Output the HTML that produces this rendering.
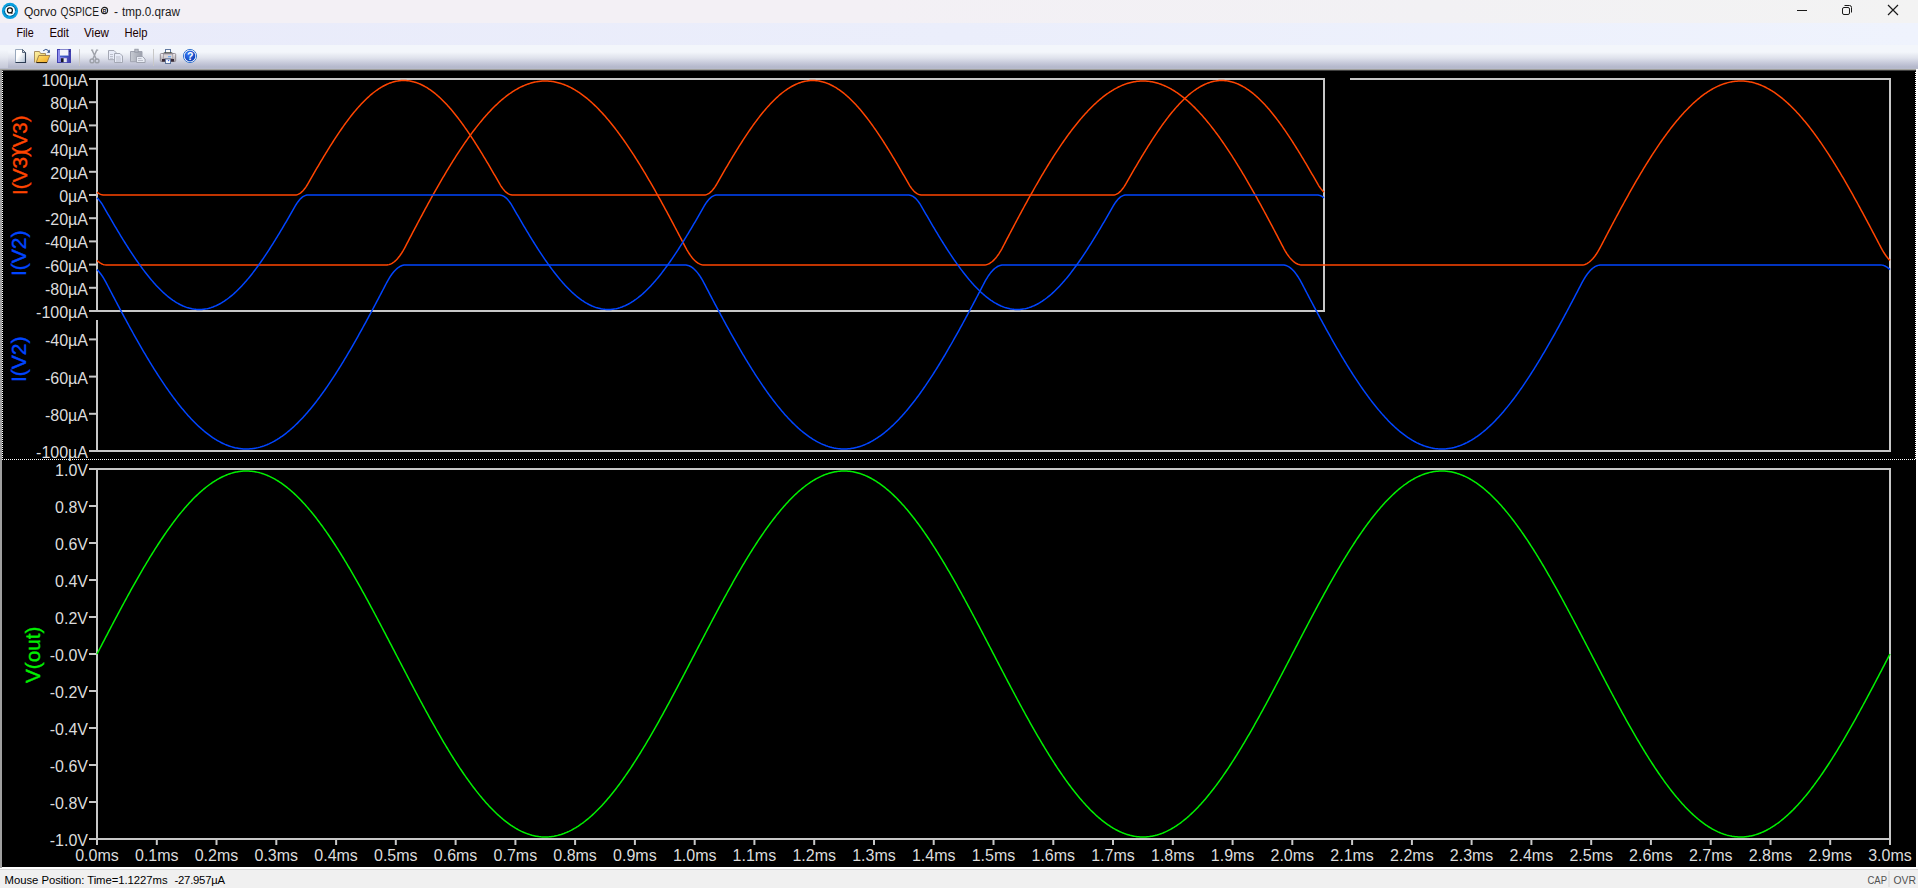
<!DOCTYPE html>
<html><head><meta charset="utf-8">
<style>
html,body{margin:0;padding:0;width:1918px;height:888px;overflow:hidden;background:#f0f0f0}
body{position:relative;font-family:"Liberation Sans",sans-serif}
.abs{position:absolute}
#title{left:0;top:0;width:1918px;height:23px;background:linear-gradient(to right,#f3f0f5 0%,#f3f0f5 45%,#f2f1f4 75%,#f3f3f3 100%)}
#menu{left:0;top:23px;width:1918px;height:22px;background:linear-gradient(to right,#e9ebfa 0%,#ebeefb 50%,#eff3fd 100%)}
#tool{left:0;top:45px;width:1918px;height:26px;background:linear-gradient(#f3f6fb 0px,#f3f6fb 7px,#dfe2ec 13px,#c6c9da 18px,#b4b8cc 22px,#b8bbcc 24px,#a0a09c 24px,#a0a09c 25px,#404040 25px,#404040 26px)}
#status{left:0;top:867px;width:1918px;height:21px;background:linear-gradient(#fff 0px,#fff 2px,#dadada 2px,#dadada 3px,#f0f0f0 3px)}
svg text{font-family:"Liberation Sans",sans-serif}
.al{font-size:16px;fill:#dcdcdc;text-anchor:end}
.xl{font-size:16px;fill:#dcdcdc;text-anchor:middle}
.tl{font-size:20px}
.mt{font-size:12px;fill:#1a0000}
</style></head><body>
<div id="title" class="abs"></div>
<div id="menu" class="abs"></div>
<div id="tool" class="abs"></div>
<div class="abs" style="left:0;top:45px;width:8px;height:23px;background:linear-gradient(#f3f6fb 0px,#f3f6fb 5px,#e6e9f1 12px,#d2d5e2 18px,#c6c9d8 23px)"></div>
<div id="status" class="abs"></div>
<svg class="abs" style="left:0;top:0" width="1918" height="888" viewBox="0 0 1918 888">
<!-- title -->
<circle cx="10" cy="10.9" r="8.1" fill="#0aa0e0"/>
<circle cx="10" cy="10.8" r="5.6" fill="none" stroke="#104060" stroke-width="0.9" stroke-dasharray="6 2.8 6 2.8" stroke-dashoffset="-2" opacity="0.8"/>
<circle cx="10" cy="10.8" r="4.9" fill="#fff"/>
<circle cx="9.9" cy="10.4" r="2.5" fill="none" stroke="#111" stroke-width="1.25"/>
<path d="M10.8,12.2L12.4,13.5" stroke="#111" stroke-width="1.3"/>
<g style="font-size:12px;fill:#1a1a1a"><text x="24" y="16">Qorvo</text><text x="60.5" y="16" textLength="38.5" lengthAdjust="spacingAndGlyphs">QSPICE</text></g><circle cx="104.5" cy="10.5" r="3.1" fill="none" stroke="#1a1a1a" stroke-width="1.1"/><text x="104.6" y="12.6" style="font-size:5.5px;font-weight:bold;fill:#1a1a1a;text-anchor:middle">R</text><g style="font-size:12px;fill:#1a1a1a"><text x="114" y="16">-</text><text x="122" y="16" textLength="58" lengthAdjust="spacingAndGlyphs">tmp.0.qraw</text></g>
<g stroke="#1a1a1a" stroke-width="1" fill="none">
<path d="M1797,10.5H1807"/>
<rect x="1842.5" y="7.5" width="7" height="7" rx="1.5"/>
<path d="M1844.5,5.5H1849.5a2,2 0 0 1 2,2V12.5"/>
<path d="M1888,5L1898,15M1898,5L1888,15" stroke-width="1.2"/>
</g>
<!-- menu -->
<text x="16.4" y="37" class="mt" textLength="17.3" lengthAdjust="spacingAndGlyphs">File</text>
<text x="49.5" y="37" class="mt" textLength="19.5" lengthAdjust="spacingAndGlyphs">Edit</text>
<text x="84" y="37" class="mt" textLength="25" lengthAdjust="spacingAndGlyphs">View</text>
<text x="124.5" y="37" class="mt" textLength="23" lengthAdjust="spacingAndGlyphs">Help</text>
<!-- toolbar icons -->
<g id="icons">
<defs>
<linearGradient id="gdoc" x1="0" y1="0" x2="1" y2="1"><stop offset="0.4" stop-color="#ffffff"/><stop offset="1" stop-color="#b0c0d4"/></linearGradient>
<linearGradient id="gfb" x1="0" y1="0" x2="1" y2="1"><stop offset="0" stop-color="#fff4a8"/><stop offset="1" stop-color="#e8c050"/></linearGradient>
<linearGradient id="gff" x1="0" y1="0" x2="1" y2="1"><stop offset="0" stop-color="#ffe070"/><stop offset="1" stop-color="#f0a820"/></linearGradient>
<linearGradient id="gsave" x1="0" y1="0" x2="1" y2="0"><stop offset="0" stop-color="#9c9cf8"/><stop offset="1" stop-color="#3434a4"/></linearGradient>
<linearGradient id="gclip" x1="0" y1="0" x2="1" y2="0"><stop offset="0" stop-color="#c8ccd4"/><stop offset="1" stop-color="#9ca0ac"/></linearGradient>
<linearGradient id="gprn" x1="0" y1="0" x2="0" y2="1"><stop offset="0" stop-color="#f4f0f4"/><stop offset="0.5" stop-color="#c8c4c8"/><stop offset="1" stop-color="#a8a4a8"/></linearGradient>
<radialGradient id="ghelp" cx="0.35" cy="0.3" r="0.8"><stop offset="0" stop-color="#3a7cf8"/><stop offset="1" stop-color="#0838b0"/></radialGradient>
</defs>
<!-- new -->
<path d="M15.5,49.5H22.5L25.5,52.5V62.5H15.5Z" fill="url(#gdoc)" stroke="#98a8bc" stroke-width="1"/>
<path d="M25.5,52.5V62.5H15.5" fill="none" stroke="#2c3c54" stroke-width="1.1"/>
<path d="M22.5,49.5V52.5H25.5Z" fill="#d8e0ec" stroke="#3a4a60" stroke-width="0.8"/>
<!-- open -->
<path d="M34.5,62.5V51.5H39.5L40.5,53.5H45.5V56" fill="url(#gfb)" stroke="#a89060" stroke-width="1"/>
<path d="M36.2,62.5L38.8,55.5H49.8L47,62.5Z" fill="url(#gff)" stroke="#907040" stroke-width="0.8"/>
<path d="M36.5,62.6H47" stroke="#281c08" stroke-width="1"/>
<path d="M43.2,50.8Q45.8,48 48.6,50.6" fill="none" stroke="#30508a" stroke-width="1"/>
<path d="M47,52.8L50,52.8L49.6,49.6Z" fill="#30508a"/>
<!-- save -->
<rect x="57" y="49" width="14" height="14" fill="url(#gsave)"/>
<rect x="57.5" y="49.5" width="13" height="13" fill="none" stroke="#4040b0" stroke-width="1"/>
<rect x="60" y="49.6" width="8.4" height="6.2" fill="#f2f4fa"/>
<path d="M60,56.2H68.4" stroke="#2850c0" stroke-width="1"/>
<rect x="61" y="58.2" width="5.8" height="4" fill="#e4e8f0"/>
<rect x="61" y="58.2" width="2.6" height="4" fill="#141428"/>
<rect x="69.2" y="50.8" width="1" height="1" fill="#202050"/>
<path d="M79.5,49V66" stroke="#c8c8c8" stroke-width="1"/>
<!-- cut -->
<g fill="none" stroke="#9ea2aa" stroke-width="1.4">
<circle cx="92" cy="60.9" r="1.9"/><circle cx="97.1" cy="60.9" r="1.9"/>
<path d="M92.8,59.2L96.6,50.4M96.3,59.2L92.2,50.4"/>
</g>
<path d="M91,50.2h2.2M96,50.2h2.2" stroke="#9ea2aa" stroke-width="1.2"/>
<!-- copy -->
<g stroke="#a4a8b4" stroke-width="1">
<path d="M108.5,50.5h5.5l2,2v7.2h-7.5Z" fill="#e8ecf8"/>
<path d="M114.5,53.5h5.5l2.5,2.5v6.5h-8Z" fill="#e8ecf8"/>
</g>
<g stroke="#b0b4c0" stroke-width="0.8">
<path d="M110,54.5h3M110,56.5h3M110,58.3h3M116,57h4.5M116,59h5M116,61h5"/>
</g>
<!-- paste -->
<path d="M130.5,51.5h11.5v10.2h-11.5Z" fill="url(#gclip)" stroke="#a0a4b0" stroke-width="1"/>
<rect x="134.8" y="49.2" width="3.4" height="3" fill="#b8bcc6" stroke="#9094a0" stroke-width="0.8"/>
<path d="M136.5,56.5h6l2.6,2.5v3.5h-8.6Z" fill="#e8ecf4" stroke="#a0a4b0" stroke-width="1"/>
<path d="M138,58.5h3.5M138,60.5h5" stroke="#b0b4c0" stroke-width="0.8"/>
<path d="M153.5,49V66" stroke="#c8c8c8" stroke-width="1"/>
<!-- print -->
<rect x="165.5" y="49.5" width="5" height="4" fill="#fff" stroke="#6078a0" stroke-width="1"/>
<path d="M162.5,53.5L164.5,52.2H171.5L173.5,53.5Z" fill="#404840"/>
<rect x="160.3" y="53.5" width="15.4" height="8" rx="1" fill="url(#gprn)" stroke="#807880" stroke-width="0.8"/>
<rect x="163.3" y="54" width="9.5" height="4.5" fill="#d8d4d8" stroke="#908890" stroke-width="0.6"/>
<rect x="168" y="56.2" width="3" height="1" fill="#58a0f8"/>
<rect x="162" y="59" width="12" height="2.6" fill="#382a38"/>
<rect x="165.5" y="59" width="5" height="4.5" fill="#f4f8ff" stroke="#6078a0" stroke-width="1"/>
<circle cx="168.6" cy="60.6" r="0.7" fill="#2850e0"/>
<!-- help -->
<circle cx="190" cy="56" r="6.6" fill="#ffffff" stroke="#3a78d0" stroke-width="1"/>
<circle cx="190" cy="56" r="5.4" fill="url(#ghelp)"/>
<text x="190.3" y="60.2" style="font-size:10.5px;font-weight:bold;fill:#fff;text-anchor:middle">?</text>
</g>
<rect x="2" y="71" width="1914" height="796" fill="#000"/>
<rect x="0" y="70" width="2" height="798" fill="#a0a0a0"/>
<rect x="1916" y="69" width="2" height="798" fill="#ffffff"/>
<defs><pattern id="dh" x="0" y="0" width="2" height="1" patternUnits="userSpaceOnUse"><rect x="0" y="0" width="1" height="1" fill="#fff"/></pattern><pattern id="dv1" x="0" y="1" width="1" height="2" patternUnits="userSpaceOnUse"><rect x="0" y="0" width="1" height="1" fill="#fff"/></pattern><pattern id="dv2" x="0" y="0" width="1" height="2" patternUnits="userSpaceOnUse"><rect x="0" y="0" width="1" height="1" fill="#fff"/></pattern></defs>
<rect x="2" y="459" width="1914" height="1" fill="url(#dh)"/>
<rect x="2" y="71" width="1" height="389" fill="url(#dv1)"/>
<rect x="1915" y="72" width="1" height="387" fill="url(#dv2)"/>
<path d="M1350,79H1890V451H97V320" fill="none" stroke="#c8c8c8" stroke-width="2"/>
<path d="M89,339.4H97" stroke="#c8c8c8" stroke-width="2"/>
<text x="88" y="346.4" class="al">-40µA</text>
<path d="M89,376.6H97" stroke="#c8c8c8" stroke-width="2"/>
<text x="88" y="383.6" class="al">-60µA</text>
<path d="M89,413.8H97" stroke="#c8c8c8" stroke-width="2"/>
<text x="88" y="420.8" class="al">-80µA</text>
<path d="M89,451.0H97" stroke="#c8c8c8" stroke-width="2"/>
<text x="88" y="458.0" class="al">-100µA</text>
<path d="M97,79H1324V311H97Z" fill="none" stroke="#c8c8c8" stroke-width="2"/>
<path d="M89,79.0H97" stroke="#c8c8c8" stroke-width="2"/>
<text x="88" y="86.0" class="al">100µA</text>
<path d="M89,102.2H97" stroke="#c8c8c8" stroke-width="2"/>
<text x="88" y="109.2" class="al">80µA</text>
<path d="M89,125.4H97" stroke="#c8c8c8" stroke-width="2"/>
<text x="88" y="132.4" class="al">60µA</text>
<path d="M89,148.6H97" stroke="#c8c8c8" stroke-width="2"/>
<text x="88" y="155.6" class="al">40µA</text>
<path d="M89,171.8H97" stroke="#c8c8c8" stroke-width="2"/>
<text x="88" y="178.8" class="al">20µA</text>
<path d="M89,195.0H97" stroke="#c8c8c8" stroke-width="2"/>
<text x="88" y="202.0" class="al">0µA</text>
<path d="M89,218.2H97" stroke="#c8c8c8" stroke-width="2"/>
<text x="88" y="225.2" class="al">-20µA</text>
<path d="M89,241.4H97" stroke="#c8c8c8" stroke-width="2"/>
<text x="88" y="248.4" class="al">-40µA</text>
<path d="M89,264.6H97" stroke="#c8c8c8" stroke-width="2"/>
<text x="88" y="271.6" class="al">-60µA</text>
<path d="M89,287.8H97" stroke="#c8c8c8" stroke-width="2"/>
<text x="88" y="294.8" class="al">-80µA</text>
<path d="M89,311.0H97" stroke="#c8c8c8" stroke-width="2"/>
<text x="88" y="318.0" class="al">-100µA</text>
<path d="M97.00,260.40 L98.00,261.32 L99.00,262.13 L100.00,262.84 L101.00,263.45 L102.00,263.96 L103.00,264.37 L104.00,264.68 L105.00,264.88 L106.00,264.99 L107.00,265.00 L108.00,265.00 L109.00,265.00 L110.00,265.00 L111.00,265.00 L112.00,265.00 L113.00,265.00 L114.00,265.00 L115.00,265.00 L116.00,265.00 L117.00,265.00 L118.00,265.00 L119.00,265.00 L120.00,265.00 L121.00,265.00 L122.00,265.00 L123.00,265.00 L124.00,265.00 L125.00,265.00 L126.00,265.00 L127.00,265.00 L128.00,265.00 L129.00,265.00 L130.00,265.00 L131.00,265.00 L132.00,265.00 L133.00,265.00 L134.00,265.00 L135.00,265.00 L136.00,265.00 L137.00,265.00 L138.00,265.00 L139.00,265.00 L140.00,265.00 L141.00,265.00 L142.00,265.00 L143.00,265.00 L144.00,265.00 L145.00,265.00 L146.00,265.00 L147.00,265.00 L148.00,265.00 L149.00,265.00 L150.00,265.00 L151.00,265.00 L152.00,265.00 L153.00,265.00 L154.00,265.00 L155.00,265.00 L156.00,265.00 L157.00,265.00 L158.00,265.00 L159.00,265.00 L160.00,265.00 L161.00,265.00 L162.00,265.00 L163.00,265.00 L164.00,265.00 L165.00,265.00 L166.00,265.00 L167.00,265.00 L168.00,265.00 L169.00,265.00 L170.00,265.00 L171.00,265.00 L172.00,265.00 L173.00,265.00 L174.00,265.00 L175.00,265.00 L176.00,265.00 L177.00,265.00 L178.00,265.00 L179.00,265.00 L180.00,265.00 L181.00,265.00 L182.00,265.00 L183.00,265.00 L184.00,265.00 L185.00,265.00 L186.00,265.00 L187.00,265.00 L188.00,265.00 L189.00,265.00 L190.00,265.00 L191.00,265.00 L192.00,265.00 L193.00,265.00 L194.00,265.00 L195.00,265.00 L196.00,265.00 L197.00,265.00 L198.00,265.00 L199.00,265.00 L200.00,265.00 L201.00,265.00 L202.00,265.00 L203.00,265.00 L204.00,265.00 L205.00,265.00 L206.00,265.00 L207.00,265.00 L208.00,265.00 L209.00,265.00 L210.00,265.00 L211.00,265.00 L212.00,265.00 L213.00,265.00 L214.00,265.00 L215.00,265.00 L216.00,265.00 L217.00,265.00 L218.00,265.00 L219.00,265.00 L220.00,265.00 L221.00,265.00 L222.00,265.00 L223.00,265.00 L224.00,265.00 L225.00,265.00 L226.00,265.00 L227.00,265.00 L228.00,265.00 L229.00,265.00 L230.00,265.00 L231.00,265.00 L232.00,265.00 L233.00,265.00 L234.00,265.00 L235.00,265.00 L236.00,265.00 L237.00,265.00 L238.00,265.00 L239.00,265.00 L240.00,265.00 L241.00,265.00 L242.00,265.00 L243.00,265.00 L244.00,265.00 L245.00,265.00 L246.00,265.00 L247.00,265.00 L248.00,265.00 L249.00,265.00 L250.00,265.00 L251.00,265.00 L252.00,265.00 L253.00,265.00 L254.00,265.00 L255.00,265.00 L256.00,265.00 L257.00,265.00 L258.00,265.00 L259.00,265.00 L260.00,265.00 L261.00,265.00 L262.00,265.00 L263.00,265.00 L264.00,265.00 L265.00,265.00 L266.00,265.00 L267.00,265.00 L268.00,265.00 L269.00,265.00 L270.00,265.00 L271.00,265.00 L272.00,265.00 L273.00,265.00 L274.00,265.00 L275.00,265.00 L276.00,265.00 L277.00,265.00 L278.00,265.00 L279.00,265.00 L280.00,265.00 L281.00,265.00 L282.00,265.00 L283.00,265.00 L284.00,265.00 L285.00,265.00 L286.00,265.00 L287.00,265.00 L288.00,265.00 L289.00,265.00 L290.00,265.00 L291.00,265.00 L292.00,265.00 L293.00,265.00 L294.00,265.00 L295.00,265.00 L296.00,265.00 L297.00,265.00 L298.00,265.00 L299.00,265.00 L300.00,265.00 L301.00,265.00 L302.00,265.00 L303.00,265.00 L304.00,265.00 L305.00,265.00 L306.00,265.00 L307.00,265.00 L308.00,265.00 L309.00,265.00 L310.00,265.00 L311.00,265.00 L312.00,265.00 L313.00,265.00 L314.00,265.00 L315.00,265.00 L316.00,265.00 L317.00,265.00 L318.00,265.00 L319.00,265.00 L320.00,265.00 L321.00,265.00 L322.00,265.00 L323.00,265.00 L324.00,265.00 L325.00,265.00 L326.00,265.00 L327.00,265.00 L328.00,265.00 L329.00,265.00 L330.00,265.00 L331.00,265.00 L332.00,265.00 L333.00,265.00 L334.00,265.00 L335.00,265.00 L336.00,265.00 L337.00,265.00 L338.00,265.00 L339.00,265.00 L340.00,265.00 L341.00,265.00 L342.00,265.00 L343.00,265.00 L344.00,265.00 L345.00,265.00 L346.00,265.00 L347.00,265.00 L348.00,265.00 L349.00,265.00 L350.00,265.00 L351.00,265.00 L352.00,265.00 L353.00,265.00 L354.00,265.00 L355.00,265.00 L356.00,265.00 L357.00,265.00 L358.00,265.00 L359.00,265.00 L360.00,265.00 L361.00,265.00 L362.00,265.00 L363.00,265.00 L364.00,265.00 L365.00,265.00 L366.00,265.00 L367.00,265.00 L368.00,265.00 L369.00,265.00 L370.00,265.00 L371.00,265.00 L372.00,265.00 L373.00,265.00 L374.00,265.00 L375.00,265.00 L376.00,265.00 L377.00,265.00 L378.00,265.00 L379.00,265.00 L380.00,265.00 L381.00,265.00 L382.00,265.00 L383.00,265.00 L384.00,265.00 L385.00,265.00 L386.00,265.00 L387.00,264.98 L388.00,264.86 L389.00,264.63 L390.00,264.31 L391.00,263.89 L392.00,263.36 L393.00,262.73 L394.00,262.00 L395.00,261.17 L396.00,260.24 L397.00,259.20 L398.00,258.07 L399.00,256.83 L400.00,255.49 L401.00,254.05 L402.00,252.51 L403.00,250.87 L404.00,249.13 L405.00,247.29 L406.00,245.37 L407.00,243.45 L408.00,241.53 L409.00,239.61 L410.00,237.70 L411.00,235.79 L412.00,233.88 L413.00,231.97 L414.00,230.07 L415.00,228.18 L416.00,226.28 L417.00,224.39 L418.00,222.51 L419.00,220.63 L420.00,218.75 L421.00,216.88 L422.00,215.02 L423.00,213.16 L424.00,211.31 L425.00,209.46 L426.00,207.62 L427.00,205.79 L428.00,203.96 L429.00,202.14 L430.00,200.32 L431.00,198.51 L432.00,196.71 L433.00,194.92 L434.00,193.14 L435.00,191.36 L436.00,189.59 L437.00,187.83 L438.00,186.08 L439.00,184.34 L440.00,182.60 L441.00,180.88 L442.00,179.16 L443.00,177.46 L444.00,175.76 L445.00,174.07 L446.00,172.40 L447.00,170.73 L448.00,169.07 L449.00,167.43 L450.00,165.79 L451.00,164.17 L452.00,162.56 L453.00,160.96 L454.00,159.37 L455.00,157.79 L456.00,156.22 L457.00,154.67 L458.00,153.13 L459.00,151.60 L460.00,150.08 L461.00,148.58 L462.00,147.08 L463.00,145.61 L464.00,144.14 L465.00,142.69 L466.00,141.25 L467.00,139.83 L468.00,138.41 L469.00,137.02 L470.00,135.64 L471.00,134.27 L472.00,132.91 L473.00,131.57 L474.00,130.25 L475.00,128.94 L476.00,127.64 L477.00,126.37 L478.00,125.10 L479.00,123.85 L480.00,122.62 L481.00,121.40 L482.00,120.20 L483.00,119.01 L484.00,117.85 L485.00,116.69 L486.00,115.56 L487.00,114.44 L488.00,113.33 L489.00,112.25 L490.00,111.18 L491.00,110.12 L492.00,109.09 L493.00,108.07 L494.00,107.07 L495.00,106.08 L496.00,105.12 L497.00,104.17 L498.00,103.24 L499.00,102.32 L500.00,101.43 L501.00,100.55 L502.00,99.69 L503.00,98.85 L504.00,98.03 L505.00,97.23 L506.00,96.44 L507.00,95.68 L508.00,94.93 L509.00,94.20 L510.00,93.49 L511.00,92.80 L512.00,92.13 L513.00,91.47 L514.00,90.84 L515.00,90.23 L516.00,89.63 L517.00,89.06 L518.00,88.50 L519.00,87.96 L520.00,87.44 L521.00,86.95 L522.00,86.47 L523.00,86.01 L524.00,85.57 L525.00,85.15 L526.00,84.75 L527.00,84.38 L528.00,84.02 L529.00,83.68 L530.00,83.36 L531.00,83.06 L532.00,82.78 L533.00,82.52 L534.00,82.29 L535.00,82.07 L536.00,81.87 L537.00,81.69 L538.00,81.53 L539.00,81.40 L540.00,81.28 L541.00,81.18 L542.00,81.11 L543.00,81.05 L544.00,81.02 L545.00,81.00 L546.00,81.01 L547.00,81.03 L548.00,81.08 L549.00,81.14 L550.00,81.23 L551.00,81.34 L552.00,81.46 L553.00,81.61 L554.00,81.78 L555.00,81.97 L556.00,82.17 L557.00,82.40 L558.00,82.65 L559.00,82.92 L560.00,83.21 L561.00,83.52 L562.00,83.85 L563.00,84.19 L564.00,84.56 L565.00,84.95 L566.00,85.36 L567.00,85.79 L568.00,86.24 L569.00,86.71 L570.00,87.19 L571.00,87.70 L572.00,88.23 L573.00,88.77 L574.00,89.34 L575.00,89.93 L576.00,90.53 L577.00,91.16 L578.00,91.80 L579.00,92.46 L580.00,93.14 L581.00,93.84 L582.00,94.56 L583.00,95.30 L584.00,96.06 L585.00,96.83 L586.00,97.63 L587.00,98.44 L588.00,99.27 L589.00,100.12 L590.00,100.99 L591.00,101.87 L592.00,102.78 L593.00,103.70 L594.00,104.64 L595.00,105.60 L596.00,106.57 L597.00,107.57 L598.00,108.58 L599.00,109.60 L600.00,110.65 L601.00,111.71 L602.00,112.79 L603.00,113.88 L604.00,114.99 L605.00,116.12 L606.00,117.27 L607.00,118.43 L608.00,119.61 L609.00,120.80 L610.00,122.01 L611.00,123.23 L612.00,124.47 L613.00,125.73 L614.00,127.00 L615.00,128.29 L616.00,129.59 L617.00,130.91 L618.00,132.24 L619.00,133.59 L620.00,134.95 L621.00,136.32 L622.00,137.71 L623.00,139.12 L624.00,140.54 L625.00,141.97 L626.00,143.41 L627.00,144.87 L628.00,146.34 L629.00,147.83 L630.00,149.33 L631.00,150.84 L632.00,152.36 L633.00,153.90 L634.00,155.44 L635.00,157.00 L636.00,158.58 L637.00,160.16 L638.00,161.76 L639.00,163.36 L640.00,164.98 L641.00,166.61 L642.00,168.25 L643.00,169.90 L644.00,171.56 L645.00,173.23 L646.00,174.91 L647.00,176.61 L648.00,178.31 L649.00,180.02 L650.00,181.74 L651.00,183.47 L652.00,185.21 L653.00,186.95 L654.00,188.71 L655.00,190.47 L656.00,192.25 L657.00,194.03 L658.00,195.82 L659.00,197.61 L660.00,199.42 L661.00,201.23 L662.00,203.05 L663.00,204.87 L664.00,206.70 L665.00,208.54 L666.00,210.38 L667.00,212.23 L668.00,214.09 L669.00,215.95 L670.00,217.82 L671.00,219.69 L672.00,221.57 L673.00,223.45 L674.00,225.34 L675.00,227.23 L676.00,229.12 L677.00,231.02 L678.00,232.93 L679.00,234.83 L680.00,236.74 L681.00,238.65 L682.00,240.57 L683.00,242.49 L684.00,244.41 L685.00,246.33 L686.00,248.22 L687.00,250.01 L688.00,251.70 L689.00,253.29 L690.00,254.78 L691.00,256.17 L692.00,257.46 L693.00,258.65 L694.00,259.73 L695.00,260.72 L696.00,261.60 L697.00,262.38 L698.00,263.06 L699.00,263.64 L700.00,264.11 L701.00,264.48 L702.00,264.76 L703.00,264.93 L704.00,265.00 L705.00,265.00 L706.00,265.00 L707.00,265.00 L708.00,265.00 L709.00,265.00 L710.00,265.00 L711.00,265.00 L712.00,265.00 L713.00,265.00 L714.00,265.00 L715.00,265.00 L716.00,265.00 L717.00,265.00 L718.00,265.00 L719.00,265.00 L720.00,265.00 L721.00,265.00 L722.00,265.00 L723.00,265.00 L724.00,265.00 L725.00,265.00 L726.00,265.00 L727.00,265.00 L728.00,265.00 L729.00,265.00 L730.00,265.00 L731.00,265.00 L732.00,265.00 L733.00,265.00 L734.00,265.00 L735.00,265.00 L736.00,265.00 L737.00,265.00 L738.00,265.00 L739.00,265.00 L740.00,265.00 L741.00,265.00 L742.00,265.00 L743.00,265.00 L744.00,265.00 L745.00,265.00 L746.00,265.00 L747.00,265.00 L748.00,265.00 L749.00,265.00 L750.00,265.00 L751.00,265.00 L752.00,265.00 L753.00,265.00 L754.00,265.00 L755.00,265.00 L756.00,265.00 L757.00,265.00 L758.00,265.00 L759.00,265.00 L760.00,265.00 L761.00,265.00 L762.00,265.00 L763.00,265.00 L764.00,265.00 L765.00,265.00 L766.00,265.00 L767.00,265.00 L768.00,265.00 L769.00,265.00 L770.00,265.00 L771.00,265.00 L772.00,265.00 L773.00,265.00 L774.00,265.00 L775.00,265.00 L776.00,265.00 L777.00,265.00 L778.00,265.00 L779.00,265.00 L780.00,265.00 L781.00,265.00 L782.00,265.00 L783.00,265.00 L784.00,265.00 L785.00,265.00 L786.00,265.00 L787.00,265.00 L788.00,265.00 L789.00,265.00 L790.00,265.00 L791.00,265.00 L792.00,265.00 L793.00,265.00 L794.00,265.00 L795.00,265.00 L796.00,265.00 L797.00,265.00 L798.00,265.00 L799.00,265.00 L800.00,265.00 L801.00,265.00 L802.00,265.00 L803.00,265.00 L804.00,265.00 L805.00,265.00 L806.00,265.00 L807.00,265.00 L808.00,265.00 L809.00,265.00 L810.00,265.00 L811.00,265.00 L812.00,265.00 L813.00,265.00 L814.00,265.00 L815.00,265.00 L816.00,265.00 L817.00,265.00 L818.00,265.00 L819.00,265.00 L820.00,265.00 L821.00,265.00 L822.00,265.00 L823.00,265.00 L824.00,265.00 L825.00,265.00 L826.00,265.00 L827.00,265.00 L828.00,265.00 L829.00,265.00 L830.00,265.00 L831.00,265.00 L832.00,265.00 L833.00,265.00 L834.00,265.00 L835.00,265.00 L836.00,265.00 L837.00,265.00 L838.00,265.00 L839.00,265.00 L840.00,265.00 L841.00,265.00 L842.00,265.00 L843.00,265.00 L844.00,265.00 L845.00,265.00 L846.00,265.00 L847.00,265.00 L848.00,265.00 L849.00,265.00 L850.00,265.00 L851.00,265.00 L852.00,265.00 L853.00,265.00 L854.00,265.00 L855.00,265.00 L856.00,265.00 L857.00,265.00 L858.00,265.00 L859.00,265.00 L860.00,265.00 L861.00,265.00 L862.00,265.00 L863.00,265.00 L864.00,265.00 L865.00,265.00 L866.00,265.00 L867.00,265.00 L868.00,265.00 L869.00,265.00 L870.00,265.00 L871.00,265.00 L872.00,265.00 L873.00,265.00 L874.00,265.00 L875.00,265.00 L876.00,265.00 L877.00,265.00 L878.00,265.00 L879.00,265.00 L880.00,265.00 L881.00,265.00 L882.00,265.00 L883.00,265.00 L884.00,265.00 L885.00,265.00 L886.00,265.00 L887.00,265.00 L888.00,265.00 L889.00,265.00 L890.00,265.00 L891.00,265.00 L892.00,265.00 L893.00,265.00 L894.00,265.00 L895.00,265.00 L896.00,265.00 L897.00,265.00 L898.00,265.00 L899.00,265.00 L900.00,265.00 L901.00,265.00 L902.00,265.00 L903.00,265.00 L904.00,265.00 L905.00,265.00 L906.00,265.00 L907.00,265.00 L908.00,265.00 L909.00,265.00 L910.00,265.00 L911.00,265.00 L912.00,265.00 L913.00,265.00 L914.00,265.00 L915.00,265.00 L916.00,265.00 L917.00,265.00 L918.00,265.00 L919.00,265.00 L920.00,265.00 L921.00,265.00 L922.00,265.00 L923.00,265.00 L924.00,265.00 L925.00,265.00 L926.00,265.00 L927.00,265.00 L928.00,265.00 L929.00,265.00 L930.00,265.00 L931.00,265.00 L932.00,265.00 L933.00,265.00 L934.00,265.00 L935.00,265.00 L936.00,265.00 L937.00,265.00 L938.00,265.00 L939.00,265.00 L940.00,265.00 L941.00,265.00 L942.00,265.00 L943.00,265.00 L944.00,265.00 L945.00,265.00 L946.00,265.00 L947.00,265.00 L948.00,265.00 L949.00,265.00 L950.00,265.00 L951.00,265.00 L952.00,265.00 L953.00,265.00 L954.00,265.00 L955.00,265.00 L956.00,265.00 L957.00,265.00 L958.00,265.00 L959.00,265.00 L960.00,265.00 L961.00,265.00 L962.00,265.00 L963.00,265.00 L964.00,265.00 L965.00,265.00 L966.00,265.00 L967.00,265.00 L968.00,265.00 L969.00,265.00 L970.00,265.00 L971.00,265.00 L972.00,265.00 L973.00,265.00 L974.00,265.00 L975.00,265.00 L976.00,265.00 L977.00,265.00 L978.00,265.00 L979.00,265.00 L980.00,265.00 L981.00,265.00 L982.00,265.00 L983.00,265.00 L984.00,265.00 L985.00,264.95 L986.00,264.79 L987.00,264.54 L988.00,264.18 L989.00,263.72 L990.00,263.16 L991.00,262.50 L992.00,261.74 L993.00,260.87 L994.00,259.90 L995.00,258.83 L996.00,257.66 L997.00,256.39 L998.00,255.02 L999.00,253.55 L1000.00,251.97 L1001.00,250.30 L1002.00,248.53 L1003.00,246.65 L1004.00,244.73 L1005.00,242.81 L1006.00,240.89 L1007.00,238.97 L1008.00,237.06 L1009.00,235.15 L1010.00,233.24 L1011.00,231.34 L1012.00,229.44 L1013.00,227.54 L1014.00,225.65 L1015.00,223.76 L1016.00,221.88 L1017.00,220.00 L1018.00,218.13 L1019.00,216.26 L1020.00,214.40 L1021.00,212.54 L1022.00,210.69 L1023.00,208.85 L1024.00,207.01 L1025.00,205.18 L1026.00,203.35 L1027.00,201.53 L1028.00,199.72 L1029.00,197.91 L1030.00,196.12 L1031.00,194.33 L1032.00,192.54 L1033.00,190.77 L1034.00,189.00 L1035.00,187.25 L1036.00,185.50 L1037.00,183.76 L1038.00,182.03 L1039.00,180.30 L1040.00,178.59 L1041.00,176.89 L1042.00,175.20 L1043.00,173.51 L1044.00,171.84 L1045.00,170.18 L1046.00,168.52 L1047.00,166.88 L1048.00,165.25 L1049.00,163.63 L1050.00,162.02 L1051.00,160.43 L1052.00,158.84 L1053.00,157.27 L1054.00,155.70 L1055.00,154.15 L1056.00,152.62 L1057.00,151.09 L1058.00,149.58 L1059.00,148.08 L1060.00,146.59 L1061.00,145.12 L1062.00,143.66 L1063.00,142.21 L1064.00,140.77 L1065.00,139.35 L1066.00,137.95 L1067.00,136.56 L1068.00,135.18 L1069.00,133.81 L1070.00,132.46 L1071.00,131.13 L1072.00,129.81 L1073.00,128.51 L1074.00,127.22 L1075.00,125.94 L1076.00,124.68 L1077.00,123.44 L1078.00,122.21 L1079.00,121.00 L1080.00,119.80 L1081.00,118.62 L1082.00,117.46 L1083.00,116.31 L1084.00,115.18 L1085.00,114.07 L1086.00,112.97 L1087.00,111.89 L1088.00,110.82 L1089.00,109.78 L1090.00,108.75 L1091.00,107.73 L1092.00,106.74 L1093.00,105.76 L1094.00,104.80 L1095.00,103.86 L1096.00,102.93 L1097.00,102.02 L1098.00,101.14 L1099.00,100.26 L1100.00,99.41 L1101.00,98.58 L1102.00,97.76 L1103.00,96.96 L1104.00,96.19 L1105.00,95.43 L1106.00,94.68 L1107.00,93.96 L1108.00,93.26 L1109.00,92.57 L1110.00,91.91 L1111.00,91.26 L1112.00,90.63 L1113.00,90.03 L1114.00,89.44 L1115.00,88.87 L1116.00,88.32 L1117.00,87.79 L1118.00,87.28 L1119.00,86.79 L1120.00,86.31 L1121.00,85.86 L1122.00,85.43 L1123.00,85.02 L1124.00,84.63 L1125.00,84.25 L1126.00,83.90 L1127.00,83.57 L1128.00,83.26 L1129.00,82.97 L1130.00,82.69 L1131.00,82.44 L1132.00,82.21 L1133.00,82.00 L1134.00,81.81 L1135.00,81.64 L1136.00,81.49 L1137.00,81.36 L1138.00,81.25 L1139.00,81.16 L1140.00,81.09 L1141.00,81.04 L1142.00,81.01 L1143.00,81.00 L1144.00,81.01 L1145.00,81.04 L1146.00,81.10 L1147.00,81.17 L1148.00,81.26 L1149.00,81.38 L1150.00,81.51 L1151.00,81.66 L1152.00,81.84 L1153.00,82.03 L1154.00,82.25 L1155.00,82.48 L1156.00,82.74 L1157.00,83.01 L1158.00,83.31 L1159.00,83.62 L1160.00,83.96 L1161.00,84.31 L1162.00,84.69 L1163.00,85.09 L1164.00,85.50 L1165.00,85.94 L1166.00,86.39 L1167.00,86.87 L1168.00,87.36 L1169.00,87.87 L1170.00,88.41 L1171.00,88.96 L1172.00,89.53 L1173.00,90.13 L1174.00,90.74 L1175.00,91.37 L1176.00,92.02 L1177.00,92.69 L1178.00,93.37 L1179.00,94.08 L1180.00,94.81 L1181.00,95.55 L1182.00,96.31 L1183.00,97.10 L1184.00,97.90 L1185.00,98.72 L1186.00,99.55 L1187.00,100.41 L1188.00,101.28 L1189.00,102.17 L1190.00,103.08 L1191.00,104.01 L1192.00,104.96 L1193.00,105.92 L1194.00,106.90 L1195.00,107.90 L1196.00,108.92 L1197.00,109.95 L1198.00,111.00 L1199.00,112.07 L1200.00,113.15 L1201.00,114.25 L1202.00,115.37 L1203.00,116.50 L1204.00,117.65 L1205.00,118.82 L1206.00,120.00 L1207.00,121.20 L1208.00,122.42 L1209.00,123.65 L1210.00,124.89 L1211.00,126.15 L1212.00,127.43 L1213.00,128.72 L1214.00,130.03 L1215.00,131.35 L1216.00,132.69 L1217.00,134.04 L1218.00,135.41 L1219.00,136.79 L1220.00,138.18 L1221.00,139.59 L1222.00,141.01 L1223.00,142.45 L1224.00,143.90 L1225.00,145.36 L1226.00,146.84 L1227.00,148.33 L1228.00,149.83 L1229.00,151.34 L1230.00,152.87 L1231.00,154.41 L1232.00,155.96 L1233.00,157.53 L1234.00,159.10 L1235.00,160.69 L1236.00,162.29 L1237.00,163.90 L1238.00,165.52 L1239.00,167.15 L1240.00,168.80 L1241.00,170.45 L1242.00,172.12 L1243.00,173.79 L1244.00,175.48 L1245.00,177.17 L1246.00,178.88 L1247.00,180.59 L1248.00,182.31 L1249.00,184.05 L1250.00,185.79 L1251.00,187.54 L1252.00,189.30 L1253.00,191.06 L1254.00,192.84 L1255.00,194.62 L1256.00,196.41 L1257.00,198.21 L1258.00,200.02 L1259.00,201.83 L1260.00,203.65 L1261.00,205.48 L1262.00,207.31 L1263.00,209.15 L1264.00,211.00 L1265.00,212.85 L1266.00,214.71 L1267.00,216.57 L1268.00,218.44 L1269.00,220.32 L1270.00,222.19 L1271.00,224.08 L1272.00,225.97 L1273.00,227.86 L1274.00,229.76 L1275.00,231.66 L1276.00,233.56 L1277.00,235.47 L1278.00,237.38 L1279.00,239.29 L1280.00,241.21 L1281.00,243.13 L1282.00,245.05 L1283.00,246.97 L1284.00,248.83 L1285.00,250.59 L1286.00,252.24 L1287.00,253.80 L1288.00,255.26 L1289.00,256.61 L1290.00,257.87 L1291.00,259.02 L1292.00,260.07 L1293.00,261.02 L1294.00,261.87 L1295.00,262.62 L1296.00,263.26 L1297.00,263.81 L1298.00,264.25 L1299.00,264.59 L1300.00,264.83 L1301.00,264.96 L1302.00,265.00 L1303.00,265.00 L1304.00,265.00 L1305.00,265.00 L1306.00,265.00 L1307.00,265.00 L1308.00,265.00 L1309.00,265.00 L1310.00,265.00 L1311.00,265.00 L1312.00,265.00 L1313.00,265.00 L1314.00,265.00 L1315.00,265.00 L1316.00,265.00 L1317.00,265.00 L1318.00,265.00 L1319.00,265.00 L1320.00,265.00 L1321.00,265.00 L1322.00,265.00 L1323.00,265.00 L1324.00,265.00 L1325.00,265.00 L1326.00,265.00 L1327.00,265.00 L1328.00,265.00 L1329.00,265.00 L1330.00,265.00 L1331.00,265.00 L1332.00,265.00 L1333.00,265.00 L1334.00,265.00 L1335.00,265.00 L1336.00,265.00 L1337.00,265.00 L1338.00,265.00 L1339.00,265.00 L1340.00,265.00 L1341.00,265.00 L1342.00,265.00 L1343.00,265.00 L1344.00,265.00 L1345.00,265.00 L1346.00,265.00 L1347.00,265.00 L1348.00,265.00 L1349.00,265.00 L1350.00,265.00 L1351.00,265.00 L1352.00,265.00 L1353.00,265.00 L1354.00,265.00 L1355.00,265.00 L1356.00,265.00 L1357.00,265.00 L1358.00,265.00 L1359.00,265.00 L1360.00,265.00 L1361.00,265.00 L1362.00,265.00 L1363.00,265.00 L1364.00,265.00 L1365.00,265.00 L1366.00,265.00 L1367.00,265.00 L1368.00,265.00 L1369.00,265.00 L1370.00,265.00 L1371.00,265.00 L1372.00,265.00 L1373.00,265.00 L1374.00,265.00 L1375.00,265.00 L1376.00,265.00 L1377.00,265.00 L1378.00,265.00 L1379.00,265.00 L1380.00,265.00 L1381.00,265.00 L1382.00,265.00 L1383.00,265.00 L1384.00,265.00 L1385.00,265.00 L1386.00,265.00 L1387.00,265.00 L1388.00,265.00 L1389.00,265.00 L1390.00,265.00 L1391.00,265.00 L1392.00,265.00 L1393.00,265.00 L1394.00,265.00 L1395.00,265.00 L1396.00,265.00 L1397.00,265.00 L1398.00,265.00 L1399.00,265.00 L1400.00,265.00 L1401.00,265.00 L1402.00,265.00 L1403.00,265.00 L1404.00,265.00 L1405.00,265.00 L1406.00,265.00 L1407.00,265.00 L1408.00,265.00 L1409.00,265.00 L1410.00,265.00 L1411.00,265.00 L1412.00,265.00 L1413.00,265.00 L1414.00,265.00 L1415.00,265.00 L1416.00,265.00 L1417.00,265.00 L1418.00,265.00 L1419.00,265.00 L1420.00,265.00 L1421.00,265.00 L1422.00,265.00 L1423.00,265.00 L1424.00,265.00 L1425.00,265.00 L1426.00,265.00 L1427.00,265.00 L1428.00,265.00 L1429.00,265.00 L1430.00,265.00 L1431.00,265.00 L1432.00,265.00 L1433.00,265.00 L1434.00,265.00 L1435.00,265.00 L1436.00,265.00 L1437.00,265.00 L1438.00,265.00 L1439.00,265.00 L1440.00,265.00 L1441.00,265.00 L1442.00,265.00 L1443.00,265.00 L1444.00,265.00 L1445.00,265.00 L1446.00,265.00 L1447.00,265.00 L1448.00,265.00 L1449.00,265.00 L1450.00,265.00 L1451.00,265.00 L1452.00,265.00 L1453.00,265.00 L1454.00,265.00 L1455.00,265.00 L1456.00,265.00 L1457.00,265.00 L1458.00,265.00 L1459.00,265.00 L1460.00,265.00 L1461.00,265.00 L1462.00,265.00 L1463.00,265.00 L1464.00,265.00 L1465.00,265.00 L1466.00,265.00 L1467.00,265.00 L1468.00,265.00 L1469.00,265.00 L1470.00,265.00 L1471.00,265.00 L1472.00,265.00 L1473.00,265.00 L1474.00,265.00 L1475.00,265.00 L1476.00,265.00 L1477.00,265.00 L1478.00,265.00 L1479.00,265.00 L1480.00,265.00 L1481.00,265.00 L1482.00,265.00 L1483.00,265.00 L1484.00,265.00 L1485.00,265.00 L1486.00,265.00 L1487.00,265.00 L1488.00,265.00 L1489.00,265.00 L1490.00,265.00 L1491.00,265.00 L1492.00,265.00 L1493.00,265.00 L1494.00,265.00 L1495.00,265.00 L1496.00,265.00 L1497.00,265.00 L1498.00,265.00 L1499.00,265.00 L1500.00,265.00 L1501.00,265.00 L1502.00,265.00 L1503.00,265.00 L1504.00,265.00 L1505.00,265.00 L1506.00,265.00 L1507.00,265.00 L1508.00,265.00 L1509.00,265.00 L1510.00,265.00 L1511.00,265.00 L1512.00,265.00 L1513.00,265.00 L1514.00,265.00 L1515.00,265.00 L1516.00,265.00 L1517.00,265.00 L1518.00,265.00 L1519.00,265.00 L1520.00,265.00 L1521.00,265.00 L1522.00,265.00 L1523.00,265.00 L1524.00,265.00 L1525.00,265.00 L1526.00,265.00 L1527.00,265.00 L1528.00,265.00 L1529.00,265.00 L1530.00,265.00 L1531.00,265.00 L1532.00,265.00 L1533.00,265.00 L1534.00,265.00 L1535.00,265.00 L1536.00,265.00 L1537.00,265.00 L1538.00,265.00 L1539.00,265.00 L1540.00,265.00 L1541.00,265.00 L1542.00,265.00 L1543.00,265.00 L1544.00,265.00 L1545.00,265.00 L1546.00,265.00 L1547.00,265.00 L1548.00,265.00 L1549.00,265.00 L1550.00,265.00 L1551.00,265.00 L1552.00,265.00 L1553.00,265.00 L1554.00,265.00 L1555.00,265.00 L1556.00,265.00 L1557.00,265.00 L1558.00,265.00 L1559.00,265.00 L1560.00,265.00 L1561.00,265.00 L1562.00,265.00 L1563.00,265.00 L1564.00,265.00 L1565.00,265.00 L1566.00,265.00 L1567.00,265.00 L1568.00,265.00 L1569.00,265.00 L1570.00,265.00 L1571.00,265.00 L1572.00,265.00 L1573.00,265.00 L1574.00,265.00 L1575.00,265.00 L1576.00,265.00 L1577.00,265.00 L1578.00,265.00 L1579.00,265.00 L1580.00,265.00 L1581.00,265.00 L1582.00,264.99 L1583.00,264.91 L1584.00,264.72 L1585.00,264.43 L1586.00,264.04 L1587.00,263.55 L1588.00,262.95 L1589.00,262.26 L1590.00,261.46 L1591.00,260.56 L1592.00,259.56 L1593.00,258.46 L1594.00,257.25 L1595.00,255.95 L1596.00,254.54 L1597.00,253.03 L1598.00,251.43 L1599.00,249.72 L1600.00,247.91 L1601.00,246.01 L1602.00,244.09 L1603.00,242.17 L1604.00,240.25 L1605.00,238.34 L1606.00,236.42 L1607.00,234.51 L1608.00,232.61 L1609.00,230.71 L1610.00,228.81 L1611.00,226.91 L1612.00,225.02 L1613.00,223.14 L1614.00,221.25 L1615.00,219.38 L1616.00,217.51 L1617.00,215.64 L1618.00,213.78 L1619.00,211.93 L1620.00,210.08 L1621.00,208.23 L1622.00,206.40 L1623.00,204.57 L1624.00,202.74 L1625.00,200.93 L1626.00,199.12 L1627.00,197.31 L1628.00,195.52 L1629.00,193.73 L1630.00,191.95 L1631.00,190.18 L1632.00,188.42 L1633.00,186.66 L1634.00,184.92 L1635.00,183.18 L1636.00,181.45 L1637.00,179.73 L1638.00,178.02 L1639.00,176.32 L1640.00,174.63 L1641.00,172.95 L1642.00,171.28 L1643.00,169.62 L1644.00,167.98 L1645.00,166.34 L1646.00,164.71 L1647.00,163.09 L1648.00,161.49 L1649.00,159.90 L1650.00,158.31 L1651.00,156.74 L1652.00,155.19 L1653.00,153.64 L1654.00,152.11 L1655.00,150.58 L1656.00,149.08 L1657.00,147.58 L1658.00,146.10 L1659.00,144.63 L1660.00,143.17 L1661.00,141.73 L1662.00,140.30 L1663.00,138.88 L1664.00,137.48 L1665.00,136.09 L1666.00,134.72 L1667.00,133.36 L1668.00,132.02 L1669.00,130.69 L1670.00,129.37 L1671.00,128.07 L1672.00,126.79 L1673.00,125.52 L1674.00,124.27 L1675.00,123.03 L1676.00,121.81 L1677.00,120.60 L1678.00,119.41 L1679.00,118.23 L1680.00,117.07 L1681.00,115.93 L1682.00,114.81 L1683.00,113.70 L1684.00,112.61 L1685.00,111.53 L1686.00,110.47 L1687.00,109.43 L1688.00,108.41 L1689.00,107.40 L1690.00,106.41 L1691.00,105.44 L1692.00,104.48 L1693.00,103.55 L1694.00,102.63 L1695.00,101.73 L1696.00,100.84 L1697.00,99.98 L1698.00,99.13 L1699.00,98.30 L1700.00,97.49 L1701.00,96.70 L1702.00,95.93 L1703.00,95.18 L1704.00,94.44 L1705.00,93.72 L1706.00,93.03 L1707.00,92.35 L1708.00,91.69 L1709.00,91.05 L1710.00,90.43 L1711.00,89.83 L1712.00,89.24 L1713.00,88.68 L1714.00,88.14 L1715.00,87.61 L1716.00,87.11 L1717.00,86.63 L1718.00,86.16 L1719.00,85.72 L1720.00,85.29 L1721.00,84.89 L1722.00,84.50 L1723.00,84.13 L1724.00,83.79 L1725.00,83.46 L1726.00,83.16 L1727.00,82.87 L1728.00,82.61 L1729.00,82.36 L1730.00,82.14 L1731.00,81.93 L1732.00,81.75 L1733.00,81.58 L1734.00,81.44 L1735.00,81.32 L1736.00,81.21 L1737.00,81.13 L1738.00,81.07 L1739.00,81.03 L1740.00,81.00 L1741.00,81.00 L1742.00,81.02 L1743.00,81.06 L1744.00,81.12 L1745.00,81.20 L1746.00,81.30 L1747.00,81.42 L1748.00,81.56 L1749.00,81.72 L1750.00,81.90 L1751.00,82.10 L1752.00,82.32 L1753.00,82.57 L1754.00,82.83 L1755.00,83.11 L1756.00,83.41 L1757.00,83.73 L1758.00,84.08 L1759.00,84.44 L1760.00,84.82 L1761.00,85.22 L1762.00,85.64 L1763.00,86.09 L1764.00,86.55 L1765.00,87.03 L1766.00,87.53 L1767.00,88.05 L1768.00,88.59 L1769.00,89.15 L1770.00,89.73 L1771.00,90.33 L1772.00,90.94 L1773.00,91.58 L1774.00,92.24 L1775.00,92.91 L1776.00,93.61 L1777.00,94.32 L1778.00,95.05 L1779.00,95.80 L1780.00,96.57 L1781.00,97.36 L1782.00,98.17 L1783.00,98.99 L1784.00,99.84 L1785.00,100.70 L1786.00,101.58 L1787.00,102.48 L1788.00,103.39 L1789.00,104.33 L1790.00,105.28 L1791.00,106.25 L1792.00,107.23 L1793.00,108.24 L1794.00,109.26 L1795.00,110.30 L1796.00,111.35 L1797.00,112.43 L1798.00,113.51 L1799.00,114.62 L1800.00,115.74 L1801.00,116.88 L1802.00,118.04 L1803.00,119.21 L1804.00,120.40 L1805.00,121.60 L1806.00,122.82 L1807.00,124.06 L1808.00,125.31 L1809.00,126.58 L1810.00,127.86 L1811.00,129.16 L1812.00,130.47 L1813.00,131.80 L1814.00,133.14 L1815.00,134.49 L1816.00,135.86 L1817.00,137.25 L1818.00,138.65 L1819.00,140.06 L1820.00,141.49 L1821.00,142.93 L1822.00,144.38 L1823.00,145.85 L1824.00,147.33 L1825.00,148.83 L1826.00,150.33 L1827.00,151.85 L1828.00,153.38 L1829.00,154.93 L1830.00,156.48 L1831.00,158.05 L1832.00,159.63 L1833.00,161.22 L1834.00,162.83 L1835.00,164.44 L1836.00,166.07 L1837.00,167.70 L1838.00,169.35 L1839.00,171.01 L1840.00,172.67 L1841.00,174.35 L1842.00,176.04 L1843.00,177.74 L1844.00,179.45 L1845.00,181.16 L1846.00,182.89 L1847.00,184.63 L1848.00,186.37 L1849.00,188.12 L1850.00,189.89 L1851.00,191.66 L1852.00,193.43 L1853.00,195.22 L1854.00,197.01 L1855.00,198.81 L1856.00,200.62 L1857.00,202.44 L1858.00,204.26 L1859.00,206.09 L1860.00,207.93 L1861.00,209.77 L1862.00,211.62 L1863.00,213.47 L1864.00,215.33 L1865.00,217.20 L1866.00,219.07 L1867.00,220.94 L1868.00,222.82 L1869.00,224.71 L1870.00,226.60 L1871.00,228.49 L1872.00,230.39 L1873.00,232.29 L1874.00,234.20 L1875.00,236.10 L1876.00,238.02 L1877.00,239.93 L1878.00,241.85 L1879.00,243.77 L1880.00,245.69 L1881.00,247.60 L1882.00,249.43 L1883.00,251.15 L1884.00,252.77 L1885.00,254.30 L1886.00,255.72 L1887.00,257.04 L1888.00,258.26 L1889.00,259.38 L1890.00,260.40" fill="none" stroke="#ff4500" stroke-width="1.5"/>
<path d="M97.00,269.60 L98.00,270.62 L99.00,271.74 L100.00,272.96 L101.00,274.28 L102.00,275.70 L103.00,277.23 L104.00,278.85 L105.00,280.57 L106.00,282.40 L107.00,284.31 L108.00,286.23 L109.00,288.15 L110.00,290.07 L111.00,291.98 L112.00,293.90 L113.00,295.80 L114.00,297.71 L115.00,299.61 L116.00,301.51 L117.00,303.40 L118.00,305.29 L119.00,307.18 L120.00,309.06 L121.00,310.93 L122.00,312.80 L123.00,314.67 L124.00,316.53 L125.00,318.38 L126.00,320.23 L127.00,322.07 L128.00,323.91 L129.00,325.74 L130.00,327.56 L131.00,329.38 L132.00,331.19 L133.00,332.99 L134.00,334.78 L135.00,336.57 L136.00,338.34 L137.00,340.11 L138.00,341.88 L139.00,343.63 L140.00,345.37 L141.00,347.11 L142.00,348.84 L143.00,350.55 L144.00,352.26 L145.00,353.96 L146.00,355.65 L147.00,357.33 L148.00,358.99 L149.00,360.65 L150.00,362.30 L151.00,363.93 L152.00,365.56 L153.00,367.17 L154.00,368.78 L155.00,370.37 L156.00,371.95 L157.00,373.52 L158.00,375.07 L159.00,376.62 L160.00,378.15 L161.00,379.67 L162.00,381.17 L163.00,382.67 L164.00,384.15 L165.00,385.62 L166.00,387.07 L167.00,388.51 L168.00,389.94 L169.00,391.35 L170.00,392.75 L171.00,394.14 L172.00,395.51 L173.00,396.86 L174.00,398.20 L175.00,399.53 L176.00,400.84 L177.00,402.14 L178.00,403.42 L179.00,404.69 L180.00,405.94 L181.00,407.18 L182.00,408.40 L183.00,409.60 L184.00,410.79 L185.00,411.96 L186.00,413.12 L187.00,414.26 L188.00,415.38 L189.00,416.49 L190.00,417.57 L191.00,418.65 L192.00,419.70 L193.00,420.74 L194.00,421.76 L195.00,422.77 L196.00,423.75 L197.00,424.72 L198.00,425.67 L199.00,426.61 L200.00,427.52 L201.00,428.42 L202.00,429.30 L203.00,430.16 L204.00,431.01 L205.00,431.83 L206.00,432.64 L207.00,433.43 L208.00,434.20 L209.00,434.95 L210.00,435.68 L211.00,436.39 L212.00,437.09 L213.00,437.76 L214.00,438.42 L215.00,439.06 L216.00,439.67 L217.00,440.27 L218.00,440.85 L219.00,441.41 L220.00,441.95 L221.00,442.47 L222.00,442.97 L223.00,443.45 L224.00,443.91 L225.00,444.36 L226.00,444.78 L227.00,445.18 L228.00,445.56 L229.00,445.92 L230.00,446.27 L231.00,446.59 L232.00,446.89 L233.00,447.17 L234.00,447.43 L235.00,447.68 L236.00,447.90 L237.00,448.10 L238.00,448.28 L239.00,448.44 L240.00,448.58 L241.00,448.70 L242.00,448.80 L243.00,448.88 L244.00,448.94 L245.00,448.98 L246.00,449.00 L247.00,449.00 L248.00,448.97 L249.00,448.93 L250.00,448.87 L251.00,448.79 L252.00,448.68 L253.00,448.56 L254.00,448.42 L255.00,448.25 L256.00,448.07 L257.00,447.86 L258.00,447.64 L259.00,447.39 L260.00,447.13 L261.00,446.84 L262.00,446.54 L263.00,446.21 L264.00,445.87 L265.00,445.50 L266.00,445.11 L267.00,444.71 L268.00,444.28 L269.00,443.84 L270.00,443.37 L271.00,442.89 L272.00,442.39 L273.00,441.86 L274.00,441.32 L275.00,440.76 L276.00,440.17 L277.00,439.57 L278.00,438.95 L279.00,438.31 L280.00,437.65 L281.00,436.97 L282.00,436.28 L283.00,435.56 L284.00,434.82 L285.00,434.07 L286.00,433.30 L287.00,432.51 L288.00,431.70 L289.00,430.87 L290.00,430.02 L291.00,429.16 L292.00,428.27 L293.00,427.37 L294.00,426.45 L295.00,425.52 L296.00,424.56 L297.00,423.59 L298.00,422.60 L299.00,421.59 L300.00,420.57 L301.00,419.53 L302.00,418.47 L303.00,417.39 L304.00,416.30 L305.00,415.19 L306.00,414.07 L307.00,412.93 L308.00,411.77 L309.00,410.59 L310.00,409.40 L311.00,408.19 L312.00,406.97 L313.00,405.73 L314.00,404.48 L315.00,403.21 L316.00,401.93 L317.00,400.63 L318.00,399.31 L319.00,397.98 L320.00,396.64 L321.00,395.28 L322.00,393.91 L323.00,392.52 L324.00,391.12 L325.00,389.70 L326.00,388.27 L327.00,386.83 L328.00,385.37 L329.00,383.90 L330.00,382.42 L331.00,380.92 L332.00,379.42 L333.00,377.89 L334.00,376.36 L335.00,374.81 L336.00,373.26 L337.00,371.69 L338.00,370.10 L339.00,368.51 L340.00,366.91 L341.00,365.29 L342.00,363.66 L343.00,362.02 L344.00,360.38 L345.00,358.72 L346.00,357.05 L347.00,355.37 L348.00,353.68 L349.00,351.98 L350.00,350.27 L351.00,348.55 L352.00,346.82 L353.00,345.08 L354.00,343.34 L355.00,341.58 L356.00,339.82 L357.00,338.05 L358.00,336.27 L359.00,334.48 L360.00,332.69 L361.00,330.88 L362.00,329.07 L363.00,327.26 L364.00,325.43 L365.00,323.60 L366.00,321.77 L367.00,319.92 L368.00,318.07 L369.00,316.22 L370.00,314.36 L371.00,312.49 L372.00,310.62 L373.00,308.75 L374.00,306.86 L375.00,304.98 L376.00,303.09 L377.00,301.19 L378.00,299.29 L379.00,297.39 L380.00,295.49 L381.00,293.58 L382.00,291.66 L383.00,289.75 L384.00,287.83 L385.00,285.91 L386.00,283.99 L387.00,282.09 L388.00,280.28 L389.00,278.57 L390.00,276.97 L391.00,275.46 L392.00,274.05 L393.00,272.75 L394.00,271.54 L395.00,270.44 L396.00,269.44 L397.00,268.54 L398.00,267.74 L399.00,267.05 L400.00,266.45 L401.00,265.96 L402.00,265.57 L403.00,265.28 L404.00,265.09 L405.00,265.01 L406.00,265.00 L407.00,265.00 L408.00,265.00 L409.00,265.00 L410.00,265.00 L411.00,265.00 L412.00,265.00 L413.00,265.00 L414.00,265.00 L415.00,265.00 L416.00,265.00 L417.00,265.00 L418.00,265.00 L419.00,265.00 L420.00,265.00 L421.00,265.00 L422.00,265.00 L423.00,265.00 L424.00,265.00 L425.00,265.00 L426.00,265.00 L427.00,265.00 L428.00,265.00 L429.00,265.00 L430.00,265.00 L431.00,265.00 L432.00,265.00 L433.00,265.00 L434.00,265.00 L435.00,265.00 L436.00,265.00 L437.00,265.00 L438.00,265.00 L439.00,265.00 L440.00,265.00 L441.00,265.00 L442.00,265.00 L443.00,265.00 L444.00,265.00 L445.00,265.00 L446.00,265.00 L447.00,265.00 L448.00,265.00 L449.00,265.00 L450.00,265.00 L451.00,265.00 L452.00,265.00 L453.00,265.00 L454.00,265.00 L455.00,265.00 L456.00,265.00 L457.00,265.00 L458.00,265.00 L459.00,265.00 L460.00,265.00 L461.00,265.00 L462.00,265.00 L463.00,265.00 L464.00,265.00 L465.00,265.00 L466.00,265.00 L467.00,265.00 L468.00,265.00 L469.00,265.00 L470.00,265.00 L471.00,265.00 L472.00,265.00 L473.00,265.00 L474.00,265.00 L475.00,265.00 L476.00,265.00 L477.00,265.00 L478.00,265.00 L479.00,265.00 L480.00,265.00 L481.00,265.00 L482.00,265.00 L483.00,265.00 L484.00,265.00 L485.00,265.00 L486.00,265.00 L487.00,265.00 L488.00,265.00 L489.00,265.00 L490.00,265.00 L491.00,265.00 L492.00,265.00 L493.00,265.00 L494.00,265.00 L495.00,265.00 L496.00,265.00 L497.00,265.00 L498.00,265.00 L499.00,265.00 L500.00,265.00 L501.00,265.00 L502.00,265.00 L503.00,265.00 L504.00,265.00 L505.00,265.00 L506.00,265.00 L507.00,265.00 L508.00,265.00 L509.00,265.00 L510.00,265.00 L511.00,265.00 L512.00,265.00 L513.00,265.00 L514.00,265.00 L515.00,265.00 L516.00,265.00 L517.00,265.00 L518.00,265.00 L519.00,265.00 L520.00,265.00 L521.00,265.00 L522.00,265.00 L523.00,265.00 L524.00,265.00 L525.00,265.00 L526.00,265.00 L527.00,265.00 L528.00,265.00 L529.00,265.00 L530.00,265.00 L531.00,265.00 L532.00,265.00 L533.00,265.00 L534.00,265.00 L535.00,265.00 L536.00,265.00 L537.00,265.00 L538.00,265.00 L539.00,265.00 L540.00,265.00 L541.00,265.00 L542.00,265.00 L543.00,265.00 L544.00,265.00 L545.00,265.00 L546.00,265.00 L547.00,265.00 L548.00,265.00 L549.00,265.00 L550.00,265.00 L551.00,265.00 L552.00,265.00 L553.00,265.00 L554.00,265.00 L555.00,265.00 L556.00,265.00 L557.00,265.00 L558.00,265.00 L559.00,265.00 L560.00,265.00 L561.00,265.00 L562.00,265.00 L563.00,265.00 L564.00,265.00 L565.00,265.00 L566.00,265.00 L567.00,265.00 L568.00,265.00 L569.00,265.00 L570.00,265.00 L571.00,265.00 L572.00,265.00 L573.00,265.00 L574.00,265.00 L575.00,265.00 L576.00,265.00 L577.00,265.00 L578.00,265.00 L579.00,265.00 L580.00,265.00 L581.00,265.00 L582.00,265.00 L583.00,265.00 L584.00,265.00 L585.00,265.00 L586.00,265.00 L587.00,265.00 L588.00,265.00 L589.00,265.00 L590.00,265.00 L591.00,265.00 L592.00,265.00 L593.00,265.00 L594.00,265.00 L595.00,265.00 L596.00,265.00 L597.00,265.00 L598.00,265.00 L599.00,265.00 L600.00,265.00 L601.00,265.00 L602.00,265.00 L603.00,265.00 L604.00,265.00 L605.00,265.00 L606.00,265.00 L607.00,265.00 L608.00,265.00 L609.00,265.00 L610.00,265.00 L611.00,265.00 L612.00,265.00 L613.00,265.00 L614.00,265.00 L615.00,265.00 L616.00,265.00 L617.00,265.00 L618.00,265.00 L619.00,265.00 L620.00,265.00 L621.00,265.00 L622.00,265.00 L623.00,265.00 L624.00,265.00 L625.00,265.00 L626.00,265.00 L627.00,265.00 L628.00,265.00 L629.00,265.00 L630.00,265.00 L631.00,265.00 L632.00,265.00 L633.00,265.00 L634.00,265.00 L635.00,265.00 L636.00,265.00 L637.00,265.00 L638.00,265.00 L639.00,265.00 L640.00,265.00 L641.00,265.00 L642.00,265.00 L643.00,265.00 L644.00,265.00 L645.00,265.00 L646.00,265.00 L647.00,265.00 L648.00,265.00 L649.00,265.00 L650.00,265.00 L651.00,265.00 L652.00,265.00 L653.00,265.00 L654.00,265.00 L655.00,265.00 L656.00,265.00 L657.00,265.00 L658.00,265.00 L659.00,265.00 L660.00,265.00 L661.00,265.00 L662.00,265.00 L663.00,265.00 L664.00,265.00 L665.00,265.00 L666.00,265.00 L667.00,265.00 L668.00,265.00 L669.00,265.00 L670.00,265.00 L671.00,265.00 L672.00,265.00 L673.00,265.00 L674.00,265.00 L675.00,265.00 L676.00,265.00 L677.00,265.00 L678.00,265.00 L679.00,265.00 L680.00,265.00 L681.00,265.00 L682.00,265.00 L683.00,265.00 L684.00,265.00 L685.00,265.00 L686.00,265.04 L687.00,265.17 L688.00,265.41 L689.00,265.75 L690.00,266.19 L691.00,266.74 L692.00,267.38 L693.00,268.13 L694.00,268.98 L695.00,269.93 L696.00,270.98 L697.00,272.13 L698.00,273.39 L699.00,274.74 L700.00,276.20 L701.00,277.76 L702.00,279.41 L703.00,281.17 L704.00,283.03 L705.00,284.95 L706.00,286.87 L707.00,288.79 L708.00,290.71 L709.00,292.62 L710.00,294.53 L711.00,296.44 L712.00,298.34 L713.00,300.24 L714.00,302.14 L715.00,304.03 L716.00,305.92 L717.00,307.81 L718.00,309.68 L719.00,311.56 L720.00,313.43 L721.00,315.29 L722.00,317.15 L723.00,319.00 L724.00,320.85 L725.00,322.69 L726.00,324.52 L727.00,326.35 L728.00,328.17 L729.00,329.98 L730.00,331.79 L731.00,333.59 L732.00,335.38 L733.00,337.16 L734.00,338.94 L735.00,340.70 L736.00,342.46 L737.00,344.21 L738.00,345.95 L739.00,347.69 L740.00,349.41 L741.00,351.12 L742.00,352.83 L743.00,354.52 L744.00,356.21 L745.00,357.88 L746.00,359.55 L747.00,361.20 L748.00,362.85 L749.00,364.48 L750.00,366.10 L751.00,367.71 L752.00,369.31 L753.00,370.90 L754.00,372.47 L755.00,374.04 L756.00,375.59 L757.00,377.13 L758.00,378.66 L759.00,380.17 L760.00,381.67 L761.00,383.16 L762.00,384.64 L763.00,386.10 L764.00,387.55 L765.00,388.99 L766.00,390.41 L767.00,391.82 L768.00,393.21 L769.00,394.59 L770.00,395.96 L771.00,397.31 L772.00,398.65 L773.00,399.97 L774.00,401.28 L775.00,402.57 L776.00,403.85 L777.00,405.11 L778.00,406.35 L779.00,407.58 L780.00,408.80 L781.00,410.00 L782.00,411.18 L783.00,412.35 L784.00,413.50 L785.00,414.63 L786.00,415.75 L787.00,416.85 L788.00,417.93 L789.00,419.00 L790.00,420.05 L791.00,421.08 L792.00,422.10 L793.00,423.10 L794.00,424.08 L795.00,425.04 L796.00,425.99 L797.00,426.92 L798.00,427.83 L799.00,428.72 L800.00,429.59 L801.00,430.45 L802.00,431.28 L803.00,432.10 L804.00,432.90 L805.00,433.69 L806.00,434.45 L807.00,435.19 L808.00,435.92 L809.00,436.63 L810.00,437.31 L811.00,437.98 L812.00,438.63 L813.00,439.26 L814.00,439.87 L815.00,440.47 L816.00,441.04 L817.00,441.59 L818.00,442.13 L819.00,442.64 L820.00,443.13 L821.00,443.61 L822.00,444.06 L823.00,444.50 L824.00,444.91 L825.00,445.31 L826.00,445.69 L827.00,446.04 L828.00,446.38 L829.00,446.69 L830.00,446.99 L831.00,447.26 L832.00,447.52 L833.00,447.75 L834.00,447.97 L835.00,448.16 L836.00,448.34 L837.00,448.49 L838.00,448.62 L839.00,448.74 L840.00,448.83 L841.00,448.90 L842.00,448.96 L843.00,448.99 L844.00,449.00 L845.00,448.99 L846.00,448.96 L847.00,448.91 L848.00,448.84 L849.00,448.75 L850.00,448.64 L851.00,448.51 L852.00,448.36 L853.00,448.19 L854.00,448.00 L855.00,447.79 L856.00,447.56 L857.00,447.31 L858.00,447.03 L859.00,446.74 L860.00,446.43 L861.00,446.10 L862.00,445.75 L863.00,445.37 L864.00,444.98 L865.00,444.57 L866.00,444.14 L867.00,443.69 L868.00,443.21 L869.00,442.72 L870.00,442.21 L871.00,441.68 L872.00,441.13 L873.00,440.56 L874.00,439.97 L875.00,439.37 L876.00,438.74 L877.00,438.09 L878.00,437.43 L879.00,436.74 L880.00,436.04 L881.00,435.32 L882.00,434.57 L883.00,433.81 L884.00,433.04 L885.00,432.24 L886.00,431.42 L887.00,430.59 L888.00,429.74 L889.00,428.86 L890.00,427.98 L891.00,427.07 L892.00,426.14 L893.00,425.20 L894.00,424.24 L895.00,423.26 L896.00,422.27 L897.00,421.25 L898.00,420.22 L899.00,419.18 L900.00,418.11 L901.00,417.03 L902.00,415.93 L903.00,414.82 L904.00,413.69 L905.00,412.54 L906.00,411.38 L907.00,410.20 L908.00,409.00 L909.00,407.79 L910.00,406.56 L911.00,405.32 L912.00,404.06 L913.00,402.78 L914.00,401.49 L915.00,400.19 L916.00,398.87 L917.00,397.54 L918.00,396.19 L919.00,394.82 L920.00,393.44 L921.00,392.05 L922.00,390.65 L923.00,389.23 L924.00,387.79 L925.00,386.34 L926.00,384.88 L927.00,383.41 L928.00,381.92 L929.00,380.42 L930.00,378.91 L931.00,377.38 L932.00,375.85 L933.00,374.30 L934.00,372.73 L935.00,371.16 L936.00,369.57 L937.00,367.98 L938.00,366.37 L939.00,364.75 L940.00,363.12 L941.00,361.48 L942.00,359.82 L943.00,358.16 L944.00,356.49 L945.00,354.80 L946.00,353.11 L947.00,351.41 L948.00,349.70 L949.00,347.97 L950.00,346.24 L951.00,344.50 L952.00,342.75 L953.00,341.00 L954.00,339.23 L955.00,337.46 L956.00,335.67 L957.00,333.88 L958.00,332.09 L959.00,330.28 L960.00,328.47 L961.00,326.65 L962.00,324.82 L963.00,322.99 L964.00,321.15 L965.00,319.31 L966.00,317.46 L967.00,315.60 L968.00,313.74 L969.00,311.87 L970.00,310.00 L971.00,308.12 L972.00,306.24 L973.00,304.35 L974.00,302.46 L975.00,300.56 L976.00,298.66 L977.00,296.76 L978.00,294.85 L979.00,292.94 L980.00,291.03 L981.00,289.11 L982.00,287.19 L983.00,285.27 L984.00,283.35 L985.00,281.47 L986.00,279.70 L987.00,278.03 L988.00,276.45 L989.00,274.98 L990.00,273.61 L991.00,272.34 L992.00,271.17 L993.00,270.10 L994.00,269.13 L995.00,268.26 L996.00,267.50 L997.00,266.84 L998.00,266.28 L999.00,265.82 L1000.00,265.46 L1001.00,265.21 L1002.00,265.05 L1003.00,265.00 L1004.00,265.00 L1005.00,265.00 L1006.00,265.00 L1007.00,265.00 L1008.00,265.00 L1009.00,265.00 L1010.00,265.00 L1011.00,265.00 L1012.00,265.00 L1013.00,265.00 L1014.00,265.00 L1015.00,265.00 L1016.00,265.00 L1017.00,265.00 L1018.00,265.00 L1019.00,265.00 L1020.00,265.00 L1021.00,265.00 L1022.00,265.00 L1023.00,265.00 L1024.00,265.00 L1025.00,265.00 L1026.00,265.00 L1027.00,265.00 L1028.00,265.00 L1029.00,265.00 L1030.00,265.00 L1031.00,265.00 L1032.00,265.00 L1033.00,265.00 L1034.00,265.00 L1035.00,265.00 L1036.00,265.00 L1037.00,265.00 L1038.00,265.00 L1039.00,265.00 L1040.00,265.00 L1041.00,265.00 L1042.00,265.00 L1043.00,265.00 L1044.00,265.00 L1045.00,265.00 L1046.00,265.00 L1047.00,265.00 L1048.00,265.00 L1049.00,265.00 L1050.00,265.00 L1051.00,265.00 L1052.00,265.00 L1053.00,265.00 L1054.00,265.00 L1055.00,265.00 L1056.00,265.00 L1057.00,265.00 L1058.00,265.00 L1059.00,265.00 L1060.00,265.00 L1061.00,265.00 L1062.00,265.00 L1063.00,265.00 L1064.00,265.00 L1065.00,265.00 L1066.00,265.00 L1067.00,265.00 L1068.00,265.00 L1069.00,265.00 L1070.00,265.00 L1071.00,265.00 L1072.00,265.00 L1073.00,265.00 L1074.00,265.00 L1075.00,265.00 L1076.00,265.00 L1077.00,265.00 L1078.00,265.00 L1079.00,265.00 L1080.00,265.00 L1081.00,265.00 L1082.00,265.00 L1083.00,265.00 L1084.00,265.00 L1085.00,265.00 L1086.00,265.00 L1087.00,265.00 L1088.00,265.00 L1089.00,265.00 L1090.00,265.00 L1091.00,265.00 L1092.00,265.00 L1093.00,265.00 L1094.00,265.00 L1095.00,265.00 L1096.00,265.00 L1097.00,265.00 L1098.00,265.00 L1099.00,265.00 L1100.00,265.00 L1101.00,265.00 L1102.00,265.00 L1103.00,265.00 L1104.00,265.00 L1105.00,265.00 L1106.00,265.00 L1107.00,265.00 L1108.00,265.00 L1109.00,265.00 L1110.00,265.00 L1111.00,265.00 L1112.00,265.00 L1113.00,265.00 L1114.00,265.00 L1115.00,265.00 L1116.00,265.00 L1117.00,265.00 L1118.00,265.00 L1119.00,265.00 L1120.00,265.00 L1121.00,265.00 L1122.00,265.00 L1123.00,265.00 L1124.00,265.00 L1125.00,265.00 L1126.00,265.00 L1127.00,265.00 L1128.00,265.00 L1129.00,265.00 L1130.00,265.00 L1131.00,265.00 L1132.00,265.00 L1133.00,265.00 L1134.00,265.00 L1135.00,265.00 L1136.00,265.00 L1137.00,265.00 L1138.00,265.00 L1139.00,265.00 L1140.00,265.00 L1141.00,265.00 L1142.00,265.00 L1143.00,265.00 L1144.00,265.00 L1145.00,265.00 L1146.00,265.00 L1147.00,265.00 L1148.00,265.00 L1149.00,265.00 L1150.00,265.00 L1151.00,265.00 L1152.00,265.00 L1153.00,265.00 L1154.00,265.00 L1155.00,265.00 L1156.00,265.00 L1157.00,265.00 L1158.00,265.00 L1159.00,265.00 L1160.00,265.00 L1161.00,265.00 L1162.00,265.00 L1163.00,265.00 L1164.00,265.00 L1165.00,265.00 L1166.00,265.00 L1167.00,265.00 L1168.00,265.00 L1169.00,265.00 L1170.00,265.00 L1171.00,265.00 L1172.00,265.00 L1173.00,265.00 L1174.00,265.00 L1175.00,265.00 L1176.00,265.00 L1177.00,265.00 L1178.00,265.00 L1179.00,265.00 L1180.00,265.00 L1181.00,265.00 L1182.00,265.00 L1183.00,265.00 L1184.00,265.00 L1185.00,265.00 L1186.00,265.00 L1187.00,265.00 L1188.00,265.00 L1189.00,265.00 L1190.00,265.00 L1191.00,265.00 L1192.00,265.00 L1193.00,265.00 L1194.00,265.00 L1195.00,265.00 L1196.00,265.00 L1197.00,265.00 L1198.00,265.00 L1199.00,265.00 L1200.00,265.00 L1201.00,265.00 L1202.00,265.00 L1203.00,265.00 L1204.00,265.00 L1205.00,265.00 L1206.00,265.00 L1207.00,265.00 L1208.00,265.00 L1209.00,265.00 L1210.00,265.00 L1211.00,265.00 L1212.00,265.00 L1213.00,265.00 L1214.00,265.00 L1215.00,265.00 L1216.00,265.00 L1217.00,265.00 L1218.00,265.00 L1219.00,265.00 L1220.00,265.00 L1221.00,265.00 L1222.00,265.00 L1223.00,265.00 L1224.00,265.00 L1225.00,265.00 L1226.00,265.00 L1227.00,265.00 L1228.00,265.00 L1229.00,265.00 L1230.00,265.00 L1231.00,265.00 L1232.00,265.00 L1233.00,265.00 L1234.00,265.00 L1235.00,265.00 L1236.00,265.00 L1237.00,265.00 L1238.00,265.00 L1239.00,265.00 L1240.00,265.00 L1241.00,265.00 L1242.00,265.00 L1243.00,265.00 L1244.00,265.00 L1245.00,265.00 L1246.00,265.00 L1247.00,265.00 L1248.00,265.00 L1249.00,265.00 L1250.00,265.00 L1251.00,265.00 L1252.00,265.00 L1253.00,265.00 L1254.00,265.00 L1255.00,265.00 L1256.00,265.00 L1257.00,265.00 L1258.00,265.00 L1259.00,265.00 L1260.00,265.00 L1261.00,265.00 L1262.00,265.00 L1263.00,265.00 L1264.00,265.00 L1265.00,265.00 L1266.00,265.00 L1267.00,265.00 L1268.00,265.00 L1269.00,265.00 L1270.00,265.00 L1271.00,265.00 L1272.00,265.00 L1273.00,265.00 L1274.00,265.00 L1275.00,265.00 L1276.00,265.00 L1277.00,265.00 L1278.00,265.00 L1279.00,265.00 L1280.00,265.00 L1281.00,265.00 L1282.00,265.00 L1283.00,265.00 L1284.00,265.07 L1285.00,265.24 L1286.00,265.52 L1287.00,265.89 L1288.00,266.36 L1289.00,266.94 L1290.00,267.62 L1291.00,268.40 L1292.00,269.28 L1293.00,270.27 L1294.00,271.35 L1295.00,272.54 L1296.00,273.83 L1297.00,275.22 L1298.00,276.71 L1299.00,278.30 L1300.00,279.99 L1301.00,281.78 L1302.00,283.67 L1303.00,285.59 L1304.00,287.51 L1305.00,289.43 L1306.00,291.35 L1307.00,293.26 L1308.00,295.17 L1309.00,297.07 L1310.00,298.98 L1311.00,300.88 L1312.00,302.77 L1313.00,304.66 L1314.00,306.55 L1315.00,308.43 L1316.00,310.31 L1317.00,312.18 L1318.00,314.05 L1319.00,315.91 L1320.00,317.77 L1321.00,319.62 L1322.00,321.46 L1323.00,323.30 L1324.00,325.13 L1325.00,326.95 L1326.00,328.77 L1327.00,330.58 L1328.00,332.39 L1329.00,334.18 L1330.00,335.97 L1331.00,337.75 L1332.00,339.53 L1333.00,341.29 L1334.00,343.05 L1335.00,344.79 L1336.00,346.53 L1337.00,348.26 L1338.00,349.98 L1339.00,351.69 L1340.00,353.39 L1341.00,355.09 L1342.00,356.77 L1343.00,358.44 L1344.00,360.10 L1345.00,361.75 L1346.00,363.39 L1347.00,365.02 L1348.00,366.64 L1349.00,368.24 L1350.00,369.84 L1351.00,371.42 L1352.00,373.00 L1353.00,374.56 L1354.00,376.10 L1355.00,377.64 L1356.00,379.16 L1357.00,380.67 L1358.00,382.17 L1359.00,383.66 L1360.00,385.13 L1361.00,386.59 L1362.00,388.03 L1363.00,389.46 L1364.00,390.88 L1365.00,392.29 L1366.00,393.68 L1367.00,395.05 L1368.00,396.41 L1369.00,397.76 L1370.00,399.09 L1371.00,400.41 L1372.00,401.71 L1373.00,403.00 L1374.00,404.27 L1375.00,405.53 L1376.00,406.77 L1377.00,407.99 L1378.00,409.20 L1379.00,410.39 L1380.00,411.57 L1381.00,412.73 L1382.00,413.88 L1383.00,415.01 L1384.00,416.12 L1385.00,417.21 L1386.00,418.29 L1387.00,419.35 L1388.00,420.40 L1389.00,421.42 L1390.00,422.43 L1391.00,423.43 L1392.00,424.40 L1393.00,425.36 L1394.00,426.30 L1395.00,427.22 L1396.00,428.13 L1397.00,429.01 L1398.00,429.88 L1399.00,430.73 L1400.00,431.56 L1401.00,432.37 L1402.00,433.17 L1403.00,433.94 L1404.00,434.70 L1405.00,435.44 L1406.00,436.16 L1407.00,436.86 L1408.00,437.54 L1409.00,438.20 L1410.00,438.84 L1411.00,439.47 L1412.00,440.07 L1413.00,440.66 L1414.00,441.23 L1415.00,441.77 L1416.00,442.30 L1417.00,442.81 L1418.00,443.29 L1419.00,443.76 L1420.00,444.21 L1421.00,444.64 L1422.00,445.05 L1423.00,445.44 L1424.00,445.81 L1425.00,446.15 L1426.00,446.48 L1427.00,446.79 L1428.00,447.08 L1429.00,447.35 L1430.00,447.60 L1431.00,447.83 L1432.00,448.03 L1433.00,448.22 L1434.00,448.39 L1435.00,448.54 L1436.00,448.66 L1437.00,448.77 L1438.00,448.86 L1439.00,448.92 L1440.00,448.97 L1441.00,448.99 L1442.00,449.00 L1443.00,448.98 L1444.00,448.95 L1445.00,448.89 L1446.00,448.82 L1447.00,448.72 L1448.00,448.60 L1449.00,448.47 L1450.00,448.31 L1451.00,448.13 L1452.00,447.93 L1453.00,447.71 L1454.00,447.48 L1455.00,447.22 L1456.00,446.94 L1457.00,446.64 L1458.00,446.32 L1459.00,445.98 L1460.00,445.62 L1461.00,445.25 L1462.00,444.85 L1463.00,444.43 L1464.00,443.99 L1465.00,443.53 L1466.00,443.05 L1467.00,442.56 L1468.00,442.04 L1469.00,441.50 L1470.00,440.94 L1471.00,440.37 L1472.00,439.77 L1473.00,439.16 L1474.00,438.53 L1475.00,437.87 L1476.00,437.20 L1477.00,436.51 L1478.00,435.80 L1479.00,435.07 L1480.00,434.32 L1481.00,433.56 L1482.00,432.77 L1483.00,431.97 L1484.00,431.15 L1485.00,430.31 L1486.00,429.45 L1487.00,428.57 L1488.00,427.68 L1489.00,426.76 L1490.00,425.83 L1491.00,424.88 L1492.00,423.92 L1493.00,422.93 L1494.00,421.93 L1495.00,420.91 L1496.00,419.88 L1497.00,418.82 L1498.00,417.75 L1499.00,416.67 L1500.00,415.56 L1501.00,414.44 L1502.00,413.31 L1503.00,412.15 L1504.00,410.99 L1505.00,409.80 L1506.00,408.60 L1507.00,407.38 L1508.00,406.15 L1509.00,404.90 L1510.00,403.63 L1511.00,402.36 L1512.00,401.06 L1513.00,399.75 L1514.00,398.43 L1515.00,397.09 L1516.00,395.73 L1517.00,394.36 L1518.00,392.98 L1519.00,391.59 L1520.00,390.17 L1521.00,388.75 L1522.00,387.31 L1523.00,385.86 L1524.00,384.39 L1525.00,382.92 L1526.00,381.42 L1527.00,379.92 L1528.00,378.40 L1529.00,376.87 L1530.00,375.33 L1531.00,373.78 L1532.00,372.21 L1533.00,370.63 L1534.00,369.04 L1535.00,367.44 L1536.00,365.83 L1537.00,364.21 L1538.00,362.57 L1539.00,360.93 L1540.00,359.27 L1541.00,357.60 L1542.00,355.93 L1543.00,354.24 L1544.00,352.54 L1545.00,350.84 L1546.00,349.12 L1547.00,347.40 L1548.00,345.66 L1549.00,343.92 L1550.00,342.17 L1551.00,340.41 L1552.00,338.64 L1553.00,336.86 L1554.00,335.08 L1555.00,333.29 L1556.00,331.49 L1557.00,329.68 L1558.00,327.86 L1559.00,326.04 L1560.00,324.21 L1561.00,322.38 L1562.00,320.54 L1563.00,318.69 L1564.00,316.84 L1565.00,314.98 L1566.00,313.12 L1567.00,311.25 L1568.00,309.37 L1569.00,307.49 L1570.00,305.61 L1571.00,303.72 L1572.00,301.82 L1573.00,299.93 L1574.00,298.03 L1575.00,296.12 L1576.00,294.21 L1577.00,292.30 L1578.00,290.39 L1579.00,288.47 L1580.00,286.55 L1581.00,284.63 L1582.00,282.71 L1583.00,280.87 L1584.00,279.13 L1585.00,277.49 L1586.00,275.95 L1587.00,274.51 L1588.00,273.17 L1589.00,271.93 L1590.00,270.80 L1591.00,269.76 L1592.00,268.83 L1593.00,268.00 L1594.00,267.27 L1595.00,266.64 L1596.00,266.11 L1597.00,265.69 L1598.00,265.37 L1599.00,265.14 L1600.00,265.02 L1601.00,265.00 L1602.00,265.00 L1603.00,265.00 L1604.00,265.00 L1605.00,265.00 L1606.00,265.00 L1607.00,265.00 L1608.00,265.00 L1609.00,265.00 L1610.00,265.00 L1611.00,265.00 L1612.00,265.00 L1613.00,265.00 L1614.00,265.00 L1615.00,265.00 L1616.00,265.00 L1617.00,265.00 L1618.00,265.00 L1619.00,265.00 L1620.00,265.00 L1621.00,265.00 L1622.00,265.00 L1623.00,265.00 L1624.00,265.00 L1625.00,265.00 L1626.00,265.00 L1627.00,265.00 L1628.00,265.00 L1629.00,265.00 L1630.00,265.00 L1631.00,265.00 L1632.00,265.00 L1633.00,265.00 L1634.00,265.00 L1635.00,265.00 L1636.00,265.00 L1637.00,265.00 L1638.00,265.00 L1639.00,265.00 L1640.00,265.00 L1641.00,265.00 L1642.00,265.00 L1643.00,265.00 L1644.00,265.00 L1645.00,265.00 L1646.00,265.00 L1647.00,265.00 L1648.00,265.00 L1649.00,265.00 L1650.00,265.00 L1651.00,265.00 L1652.00,265.00 L1653.00,265.00 L1654.00,265.00 L1655.00,265.00 L1656.00,265.00 L1657.00,265.00 L1658.00,265.00 L1659.00,265.00 L1660.00,265.00 L1661.00,265.00 L1662.00,265.00 L1663.00,265.00 L1664.00,265.00 L1665.00,265.00 L1666.00,265.00 L1667.00,265.00 L1668.00,265.00 L1669.00,265.00 L1670.00,265.00 L1671.00,265.00 L1672.00,265.00 L1673.00,265.00 L1674.00,265.00 L1675.00,265.00 L1676.00,265.00 L1677.00,265.00 L1678.00,265.00 L1679.00,265.00 L1680.00,265.00 L1681.00,265.00 L1682.00,265.00 L1683.00,265.00 L1684.00,265.00 L1685.00,265.00 L1686.00,265.00 L1687.00,265.00 L1688.00,265.00 L1689.00,265.00 L1690.00,265.00 L1691.00,265.00 L1692.00,265.00 L1693.00,265.00 L1694.00,265.00 L1695.00,265.00 L1696.00,265.00 L1697.00,265.00 L1698.00,265.00 L1699.00,265.00 L1700.00,265.00 L1701.00,265.00 L1702.00,265.00 L1703.00,265.00 L1704.00,265.00 L1705.00,265.00 L1706.00,265.00 L1707.00,265.00 L1708.00,265.00 L1709.00,265.00 L1710.00,265.00 L1711.00,265.00 L1712.00,265.00 L1713.00,265.00 L1714.00,265.00 L1715.00,265.00 L1716.00,265.00 L1717.00,265.00 L1718.00,265.00 L1719.00,265.00 L1720.00,265.00 L1721.00,265.00 L1722.00,265.00 L1723.00,265.00 L1724.00,265.00 L1725.00,265.00 L1726.00,265.00 L1727.00,265.00 L1728.00,265.00 L1729.00,265.00 L1730.00,265.00 L1731.00,265.00 L1732.00,265.00 L1733.00,265.00 L1734.00,265.00 L1735.00,265.00 L1736.00,265.00 L1737.00,265.00 L1738.00,265.00 L1739.00,265.00 L1740.00,265.00 L1741.00,265.00 L1742.00,265.00 L1743.00,265.00 L1744.00,265.00 L1745.00,265.00 L1746.00,265.00 L1747.00,265.00 L1748.00,265.00 L1749.00,265.00 L1750.00,265.00 L1751.00,265.00 L1752.00,265.00 L1753.00,265.00 L1754.00,265.00 L1755.00,265.00 L1756.00,265.00 L1757.00,265.00 L1758.00,265.00 L1759.00,265.00 L1760.00,265.00 L1761.00,265.00 L1762.00,265.00 L1763.00,265.00 L1764.00,265.00 L1765.00,265.00 L1766.00,265.00 L1767.00,265.00 L1768.00,265.00 L1769.00,265.00 L1770.00,265.00 L1771.00,265.00 L1772.00,265.00 L1773.00,265.00 L1774.00,265.00 L1775.00,265.00 L1776.00,265.00 L1777.00,265.00 L1778.00,265.00 L1779.00,265.00 L1780.00,265.00 L1781.00,265.00 L1782.00,265.00 L1783.00,265.00 L1784.00,265.00 L1785.00,265.00 L1786.00,265.00 L1787.00,265.00 L1788.00,265.00 L1789.00,265.00 L1790.00,265.00 L1791.00,265.00 L1792.00,265.00 L1793.00,265.00 L1794.00,265.00 L1795.00,265.00 L1796.00,265.00 L1797.00,265.00 L1798.00,265.00 L1799.00,265.00 L1800.00,265.00 L1801.00,265.00 L1802.00,265.00 L1803.00,265.00 L1804.00,265.00 L1805.00,265.00 L1806.00,265.00 L1807.00,265.00 L1808.00,265.00 L1809.00,265.00 L1810.00,265.00 L1811.00,265.00 L1812.00,265.00 L1813.00,265.00 L1814.00,265.00 L1815.00,265.00 L1816.00,265.00 L1817.00,265.00 L1818.00,265.00 L1819.00,265.00 L1820.00,265.00 L1821.00,265.00 L1822.00,265.00 L1823.00,265.00 L1824.00,265.00 L1825.00,265.00 L1826.00,265.00 L1827.00,265.00 L1828.00,265.00 L1829.00,265.00 L1830.00,265.00 L1831.00,265.00 L1832.00,265.00 L1833.00,265.00 L1834.00,265.00 L1835.00,265.00 L1836.00,265.00 L1837.00,265.00 L1838.00,265.00 L1839.00,265.00 L1840.00,265.00 L1841.00,265.00 L1842.00,265.00 L1843.00,265.00 L1844.00,265.00 L1845.00,265.00 L1846.00,265.00 L1847.00,265.00 L1848.00,265.00 L1849.00,265.00 L1850.00,265.00 L1851.00,265.00 L1852.00,265.00 L1853.00,265.00 L1854.00,265.00 L1855.00,265.00 L1856.00,265.00 L1857.00,265.00 L1858.00,265.00 L1859.00,265.00 L1860.00,265.00 L1861.00,265.00 L1862.00,265.00 L1863.00,265.00 L1864.00,265.00 L1865.00,265.00 L1866.00,265.00 L1867.00,265.00 L1868.00,265.00 L1869.00,265.00 L1870.00,265.00 L1871.00,265.00 L1872.00,265.00 L1873.00,265.00 L1874.00,265.00 L1875.00,265.00 L1876.00,265.00 L1877.00,265.00 L1878.00,265.00 L1879.00,265.00 L1880.00,265.00 L1881.00,265.01 L1882.00,265.12 L1883.00,265.32 L1884.00,265.63 L1885.00,266.04 L1886.00,266.55 L1887.00,267.16 L1888.00,267.87 L1889.00,268.68 L1890.00,269.60" fill="none" stroke="#0045ff" stroke-width="1.5"/>
<path d="M97.00,192.14 L98.00,192.95 L99.00,193.63 L100.00,194.17 L101.00,194.57 L102.00,194.85 L103.00,194.98 L104.00,195.00 L105.00,195.00 L106.00,195.00 L107.00,195.00 L108.00,195.00 L109.00,195.00 L110.00,195.00 L111.00,195.00 L112.00,195.00 L113.00,195.00 L114.00,195.00 L115.00,195.00 L116.00,195.00 L117.00,195.00 L118.00,195.00 L119.00,195.00 L120.00,195.00 L121.00,195.00 L122.00,195.00 L123.00,195.00 L124.00,195.00 L125.00,195.00 L126.00,195.00 L127.00,195.00 L128.00,195.00 L129.00,195.00 L130.00,195.00 L131.00,195.00 L132.00,195.00 L133.00,195.00 L134.00,195.00 L135.00,195.00 L136.00,195.00 L137.00,195.00 L138.00,195.00 L139.00,195.00 L140.00,195.00 L141.00,195.00 L142.00,195.00 L143.00,195.00 L144.00,195.00 L145.00,195.00 L146.00,195.00 L147.00,195.00 L148.00,195.00 L149.00,195.00 L150.00,195.00 L151.00,195.00 L152.00,195.00 L153.00,195.00 L154.00,195.00 L155.00,195.00 L156.00,195.00 L157.00,195.00 L158.00,195.00 L159.00,195.00 L160.00,195.00 L161.00,195.00 L162.00,195.00 L163.00,195.00 L164.00,195.00 L165.00,195.00 L166.00,195.00 L167.00,195.00 L168.00,195.00 L169.00,195.00 L170.00,195.00 L171.00,195.00 L172.00,195.00 L173.00,195.00 L174.00,195.00 L175.00,195.00 L176.00,195.00 L177.00,195.00 L178.00,195.00 L179.00,195.00 L180.00,195.00 L181.00,195.00 L182.00,195.00 L183.00,195.00 L184.00,195.00 L185.00,195.00 L186.00,195.00 L187.00,195.00 L188.00,195.00 L189.00,195.00 L190.00,195.00 L191.00,195.00 L192.00,195.00 L193.00,195.00 L194.00,195.00 L195.00,195.00 L196.00,195.00 L197.00,195.00 L198.00,195.00 L199.00,195.00 L200.00,195.00 L201.00,195.00 L202.00,195.00 L203.00,195.00 L204.00,195.00 L205.00,195.00 L206.00,195.00 L207.00,195.00 L208.00,195.00 L209.00,195.00 L210.00,195.00 L211.00,195.00 L212.00,195.00 L213.00,195.00 L214.00,195.00 L215.00,195.00 L216.00,195.00 L217.00,195.00 L218.00,195.00 L219.00,195.00 L220.00,195.00 L221.00,195.00 L222.00,195.00 L223.00,195.00 L224.00,195.00 L225.00,195.00 L226.00,195.00 L227.00,195.00 L228.00,195.00 L229.00,195.00 L230.00,195.00 L231.00,195.00 L232.00,195.00 L233.00,195.00 L234.00,195.00 L235.00,195.00 L236.00,195.00 L237.00,195.00 L238.00,195.00 L239.00,195.00 L240.00,195.00 L241.00,195.00 L242.00,195.00 L243.00,195.00 L244.00,195.00 L245.00,195.00 L246.00,195.00 L247.00,195.00 L248.00,195.00 L249.00,195.00 L250.00,195.00 L251.00,195.00 L252.00,195.00 L253.00,195.00 L254.00,195.00 L255.00,195.00 L256.00,195.00 L257.00,195.00 L258.00,195.00 L259.00,195.00 L260.00,195.00 L261.00,195.00 L262.00,195.00 L263.00,195.00 L264.00,195.00 L265.00,195.00 L266.00,195.00 L267.00,195.00 L268.00,195.00 L269.00,195.00 L270.00,195.00 L271.00,195.00 L272.00,195.00 L273.00,195.00 L274.00,195.00 L275.00,195.00 L276.00,195.00 L277.00,195.00 L278.00,195.00 L279.00,195.00 L280.00,195.00 L281.00,195.00 L282.00,195.00 L283.00,195.00 L284.00,195.00 L285.00,195.00 L286.00,195.00 L287.00,195.00 L288.00,195.00 L289.00,195.00 L290.00,195.00 L291.00,195.00 L292.00,195.00 L293.00,195.00 L294.00,195.00 L295.00,195.00 L296.00,194.93 L297.00,194.73 L298.00,194.39 L299.00,193.91 L300.00,193.30 L301.00,192.56 L302.00,191.68 L303.00,190.67 L304.00,189.52 L305.00,188.23 L306.00,186.82 L307.00,185.27 L308.00,183.59 L309.00,181.84 L310.00,180.09 L311.00,178.35 L312.00,176.61 L313.00,174.88 L314.00,173.15 L315.00,171.42 L316.00,169.71 L317.00,167.99 L318.00,166.29 L319.00,164.59 L320.00,162.90 L321.00,161.21 L322.00,159.53 L323.00,157.87 L324.00,156.21 L325.00,154.56 L326.00,152.92 L327.00,151.28 L328.00,149.66 L329.00,148.05 L330.00,146.46 L331.00,144.87 L332.00,143.29 L333.00,141.73 L334.00,140.18 L335.00,138.64 L336.00,137.12 L337.00,135.61 L338.00,134.11 L339.00,132.63 L340.00,131.16 L341.00,129.71 L342.00,128.27 L343.00,126.85 L344.00,125.44 L345.00,124.05 L346.00,122.68 L347.00,121.33 L348.00,119.99 L349.00,118.67 L350.00,117.37 L351.00,116.08 L352.00,114.82 L353.00,113.57 L354.00,112.34 L355.00,111.14 L356.00,109.95 L357.00,108.78 L358.00,107.63 L359.00,106.51 L360.00,105.40 L361.00,104.32 L362.00,103.25 L363.00,102.21 L364.00,101.19 L365.00,100.20 L366.00,99.22 L367.00,98.27 L368.00,97.34 L369.00,96.43 L370.00,95.55 L371.00,94.69 L372.00,93.85 L373.00,93.04 L374.00,92.25 L375.00,91.49 L376.00,90.75 L377.00,90.03 L378.00,89.34 L379.00,88.68 L380.00,88.04 L381.00,87.42 L382.00,86.83 L383.00,86.27 L384.00,85.73 L385.00,85.22 L386.00,84.73 L387.00,84.27 L388.00,83.84 L389.00,83.43 L390.00,83.04 L391.00,82.69 L392.00,82.36 L393.00,82.06 L394.00,81.78 L395.00,81.53 L396.00,81.31 L397.00,81.12 L398.00,80.95 L399.00,80.80 L400.00,80.69 L401.00,80.60 L402.00,80.54 L403.00,80.51 L404.00,80.50 L405.00,80.52 L406.00,80.57 L407.00,80.64 L408.00,80.74 L409.00,80.87 L410.00,81.03 L411.00,81.21 L412.00,81.42 L413.00,81.65 L414.00,81.92 L415.00,82.21 L416.00,82.52 L417.00,82.86 L418.00,83.23 L419.00,83.63 L420.00,84.05 L421.00,84.50 L422.00,84.97 L423.00,85.47 L424.00,86.00 L425.00,86.55 L426.00,87.12 L427.00,87.73 L428.00,88.35 L429.00,89.01 L430.00,89.68 L431.00,90.39 L432.00,91.11 L433.00,91.87 L434.00,92.64 L435.00,93.44 L436.00,94.27 L437.00,95.12 L438.00,95.99 L439.00,96.88 L440.00,97.80 L441.00,98.74 L442.00,99.71 L443.00,100.69 L444.00,101.70 L445.00,102.73 L446.00,103.78 L447.00,104.86 L448.00,105.95 L449.00,107.07 L450.00,108.21 L451.00,109.36 L452.00,110.54 L453.00,111.74 L454.00,112.96 L455.00,114.19 L456.00,115.45 L457.00,116.72 L458.00,118.01 L459.00,119.33 L460.00,120.65 L461.00,122.00 L462.00,123.37 L463.00,124.75 L464.00,126.14 L465.00,127.56 L466.00,128.99 L467.00,130.43 L468.00,131.89 L469.00,133.37 L470.00,134.86 L471.00,136.36 L472.00,137.88 L473.00,139.41 L474.00,140.95 L475.00,142.51 L476.00,144.08 L477.00,145.66 L478.00,147.25 L479.00,148.86 L480.00,150.47 L481.00,152.10 L482.00,153.73 L483.00,155.38 L484.00,157.03 L485.00,158.70 L486.00,160.37 L487.00,162.05 L488.00,163.74 L489.00,165.44 L490.00,167.14 L491.00,168.85 L492.00,170.56 L493.00,172.28 L494.00,174.01 L495.00,175.74 L496.00,177.48 L497.00,179.22 L498.00,180.96 L499.00,182.71 L500.00,184.44 L501.00,186.06 L502.00,187.54 L503.00,188.89 L504.00,190.11 L505.00,191.19 L506.00,192.14 L507.00,192.95 L508.00,193.63 L509.00,194.17 L510.00,194.57 L511.00,194.85 L512.00,194.98 L513.00,195.00 L514.00,195.00 L515.00,195.00 L516.00,195.00 L517.00,195.00 L518.00,195.00 L519.00,195.00 L520.00,195.00 L521.00,195.00 L522.00,195.00 L523.00,195.00 L524.00,195.00 L525.00,195.00 L526.00,195.00 L527.00,195.00 L528.00,195.00 L529.00,195.00 L530.00,195.00 L531.00,195.00 L532.00,195.00 L533.00,195.00 L534.00,195.00 L535.00,195.00 L536.00,195.00 L537.00,195.00 L538.00,195.00 L539.00,195.00 L540.00,195.00 L541.00,195.00 L542.00,195.00 L543.00,195.00 L544.00,195.00 L545.00,195.00 L546.00,195.00 L547.00,195.00 L548.00,195.00 L549.00,195.00 L550.00,195.00 L551.00,195.00 L552.00,195.00 L553.00,195.00 L554.00,195.00 L555.00,195.00 L556.00,195.00 L557.00,195.00 L558.00,195.00 L559.00,195.00 L560.00,195.00 L561.00,195.00 L562.00,195.00 L563.00,195.00 L564.00,195.00 L565.00,195.00 L566.00,195.00 L567.00,195.00 L568.00,195.00 L569.00,195.00 L570.00,195.00 L571.00,195.00 L572.00,195.00 L573.00,195.00 L574.00,195.00 L575.00,195.00 L576.00,195.00 L577.00,195.00 L578.00,195.00 L579.00,195.00 L580.00,195.00 L581.00,195.00 L582.00,195.00 L583.00,195.00 L584.00,195.00 L585.00,195.00 L586.00,195.00 L587.00,195.00 L588.00,195.00 L589.00,195.00 L590.00,195.00 L591.00,195.00 L592.00,195.00 L593.00,195.00 L594.00,195.00 L595.00,195.00 L596.00,195.00 L597.00,195.00 L598.00,195.00 L599.00,195.00 L600.00,195.00 L601.00,195.00 L602.00,195.00 L603.00,195.00 L604.00,195.00 L605.00,195.00 L606.00,195.00 L607.00,195.00 L608.00,195.00 L609.00,195.00 L610.00,195.00 L611.00,195.00 L612.00,195.00 L613.00,195.00 L614.00,195.00 L615.00,195.00 L616.00,195.00 L617.00,195.00 L618.00,195.00 L619.00,195.00 L620.00,195.00 L621.00,195.00 L622.00,195.00 L623.00,195.00 L624.00,195.00 L625.00,195.00 L626.00,195.00 L627.00,195.00 L628.00,195.00 L629.00,195.00 L630.00,195.00 L631.00,195.00 L632.00,195.00 L633.00,195.00 L634.00,195.00 L635.00,195.00 L636.00,195.00 L637.00,195.00 L638.00,195.00 L639.00,195.00 L640.00,195.00 L641.00,195.00 L642.00,195.00 L643.00,195.00 L644.00,195.00 L645.00,195.00 L646.00,195.00 L647.00,195.00 L648.00,195.00 L649.00,195.00 L650.00,195.00 L651.00,195.00 L652.00,195.00 L653.00,195.00 L654.00,195.00 L655.00,195.00 L656.00,195.00 L657.00,195.00 L658.00,195.00 L659.00,195.00 L660.00,195.00 L661.00,195.00 L662.00,195.00 L663.00,195.00 L664.00,195.00 L665.00,195.00 L666.00,195.00 L667.00,195.00 L668.00,195.00 L669.00,195.00 L670.00,195.00 L671.00,195.00 L672.00,195.00 L673.00,195.00 L674.00,195.00 L675.00,195.00 L676.00,195.00 L677.00,195.00 L678.00,195.00 L679.00,195.00 L680.00,195.00 L681.00,195.00 L682.00,195.00 L683.00,195.00 L684.00,195.00 L685.00,195.00 L686.00,195.00 L687.00,195.00 L688.00,195.00 L689.00,195.00 L690.00,195.00 L691.00,195.00 L692.00,195.00 L693.00,195.00 L694.00,195.00 L695.00,195.00 L696.00,195.00 L697.00,195.00 L698.00,195.00 L699.00,195.00 L700.00,195.00 L701.00,195.00 L702.00,195.00 L703.00,195.00 L704.00,195.00 L705.00,194.93 L706.00,194.73 L707.00,194.39 L708.00,193.91 L709.00,193.30 L710.00,192.56 L711.00,191.68 L712.00,190.67 L713.00,189.52 L714.00,188.23 L715.00,186.82 L716.00,185.27 L717.00,183.59 L718.00,181.84 L719.00,180.09 L720.00,178.35 L721.00,176.61 L722.00,174.88 L723.00,173.15 L724.00,171.42 L725.00,169.71 L726.00,167.99 L727.00,166.29 L728.00,164.59 L729.00,162.90 L730.00,161.21 L731.00,159.53 L732.00,157.87 L733.00,156.21 L734.00,154.56 L735.00,152.92 L736.00,151.28 L737.00,149.66 L738.00,148.05 L739.00,146.46 L740.00,144.87 L741.00,143.29 L742.00,141.73 L743.00,140.18 L744.00,138.64 L745.00,137.12 L746.00,135.61 L747.00,134.11 L748.00,132.63 L749.00,131.16 L750.00,129.71 L751.00,128.27 L752.00,126.85 L753.00,125.44 L754.00,124.05 L755.00,122.68 L756.00,121.33 L757.00,119.99 L758.00,118.67 L759.00,117.37 L760.00,116.08 L761.00,114.82 L762.00,113.57 L763.00,112.34 L764.00,111.14 L765.00,109.95 L766.00,108.78 L767.00,107.63 L768.00,106.51 L769.00,105.40 L770.00,104.32 L771.00,103.25 L772.00,102.21 L773.00,101.19 L774.00,100.20 L775.00,99.22 L776.00,98.27 L777.00,97.34 L778.00,96.43 L779.00,95.55 L780.00,94.69 L781.00,93.85 L782.00,93.04 L783.00,92.25 L784.00,91.49 L785.00,90.75 L786.00,90.03 L787.00,89.34 L788.00,88.68 L789.00,88.04 L790.00,87.42 L791.00,86.83 L792.00,86.27 L793.00,85.73 L794.00,85.22 L795.00,84.73 L796.00,84.27 L797.00,83.84 L798.00,83.43 L799.00,83.04 L800.00,82.69 L801.00,82.36 L802.00,82.06 L803.00,81.78 L804.00,81.53 L805.00,81.31 L806.00,81.12 L807.00,80.95 L808.00,80.80 L809.00,80.69 L810.00,80.60 L811.00,80.54 L812.00,80.51 L813.00,80.50 L814.00,80.52 L815.00,80.57 L816.00,80.64 L817.00,80.74 L818.00,80.87 L819.00,81.03 L820.00,81.21 L821.00,81.42 L822.00,81.65 L823.00,81.92 L824.00,82.21 L825.00,82.52 L826.00,82.86 L827.00,83.23 L828.00,83.63 L829.00,84.05 L830.00,84.50 L831.00,84.97 L832.00,85.47 L833.00,86.00 L834.00,86.55 L835.00,87.12 L836.00,87.73 L837.00,88.35 L838.00,89.01 L839.00,89.68 L840.00,90.39 L841.00,91.11 L842.00,91.87 L843.00,92.64 L844.00,93.44 L845.00,94.27 L846.00,95.12 L847.00,95.99 L848.00,96.88 L849.00,97.80 L850.00,98.74 L851.00,99.71 L852.00,100.69 L853.00,101.70 L854.00,102.73 L855.00,103.78 L856.00,104.86 L857.00,105.95 L858.00,107.07 L859.00,108.21 L860.00,109.36 L861.00,110.54 L862.00,111.74 L863.00,112.96 L864.00,114.19 L865.00,115.45 L866.00,116.72 L867.00,118.01 L868.00,119.33 L869.00,120.65 L870.00,122.00 L871.00,123.37 L872.00,124.75 L873.00,126.14 L874.00,127.56 L875.00,128.99 L876.00,130.43 L877.00,131.89 L878.00,133.37 L879.00,134.86 L880.00,136.36 L881.00,137.88 L882.00,139.41 L883.00,140.95 L884.00,142.51 L885.00,144.08 L886.00,145.66 L887.00,147.25 L888.00,148.86 L889.00,150.47 L890.00,152.10 L891.00,153.73 L892.00,155.38 L893.00,157.03 L894.00,158.70 L895.00,160.37 L896.00,162.05 L897.00,163.74 L898.00,165.44 L899.00,167.14 L900.00,168.85 L901.00,170.56 L902.00,172.28 L903.00,174.01 L904.00,175.74 L905.00,177.48 L906.00,179.22 L907.00,180.96 L908.00,182.71 L909.00,184.44 L910.00,186.06 L911.00,187.54 L912.00,188.89 L913.00,190.11 L914.00,191.19 L915.00,192.14 L916.00,192.95 L917.00,193.63 L918.00,194.17 L919.00,194.57 L920.00,194.85 L921.00,194.98 L922.00,195.00 L923.00,195.00 L924.00,195.00 L925.00,195.00 L926.00,195.00 L927.00,195.00 L928.00,195.00 L929.00,195.00 L930.00,195.00 L931.00,195.00 L932.00,195.00 L933.00,195.00 L934.00,195.00 L935.00,195.00 L936.00,195.00 L937.00,195.00 L938.00,195.00 L939.00,195.00 L940.00,195.00 L941.00,195.00 L942.00,195.00 L943.00,195.00 L944.00,195.00 L945.00,195.00 L946.00,195.00 L947.00,195.00 L948.00,195.00 L949.00,195.00 L950.00,195.00 L951.00,195.00 L952.00,195.00 L953.00,195.00 L954.00,195.00 L955.00,195.00 L956.00,195.00 L957.00,195.00 L958.00,195.00 L959.00,195.00 L960.00,195.00 L961.00,195.00 L962.00,195.00 L963.00,195.00 L964.00,195.00 L965.00,195.00 L966.00,195.00 L967.00,195.00 L968.00,195.00 L969.00,195.00 L970.00,195.00 L971.00,195.00 L972.00,195.00 L973.00,195.00 L974.00,195.00 L975.00,195.00 L976.00,195.00 L977.00,195.00 L978.00,195.00 L979.00,195.00 L980.00,195.00 L981.00,195.00 L982.00,195.00 L983.00,195.00 L984.00,195.00 L985.00,195.00 L986.00,195.00 L987.00,195.00 L988.00,195.00 L989.00,195.00 L990.00,195.00 L991.00,195.00 L992.00,195.00 L993.00,195.00 L994.00,195.00 L995.00,195.00 L996.00,195.00 L997.00,195.00 L998.00,195.00 L999.00,195.00 L1000.00,195.00 L1001.00,195.00 L1002.00,195.00 L1003.00,195.00 L1004.00,195.00 L1005.00,195.00 L1006.00,195.00 L1007.00,195.00 L1008.00,195.00 L1009.00,195.00 L1010.00,195.00 L1011.00,195.00 L1012.00,195.00 L1013.00,195.00 L1014.00,195.00 L1015.00,195.00 L1016.00,195.00 L1017.00,195.00 L1018.00,195.00 L1019.00,195.00 L1020.00,195.00 L1021.00,195.00 L1022.00,195.00 L1023.00,195.00 L1024.00,195.00 L1025.00,195.00 L1026.00,195.00 L1027.00,195.00 L1028.00,195.00 L1029.00,195.00 L1030.00,195.00 L1031.00,195.00 L1032.00,195.00 L1033.00,195.00 L1034.00,195.00 L1035.00,195.00 L1036.00,195.00 L1037.00,195.00 L1038.00,195.00 L1039.00,195.00 L1040.00,195.00 L1041.00,195.00 L1042.00,195.00 L1043.00,195.00 L1044.00,195.00 L1045.00,195.00 L1046.00,195.00 L1047.00,195.00 L1048.00,195.00 L1049.00,195.00 L1050.00,195.00 L1051.00,195.00 L1052.00,195.00 L1053.00,195.00 L1054.00,195.00 L1055.00,195.00 L1056.00,195.00 L1057.00,195.00 L1058.00,195.00 L1059.00,195.00 L1060.00,195.00 L1061.00,195.00 L1062.00,195.00 L1063.00,195.00 L1064.00,195.00 L1065.00,195.00 L1066.00,195.00 L1067.00,195.00 L1068.00,195.00 L1069.00,195.00 L1070.00,195.00 L1071.00,195.00 L1072.00,195.00 L1073.00,195.00 L1074.00,195.00 L1075.00,195.00 L1076.00,195.00 L1077.00,195.00 L1078.00,195.00 L1079.00,195.00 L1080.00,195.00 L1081.00,195.00 L1082.00,195.00 L1083.00,195.00 L1084.00,195.00 L1085.00,195.00 L1086.00,195.00 L1087.00,195.00 L1088.00,195.00 L1089.00,195.00 L1090.00,195.00 L1091.00,195.00 L1092.00,195.00 L1093.00,195.00 L1094.00,195.00 L1095.00,195.00 L1096.00,195.00 L1097.00,195.00 L1098.00,195.00 L1099.00,195.00 L1100.00,195.00 L1101.00,195.00 L1102.00,195.00 L1103.00,195.00 L1104.00,195.00 L1105.00,195.00 L1106.00,195.00 L1107.00,195.00 L1108.00,195.00 L1109.00,195.00 L1110.00,195.00 L1111.00,195.00 L1112.00,195.00 L1113.00,195.00 L1114.00,194.93 L1115.00,194.73 L1116.00,194.39 L1117.00,193.91 L1118.00,193.30 L1119.00,192.56 L1120.00,191.68 L1121.00,190.67 L1122.00,189.52 L1123.00,188.23 L1124.00,186.82 L1125.00,185.27 L1126.00,183.59 L1127.00,181.84 L1128.00,180.09 L1129.00,178.35 L1130.00,176.61 L1131.00,174.88 L1132.00,173.15 L1133.00,171.42 L1134.00,169.71 L1135.00,167.99 L1136.00,166.29 L1137.00,164.59 L1138.00,162.90 L1139.00,161.21 L1140.00,159.53 L1141.00,157.87 L1142.00,156.21 L1143.00,154.56 L1144.00,152.92 L1145.00,151.28 L1146.00,149.66 L1147.00,148.05 L1148.00,146.46 L1149.00,144.87 L1150.00,143.29 L1151.00,141.73 L1152.00,140.18 L1153.00,138.64 L1154.00,137.12 L1155.00,135.61 L1156.00,134.11 L1157.00,132.63 L1158.00,131.16 L1159.00,129.71 L1160.00,128.27 L1161.00,126.85 L1162.00,125.44 L1163.00,124.05 L1164.00,122.68 L1165.00,121.33 L1166.00,119.99 L1167.00,118.67 L1168.00,117.37 L1169.00,116.08 L1170.00,114.82 L1171.00,113.57 L1172.00,112.34 L1173.00,111.14 L1174.00,109.95 L1175.00,108.78 L1176.00,107.63 L1177.00,106.51 L1178.00,105.40 L1179.00,104.32 L1180.00,103.25 L1181.00,102.21 L1182.00,101.19 L1183.00,100.20 L1184.00,99.22 L1185.00,98.27 L1186.00,97.34 L1187.00,96.43 L1188.00,95.55 L1189.00,94.69 L1190.00,93.85 L1191.00,93.04 L1192.00,92.25 L1193.00,91.49 L1194.00,90.75 L1195.00,90.03 L1196.00,89.34 L1197.00,88.68 L1198.00,88.04 L1199.00,87.42 L1200.00,86.83 L1201.00,86.27 L1202.00,85.73 L1203.00,85.22 L1204.00,84.73 L1205.00,84.27 L1206.00,83.84 L1207.00,83.43 L1208.00,83.04 L1209.00,82.69 L1210.00,82.36 L1211.00,82.06 L1212.00,81.78 L1213.00,81.53 L1214.00,81.31 L1215.00,81.12 L1216.00,80.95 L1217.00,80.80 L1218.00,80.69 L1219.00,80.60 L1220.00,80.54 L1221.00,80.51 L1222.00,80.50 L1223.00,80.52 L1224.00,80.57 L1225.00,80.64 L1226.00,80.74 L1227.00,80.87 L1228.00,81.03 L1229.00,81.21 L1230.00,81.42 L1231.00,81.65 L1232.00,81.92 L1233.00,82.21 L1234.00,82.52 L1235.00,82.86 L1236.00,83.23 L1237.00,83.63 L1238.00,84.05 L1239.00,84.50 L1240.00,84.97 L1241.00,85.47 L1242.00,86.00 L1243.00,86.55 L1244.00,87.12 L1245.00,87.73 L1246.00,88.35 L1247.00,89.01 L1248.00,89.68 L1249.00,90.39 L1250.00,91.11 L1251.00,91.87 L1252.00,92.64 L1253.00,93.44 L1254.00,94.27 L1255.00,95.12 L1256.00,95.99 L1257.00,96.88 L1258.00,97.80 L1259.00,98.74 L1260.00,99.71 L1261.00,100.69 L1262.00,101.70 L1263.00,102.73 L1264.00,103.78 L1265.00,104.86 L1266.00,105.95 L1267.00,107.07 L1268.00,108.21 L1269.00,109.36 L1270.00,110.54 L1271.00,111.74 L1272.00,112.96 L1273.00,114.19 L1274.00,115.45 L1275.00,116.72 L1276.00,118.01 L1277.00,119.33 L1278.00,120.65 L1279.00,122.00 L1280.00,123.37 L1281.00,124.75 L1282.00,126.14 L1283.00,127.56 L1284.00,128.99 L1285.00,130.43 L1286.00,131.89 L1287.00,133.37 L1288.00,134.86 L1289.00,136.36 L1290.00,137.88 L1291.00,139.41 L1292.00,140.95 L1293.00,142.51 L1294.00,144.08 L1295.00,145.66 L1296.00,147.25 L1297.00,148.86 L1298.00,150.47 L1299.00,152.10 L1300.00,153.73 L1301.00,155.38 L1302.00,157.03 L1303.00,158.70 L1304.00,160.37 L1305.00,162.05 L1306.00,163.74 L1307.00,165.44 L1308.00,167.14 L1309.00,168.85 L1310.00,170.56 L1311.00,172.28 L1312.00,174.01 L1313.00,175.74 L1314.00,177.48 L1315.00,179.22 L1316.00,180.96 L1317.00,182.71 L1318.00,184.44 L1319.00,186.06 L1320.00,187.54 L1321.00,188.89 L1322.00,190.11 L1323.00,191.19 L1324.00,192.14" fill="none" stroke="#ff4500" stroke-width="1.5"/>
<path d="M97.00,197.86 L98.00,198.81 L99.00,199.89 L100.00,201.11 L101.00,202.46 L102.00,203.94 L103.00,205.56 L104.00,207.29 L105.00,209.04 L106.00,210.78 L107.00,212.52 L108.00,214.26 L109.00,215.99 L110.00,217.72 L111.00,219.44 L112.00,221.15 L113.00,222.86 L114.00,224.56 L115.00,226.26 L116.00,227.95 L117.00,229.63 L118.00,231.30 L119.00,232.97 L120.00,234.62 L121.00,236.27 L122.00,237.90 L123.00,239.53 L124.00,241.14 L125.00,242.75 L126.00,244.34 L127.00,245.92 L128.00,247.49 L129.00,249.05 L130.00,250.59 L131.00,252.12 L132.00,253.64 L133.00,255.14 L134.00,256.63 L135.00,258.11 L136.00,259.57 L137.00,261.01 L138.00,262.44 L139.00,263.86 L140.00,265.25 L141.00,266.63 L142.00,268.00 L143.00,269.35 L144.00,270.67 L145.00,271.99 L146.00,273.28 L147.00,274.55 L148.00,275.81 L149.00,277.04 L150.00,278.26 L151.00,279.46 L152.00,280.64 L153.00,281.79 L154.00,282.93 L155.00,284.05 L156.00,285.14 L157.00,286.22 L158.00,287.27 L159.00,288.30 L160.00,289.31 L161.00,290.29 L162.00,291.26 L163.00,292.20 L164.00,293.12 L165.00,294.01 L166.00,294.88 L167.00,295.73 L168.00,296.56 L169.00,297.36 L170.00,298.13 L171.00,298.89 L172.00,299.61 L173.00,300.32 L174.00,300.99 L175.00,301.65 L176.00,302.27 L177.00,302.88 L178.00,303.45 L179.00,304.00 L180.00,304.53 L181.00,305.03 L182.00,305.50 L183.00,305.95 L184.00,306.37 L185.00,306.77 L186.00,307.14 L187.00,307.48 L188.00,307.79 L189.00,308.08 L190.00,308.35 L191.00,308.58 L192.00,308.79 L193.00,308.97 L194.00,309.13 L195.00,309.26 L196.00,309.36 L197.00,309.43 L198.00,309.48 L199.00,309.50 L200.00,309.49 L201.00,309.46 L202.00,309.40 L203.00,309.31 L204.00,309.20 L205.00,309.05 L206.00,308.88 L207.00,308.69 L208.00,308.47 L209.00,308.22 L210.00,307.94 L211.00,307.64 L212.00,307.31 L213.00,306.96 L214.00,306.57 L215.00,306.16 L216.00,305.73 L217.00,305.27 L218.00,304.78 L219.00,304.27 L220.00,303.73 L221.00,303.17 L222.00,302.58 L223.00,301.96 L224.00,301.32 L225.00,300.66 L226.00,299.97 L227.00,299.25 L228.00,298.51 L229.00,297.75 L230.00,296.96 L231.00,296.15 L232.00,295.31 L233.00,294.45 L234.00,293.57 L235.00,292.66 L236.00,291.73 L237.00,290.78 L238.00,289.80 L239.00,288.81 L240.00,287.79 L241.00,286.75 L242.00,285.68 L243.00,284.60 L244.00,283.49 L245.00,282.37 L246.00,281.22 L247.00,280.05 L248.00,278.86 L249.00,277.66 L250.00,276.43 L251.00,275.18 L252.00,273.92 L253.00,272.63 L254.00,271.33 L255.00,270.01 L256.00,268.67 L257.00,267.32 L258.00,265.95 L259.00,264.56 L260.00,263.15 L261.00,261.73 L262.00,260.29 L263.00,258.84 L264.00,257.37 L265.00,255.89 L266.00,254.39 L267.00,252.88 L268.00,251.36 L269.00,249.82 L270.00,248.27 L271.00,246.71 L272.00,245.13 L273.00,243.54 L274.00,241.95 L275.00,240.34 L276.00,238.72 L277.00,237.08 L278.00,235.44 L279.00,233.79 L280.00,232.13 L281.00,230.47 L282.00,228.79 L283.00,227.10 L284.00,225.41 L285.00,223.71 L286.00,222.01 L287.00,220.29 L288.00,218.58 L289.00,216.85 L290.00,215.12 L291.00,213.39 L292.00,211.65 L293.00,209.91 L294.00,208.16 L295.00,206.41 L296.00,204.73 L297.00,203.18 L298.00,201.77 L299.00,200.48 L300.00,199.33 L301.00,198.32 L302.00,197.44 L303.00,196.70 L304.00,196.09 L305.00,195.61 L306.00,195.27 L307.00,195.07 L308.00,195.00 L309.00,195.00 L310.00,195.00 L311.00,195.00 L312.00,195.00 L313.00,195.00 L314.00,195.00 L315.00,195.00 L316.00,195.00 L317.00,195.00 L318.00,195.00 L319.00,195.00 L320.00,195.00 L321.00,195.00 L322.00,195.00 L323.00,195.00 L324.00,195.00 L325.00,195.00 L326.00,195.00 L327.00,195.00 L328.00,195.00 L329.00,195.00 L330.00,195.00 L331.00,195.00 L332.00,195.00 L333.00,195.00 L334.00,195.00 L335.00,195.00 L336.00,195.00 L337.00,195.00 L338.00,195.00 L339.00,195.00 L340.00,195.00 L341.00,195.00 L342.00,195.00 L343.00,195.00 L344.00,195.00 L345.00,195.00 L346.00,195.00 L347.00,195.00 L348.00,195.00 L349.00,195.00 L350.00,195.00 L351.00,195.00 L352.00,195.00 L353.00,195.00 L354.00,195.00 L355.00,195.00 L356.00,195.00 L357.00,195.00 L358.00,195.00 L359.00,195.00 L360.00,195.00 L361.00,195.00 L362.00,195.00 L363.00,195.00 L364.00,195.00 L365.00,195.00 L366.00,195.00 L367.00,195.00 L368.00,195.00 L369.00,195.00 L370.00,195.00 L371.00,195.00 L372.00,195.00 L373.00,195.00 L374.00,195.00 L375.00,195.00 L376.00,195.00 L377.00,195.00 L378.00,195.00 L379.00,195.00 L380.00,195.00 L381.00,195.00 L382.00,195.00 L383.00,195.00 L384.00,195.00 L385.00,195.00 L386.00,195.00 L387.00,195.00 L388.00,195.00 L389.00,195.00 L390.00,195.00 L391.00,195.00 L392.00,195.00 L393.00,195.00 L394.00,195.00 L395.00,195.00 L396.00,195.00 L397.00,195.00 L398.00,195.00 L399.00,195.00 L400.00,195.00 L401.00,195.00 L402.00,195.00 L403.00,195.00 L404.00,195.00 L405.00,195.00 L406.00,195.00 L407.00,195.00 L408.00,195.00 L409.00,195.00 L410.00,195.00 L411.00,195.00 L412.00,195.00 L413.00,195.00 L414.00,195.00 L415.00,195.00 L416.00,195.00 L417.00,195.00 L418.00,195.00 L419.00,195.00 L420.00,195.00 L421.00,195.00 L422.00,195.00 L423.00,195.00 L424.00,195.00 L425.00,195.00 L426.00,195.00 L427.00,195.00 L428.00,195.00 L429.00,195.00 L430.00,195.00 L431.00,195.00 L432.00,195.00 L433.00,195.00 L434.00,195.00 L435.00,195.00 L436.00,195.00 L437.00,195.00 L438.00,195.00 L439.00,195.00 L440.00,195.00 L441.00,195.00 L442.00,195.00 L443.00,195.00 L444.00,195.00 L445.00,195.00 L446.00,195.00 L447.00,195.00 L448.00,195.00 L449.00,195.00 L450.00,195.00 L451.00,195.00 L452.00,195.00 L453.00,195.00 L454.00,195.00 L455.00,195.00 L456.00,195.00 L457.00,195.00 L458.00,195.00 L459.00,195.00 L460.00,195.00 L461.00,195.00 L462.00,195.00 L463.00,195.00 L464.00,195.00 L465.00,195.00 L466.00,195.00 L467.00,195.00 L468.00,195.00 L469.00,195.00 L470.00,195.00 L471.00,195.00 L472.00,195.00 L473.00,195.00 L474.00,195.00 L475.00,195.00 L476.00,195.00 L477.00,195.00 L478.00,195.00 L479.00,195.00 L480.00,195.00 L481.00,195.00 L482.00,195.00 L483.00,195.00 L484.00,195.00 L485.00,195.00 L486.00,195.00 L487.00,195.00 L488.00,195.00 L489.00,195.00 L490.00,195.00 L491.00,195.00 L492.00,195.00 L493.00,195.00 L494.00,195.00 L495.00,195.00 L496.00,195.00 L497.00,195.00 L498.00,195.00 L499.00,195.00 L500.00,195.02 L501.00,195.15 L502.00,195.43 L503.00,195.83 L504.00,196.37 L505.00,197.05 L506.00,197.86 L507.00,198.81 L508.00,199.89 L509.00,201.11 L510.00,202.46 L511.00,203.94 L512.00,205.56 L513.00,207.29 L514.00,209.04 L515.00,210.78 L516.00,212.52 L517.00,214.26 L518.00,215.99 L519.00,217.72 L520.00,219.44 L521.00,221.15 L522.00,222.86 L523.00,224.56 L524.00,226.26 L525.00,227.95 L526.00,229.63 L527.00,231.30 L528.00,232.97 L529.00,234.62 L530.00,236.27 L531.00,237.90 L532.00,239.53 L533.00,241.14 L534.00,242.75 L535.00,244.34 L536.00,245.92 L537.00,247.49 L538.00,249.05 L539.00,250.59 L540.00,252.12 L541.00,253.64 L542.00,255.14 L543.00,256.63 L544.00,258.11 L545.00,259.57 L546.00,261.01 L547.00,262.44 L548.00,263.86 L549.00,265.25 L550.00,266.63 L551.00,268.00 L552.00,269.35 L553.00,270.67 L554.00,271.99 L555.00,273.28 L556.00,274.55 L557.00,275.81 L558.00,277.04 L559.00,278.26 L560.00,279.46 L561.00,280.64 L562.00,281.79 L563.00,282.93 L564.00,284.05 L565.00,285.14 L566.00,286.22 L567.00,287.27 L568.00,288.30 L569.00,289.31 L570.00,290.29 L571.00,291.26 L572.00,292.20 L573.00,293.12 L574.00,294.01 L575.00,294.88 L576.00,295.73 L577.00,296.56 L578.00,297.36 L579.00,298.13 L580.00,298.89 L581.00,299.61 L582.00,300.32 L583.00,300.99 L584.00,301.65 L585.00,302.27 L586.00,302.88 L587.00,303.45 L588.00,304.00 L589.00,304.53 L590.00,305.03 L591.00,305.50 L592.00,305.95 L593.00,306.37 L594.00,306.77 L595.00,307.14 L596.00,307.48 L597.00,307.79 L598.00,308.08 L599.00,308.35 L600.00,308.58 L601.00,308.79 L602.00,308.97 L603.00,309.13 L604.00,309.26 L605.00,309.36 L606.00,309.43 L607.00,309.48 L608.00,309.50 L609.00,309.49 L610.00,309.46 L611.00,309.40 L612.00,309.31 L613.00,309.20 L614.00,309.05 L615.00,308.88 L616.00,308.69 L617.00,308.47 L618.00,308.22 L619.00,307.94 L620.00,307.64 L621.00,307.31 L622.00,306.96 L623.00,306.57 L624.00,306.16 L625.00,305.73 L626.00,305.27 L627.00,304.78 L628.00,304.27 L629.00,303.73 L630.00,303.17 L631.00,302.58 L632.00,301.96 L633.00,301.32 L634.00,300.66 L635.00,299.97 L636.00,299.25 L637.00,298.51 L638.00,297.75 L639.00,296.96 L640.00,296.15 L641.00,295.31 L642.00,294.45 L643.00,293.57 L644.00,292.66 L645.00,291.73 L646.00,290.78 L647.00,289.80 L648.00,288.81 L649.00,287.79 L650.00,286.75 L651.00,285.68 L652.00,284.60 L653.00,283.49 L654.00,282.37 L655.00,281.22 L656.00,280.05 L657.00,278.86 L658.00,277.66 L659.00,276.43 L660.00,275.18 L661.00,273.92 L662.00,272.63 L663.00,271.33 L664.00,270.01 L665.00,268.67 L666.00,267.32 L667.00,265.95 L668.00,264.56 L669.00,263.15 L670.00,261.73 L671.00,260.29 L672.00,258.84 L673.00,257.37 L674.00,255.89 L675.00,254.39 L676.00,252.88 L677.00,251.36 L678.00,249.82 L679.00,248.27 L680.00,246.71 L681.00,245.13 L682.00,243.54 L683.00,241.95 L684.00,240.34 L685.00,238.72 L686.00,237.08 L687.00,235.44 L688.00,233.79 L689.00,232.13 L690.00,230.47 L691.00,228.79 L692.00,227.10 L693.00,225.41 L694.00,223.71 L695.00,222.01 L696.00,220.29 L697.00,218.58 L698.00,216.85 L699.00,215.12 L700.00,213.39 L701.00,211.65 L702.00,209.91 L703.00,208.16 L704.00,206.41 L705.00,204.73 L706.00,203.18 L707.00,201.77 L708.00,200.48 L709.00,199.33 L710.00,198.32 L711.00,197.44 L712.00,196.70 L713.00,196.09 L714.00,195.61 L715.00,195.27 L716.00,195.07 L717.00,195.00 L718.00,195.00 L719.00,195.00 L720.00,195.00 L721.00,195.00 L722.00,195.00 L723.00,195.00 L724.00,195.00 L725.00,195.00 L726.00,195.00 L727.00,195.00 L728.00,195.00 L729.00,195.00 L730.00,195.00 L731.00,195.00 L732.00,195.00 L733.00,195.00 L734.00,195.00 L735.00,195.00 L736.00,195.00 L737.00,195.00 L738.00,195.00 L739.00,195.00 L740.00,195.00 L741.00,195.00 L742.00,195.00 L743.00,195.00 L744.00,195.00 L745.00,195.00 L746.00,195.00 L747.00,195.00 L748.00,195.00 L749.00,195.00 L750.00,195.00 L751.00,195.00 L752.00,195.00 L753.00,195.00 L754.00,195.00 L755.00,195.00 L756.00,195.00 L757.00,195.00 L758.00,195.00 L759.00,195.00 L760.00,195.00 L761.00,195.00 L762.00,195.00 L763.00,195.00 L764.00,195.00 L765.00,195.00 L766.00,195.00 L767.00,195.00 L768.00,195.00 L769.00,195.00 L770.00,195.00 L771.00,195.00 L772.00,195.00 L773.00,195.00 L774.00,195.00 L775.00,195.00 L776.00,195.00 L777.00,195.00 L778.00,195.00 L779.00,195.00 L780.00,195.00 L781.00,195.00 L782.00,195.00 L783.00,195.00 L784.00,195.00 L785.00,195.00 L786.00,195.00 L787.00,195.00 L788.00,195.00 L789.00,195.00 L790.00,195.00 L791.00,195.00 L792.00,195.00 L793.00,195.00 L794.00,195.00 L795.00,195.00 L796.00,195.00 L797.00,195.00 L798.00,195.00 L799.00,195.00 L800.00,195.00 L801.00,195.00 L802.00,195.00 L803.00,195.00 L804.00,195.00 L805.00,195.00 L806.00,195.00 L807.00,195.00 L808.00,195.00 L809.00,195.00 L810.00,195.00 L811.00,195.00 L812.00,195.00 L813.00,195.00 L814.00,195.00 L815.00,195.00 L816.00,195.00 L817.00,195.00 L818.00,195.00 L819.00,195.00 L820.00,195.00 L821.00,195.00 L822.00,195.00 L823.00,195.00 L824.00,195.00 L825.00,195.00 L826.00,195.00 L827.00,195.00 L828.00,195.00 L829.00,195.00 L830.00,195.00 L831.00,195.00 L832.00,195.00 L833.00,195.00 L834.00,195.00 L835.00,195.00 L836.00,195.00 L837.00,195.00 L838.00,195.00 L839.00,195.00 L840.00,195.00 L841.00,195.00 L842.00,195.00 L843.00,195.00 L844.00,195.00 L845.00,195.00 L846.00,195.00 L847.00,195.00 L848.00,195.00 L849.00,195.00 L850.00,195.00 L851.00,195.00 L852.00,195.00 L853.00,195.00 L854.00,195.00 L855.00,195.00 L856.00,195.00 L857.00,195.00 L858.00,195.00 L859.00,195.00 L860.00,195.00 L861.00,195.00 L862.00,195.00 L863.00,195.00 L864.00,195.00 L865.00,195.00 L866.00,195.00 L867.00,195.00 L868.00,195.00 L869.00,195.00 L870.00,195.00 L871.00,195.00 L872.00,195.00 L873.00,195.00 L874.00,195.00 L875.00,195.00 L876.00,195.00 L877.00,195.00 L878.00,195.00 L879.00,195.00 L880.00,195.00 L881.00,195.00 L882.00,195.00 L883.00,195.00 L884.00,195.00 L885.00,195.00 L886.00,195.00 L887.00,195.00 L888.00,195.00 L889.00,195.00 L890.00,195.00 L891.00,195.00 L892.00,195.00 L893.00,195.00 L894.00,195.00 L895.00,195.00 L896.00,195.00 L897.00,195.00 L898.00,195.00 L899.00,195.00 L900.00,195.00 L901.00,195.00 L902.00,195.00 L903.00,195.00 L904.00,195.00 L905.00,195.00 L906.00,195.00 L907.00,195.00 L908.00,195.00 L909.00,195.02 L910.00,195.15 L911.00,195.43 L912.00,195.83 L913.00,196.37 L914.00,197.05 L915.00,197.86 L916.00,198.81 L917.00,199.89 L918.00,201.11 L919.00,202.46 L920.00,203.94 L921.00,205.56 L922.00,207.29 L923.00,209.04 L924.00,210.78 L925.00,212.52 L926.00,214.26 L927.00,215.99 L928.00,217.72 L929.00,219.44 L930.00,221.15 L931.00,222.86 L932.00,224.56 L933.00,226.26 L934.00,227.95 L935.00,229.63 L936.00,231.30 L937.00,232.97 L938.00,234.62 L939.00,236.27 L940.00,237.90 L941.00,239.53 L942.00,241.14 L943.00,242.75 L944.00,244.34 L945.00,245.92 L946.00,247.49 L947.00,249.05 L948.00,250.59 L949.00,252.12 L950.00,253.64 L951.00,255.14 L952.00,256.63 L953.00,258.11 L954.00,259.57 L955.00,261.01 L956.00,262.44 L957.00,263.86 L958.00,265.25 L959.00,266.63 L960.00,268.00 L961.00,269.35 L962.00,270.67 L963.00,271.99 L964.00,273.28 L965.00,274.55 L966.00,275.81 L967.00,277.04 L968.00,278.26 L969.00,279.46 L970.00,280.64 L971.00,281.79 L972.00,282.93 L973.00,284.05 L974.00,285.14 L975.00,286.22 L976.00,287.27 L977.00,288.30 L978.00,289.31 L979.00,290.29 L980.00,291.26 L981.00,292.20 L982.00,293.12 L983.00,294.01 L984.00,294.88 L985.00,295.73 L986.00,296.56 L987.00,297.36 L988.00,298.13 L989.00,298.89 L990.00,299.61 L991.00,300.32 L992.00,300.99 L993.00,301.65 L994.00,302.27 L995.00,302.88 L996.00,303.45 L997.00,304.00 L998.00,304.53 L999.00,305.03 L1000.00,305.50 L1001.00,305.95 L1002.00,306.37 L1003.00,306.77 L1004.00,307.14 L1005.00,307.48 L1006.00,307.79 L1007.00,308.08 L1008.00,308.35 L1009.00,308.58 L1010.00,308.79 L1011.00,308.97 L1012.00,309.13 L1013.00,309.26 L1014.00,309.36 L1015.00,309.43 L1016.00,309.48 L1017.00,309.50 L1018.00,309.49 L1019.00,309.46 L1020.00,309.40 L1021.00,309.31 L1022.00,309.20 L1023.00,309.05 L1024.00,308.88 L1025.00,308.69 L1026.00,308.47 L1027.00,308.22 L1028.00,307.94 L1029.00,307.64 L1030.00,307.31 L1031.00,306.96 L1032.00,306.57 L1033.00,306.16 L1034.00,305.73 L1035.00,305.27 L1036.00,304.78 L1037.00,304.27 L1038.00,303.73 L1039.00,303.17 L1040.00,302.58 L1041.00,301.96 L1042.00,301.32 L1043.00,300.66 L1044.00,299.97 L1045.00,299.25 L1046.00,298.51 L1047.00,297.75 L1048.00,296.96 L1049.00,296.15 L1050.00,295.31 L1051.00,294.45 L1052.00,293.57 L1053.00,292.66 L1054.00,291.73 L1055.00,290.78 L1056.00,289.80 L1057.00,288.81 L1058.00,287.79 L1059.00,286.75 L1060.00,285.68 L1061.00,284.60 L1062.00,283.49 L1063.00,282.37 L1064.00,281.22 L1065.00,280.05 L1066.00,278.86 L1067.00,277.66 L1068.00,276.43 L1069.00,275.18 L1070.00,273.92 L1071.00,272.63 L1072.00,271.33 L1073.00,270.01 L1074.00,268.67 L1075.00,267.32 L1076.00,265.95 L1077.00,264.56 L1078.00,263.15 L1079.00,261.73 L1080.00,260.29 L1081.00,258.84 L1082.00,257.37 L1083.00,255.89 L1084.00,254.39 L1085.00,252.88 L1086.00,251.36 L1087.00,249.82 L1088.00,248.27 L1089.00,246.71 L1090.00,245.13 L1091.00,243.54 L1092.00,241.95 L1093.00,240.34 L1094.00,238.72 L1095.00,237.08 L1096.00,235.44 L1097.00,233.79 L1098.00,232.13 L1099.00,230.47 L1100.00,228.79 L1101.00,227.10 L1102.00,225.41 L1103.00,223.71 L1104.00,222.01 L1105.00,220.29 L1106.00,218.58 L1107.00,216.85 L1108.00,215.12 L1109.00,213.39 L1110.00,211.65 L1111.00,209.91 L1112.00,208.16 L1113.00,206.41 L1114.00,204.73 L1115.00,203.18 L1116.00,201.77 L1117.00,200.48 L1118.00,199.33 L1119.00,198.32 L1120.00,197.44 L1121.00,196.70 L1122.00,196.09 L1123.00,195.61 L1124.00,195.27 L1125.00,195.07 L1126.00,195.00 L1127.00,195.00 L1128.00,195.00 L1129.00,195.00 L1130.00,195.00 L1131.00,195.00 L1132.00,195.00 L1133.00,195.00 L1134.00,195.00 L1135.00,195.00 L1136.00,195.00 L1137.00,195.00 L1138.00,195.00 L1139.00,195.00 L1140.00,195.00 L1141.00,195.00 L1142.00,195.00 L1143.00,195.00 L1144.00,195.00 L1145.00,195.00 L1146.00,195.00 L1147.00,195.00 L1148.00,195.00 L1149.00,195.00 L1150.00,195.00 L1151.00,195.00 L1152.00,195.00 L1153.00,195.00 L1154.00,195.00 L1155.00,195.00 L1156.00,195.00 L1157.00,195.00 L1158.00,195.00 L1159.00,195.00 L1160.00,195.00 L1161.00,195.00 L1162.00,195.00 L1163.00,195.00 L1164.00,195.00 L1165.00,195.00 L1166.00,195.00 L1167.00,195.00 L1168.00,195.00 L1169.00,195.00 L1170.00,195.00 L1171.00,195.00 L1172.00,195.00 L1173.00,195.00 L1174.00,195.00 L1175.00,195.00 L1176.00,195.00 L1177.00,195.00 L1178.00,195.00 L1179.00,195.00 L1180.00,195.00 L1181.00,195.00 L1182.00,195.00 L1183.00,195.00 L1184.00,195.00 L1185.00,195.00 L1186.00,195.00 L1187.00,195.00 L1188.00,195.00 L1189.00,195.00 L1190.00,195.00 L1191.00,195.00 L1192.00,195.00 L1193.00,195.00 L1194.00,195.00 L1195.00,195.00 L1196.00,195.00 L1197.00,195.00 L1198.00,195.00 L1199.00,195.00 L1200.00,195.00 L1201.00,195.00 L1202.00,195.00 L1203.00,195.00 L1204.00,195.00 L1205.00,195.00 L1206.00,195.00 L1207.00,195.00 L1208.00,195.00 L1209.00,195.00 L1210.00,195.00 L1211.00,195.00 L1212.00,195.00 L1213.00,195.00 L1214.00,195.00 L1215.00,195.00 L1216.00,195.00 L1217.00,195.00 L1218.00,195.00 L1219.00,195.00 L1220.00,195.00 L1221.00,195.00 L1222.00,195.00 L1223.00,195.00 L1224.00,195.00 L1225.00,195.00 L1226.00,195.00 L1227.00,195.00 L1228.00,195.00 L1229.00,195.00 L1230.00,195.00 L1231.00,195.00 L1232.00,195.00 L1233.00,195.00 L1234.00,195.00 L1235.00,195.00 L1236.00,195.00 L1237.00,195.00 L1238.00,195.00 L1239.00,195.00 L1240.00,195.00 L1241.00,195.00 L1242.00,195.00 L1243.00,195.00 L1244.00,195.00 L1245.00,195.00 L1246.00,195.00 L1247.00,195.00 L1248.00,195.00 L1249.00,195.00 L1250.00,195.00 L1251.00,195.00 L1252.00,195.00 L1253.00,195.00 L1254.00,195.00 L1255.00,195.00 L1256.00,195.00 L1257.00,195.00 L1258.00,195.00 L1259.00,195.00 L1260.00,195.00 L1261.00,195.00 L1262.00,195.00 L1263.00,195.00 L1264.00,195.00 L1265.00,195.00 L1266.00,195.00 L1267.00,195.00 L1268.00,195.00 L1269.00,195.00 L1270.00,195.00 L1271.00,195.00 L1272.00,195.00 L1273.00,195.00 L1274.00,195.00 L1275.00,195.00 L1276.00,195.00 L1277.00,195.00 L1278.00,195.00 L1279.00,195.00 L1280.00,195.00 L1281.00,195.00 L1282.00,195.00 L1283.00,195.00 L1284.00,195.00 L1285.00,195.00 L1286.00,195.00 L1287.00,195.00 L1288.00,195.00 L1289.00,195.00 L1290.00,195.00 L1291.00,195.00 L1292.00,195.00 L1293.00,195.00 L1294.00,195.00 L1295.00,195.00 L1296.00,195.00 L1297.00,195.00 L1298.00,195.00 L1299.00,195.00 L1300.00,195.00 L1301.00,195.00 L1302.00,195.00 L1303.00,195.00 L1304.00,195.00 L1305.00,195.00 L1306.00,195.00 L1307.00,195.00 L1308.00,195.00 L1309.00,195.00 L1310.00,195.00 L1311.00,195.00 L1312.00,195.00 L1313.00,195.00 L1314.00,195.00 L1315.00,195.00 L1316.00,195.00 L1317.00,195.00 L1318.00,195.02 L1319.00,195.15 L1320.00,195.43 L1321.00,195.83 L1322.00,196.37 L1323.00,197.05 L1324.00,197.86" fill="none" stroke="#0045ff" stroke-width="1.5"/>
<text class="tl" fill="#ff4500" stroke="#ff4500" stroke-width="0.35" transform="translate(26.5,195) rotate(-90)" textLength="45" lengthAdjust="spacingAndGlyphs">I(V3)</text>
<text class="tl" fill="#ff4500" stroke="#ff4500" stroke-width="0.35" transform="translate(26.5,154) rotate(-90)" textLength="38.5" lengthAdjust="spacingAndGlyphs">(V3)</text>
<text class="tl" fill="#0045ff" stroke="#0045ff" stroke-width="0.35" transform="translate(26,276) rotate(-90)" textLength="45.5" lengthAdjust="spacingAndGlyphs">I(V2)</text>
<text class="tl" fill="#0045ff" stroke="#0045ff" stroke-width="0.35" transform="translate(26,382) rotate(-90)" textLength="45.5" lengthAdjust="spacingAndGlyphs">I(V2)</text>
<path d="M97,469H1890V839H97Z" fill="none" stroke="#c8c8c8" stroke-width="2"/>
<path d="M89,469.0H97" stroke="#c8c8c8" stroke-width="2"/>
<text x="88" y="476.0" class="al">1.0V</text>
<path d="M89,506.0H97" stroke="#c8c8c8" stroke-width="2"/>
<text x="88" y="513.0" class="al">0.8V</text>
<path d="M89,543.0H97" stroke="#c8c8c8" stroke-width="2"/>
<text x="88" y="550.0" class="al">0.6V</text>
<path d="M89,580.0H97" stroke="#c8c8c8" stroke-width="2"/>
<text x="88" y="587.0" class="al">0.4V</text>
<path d="M89,617.0H97" stroke="#c8c8c8" stroke-width="2"/>
<text x="88" y="624.0" class="al">0.2V</text>
<path d="M89,654.0H97" stroke="#c8c8c8" stroke-width="2"/>
<text x="88" y="661.0" class="al">-0.0V</text>
<path d="M89,691.0H97" stroke="#c8c8c8" stroke-width="2"/>
<text x="88" y="698.0" class="al">-0.2V</text>
<path d="M89,728.0H97" stroke="#c8c8c8" stroke-width="2"/>
<text x="88" y="735.0" class="al">-0.4V</text>
<path d="M89,765.0H97" stroke="#c8c8c8" stroke-width="2"/>
<text x="88" y="772.0" class="al">-0.6V</text>
<path d="M89,802.0H97" stroke="#c8c8c8" stroke-width="2"/>
<text x="88" y="809.0" class="al">-0.8V</text>
<path d="M89,839.0H97" stroke="#c8c8c8" stroke-width="2"/>
<text x="88" y="846.0" class="al">-1.0V</text>
<path d="M97.0,839V845" stroke="#c8c8c8" stroke-width="2"/>
<text x="97.0" y="861" class="xl">0.0ms</text>
<path d="M156.8,839V845" stroke="#c8c8c8" stroke-width="2"/>
<text x="156.8" y="861" class="xl">0.1ms</text>
<path d="M216.5,839V845" stroke="#c8c8c8" stroke-width="2"/>
<text x="216.5" y="861" class="xl">0.2ms</text>
<path d="M276.3,839V845" stroke="#c8c8c8" stroke-width="2"/>
<text x="276.3" y="861" class="xl">0.3ms</text>
<path d="M336.1,839V845" stroke="#c8c8c8" stroke-width="2"/>
<text x="336.1" y="861" class="xl">0.4ms</text>
<path d="M395.8,839V845" stroke="#c8c8c8" stroke-width="2"/>
<text x="395.8" y="861" class="xl">0.5ms</text>
<path d="M455.6,839V845" stroke="#c8c8c8" stroke-width="2"/>
<text x="455.6" y="861" class="xl">0.6ms</text>
<path d="M515.4,839V845" stroke="#c8c8c8" stroke-width="2"/>
<text x="515.4" y="861" class="xl">0.7ms</text>
<path d="M575.1,839V845" stroke="#c8c8c8" stroke-width="2"/>
<text x="575.1" y="861" class="xl">0.8ms</text>
<path d="M634.9,839V845" stroke="#c8c8c8" stroke-width="2"/>
<text x="634.9" y="861" class="xl">0.9ms</text>
<path d="M694.7,839V845" stroke="#c8c8c8" stroke-width="2"/>
<text x="694.7" y="861" class="xl">1.0ms</text>
<path d="M754.4,839V845" stroke="#c8c8c8" stroke-width="2"/>
<text x="754.4" y="861" class="xl">1.1ms</text>
<path d="M814.2,839V845" stroke="#c8c8c8" stroke-width="2"/>
<text x="814.2" y="861" class="xl">1.2ms</text>
<path d="M874.0,839V845" stroke="#c8c8c8" stroke-width="2"/>
<text x="874.0" y="861" class="xl">1.3ms</text>
<path d="M933.7,839V845" stroke="#c8c8c8" stroke-width="2"/>
<text x="933.7" y="861" class="xl">1.4ms</text>
<path d="M993.5,839V845" stroke="#c8c8c8" stroke-width="2"/>
<text x="993.5" y="861" class="xl">1.5ms</text>
<path d="M1053.3,839V845" stroke="#c8c8c8" stroke-width="2"/>
<text x="1053.3" y="861" class="xl">1.6ms</text>
<path d="M1113.0,839V845" stroke="#c8c8c8" stroke-width="2"/>
<text x="1113.0" y="861" class="xl">1.7ms</text>
<path d="M1172.8,839V845" stroke="#c8c8c8" stroke-width="2"/>
<text x="1172.8" y="861" class="xl">1.8ms</text>
<path d="M1232.6,839V845" stroke="#c8c8c8" stroke-width="2"/>
<text x="1232.6" y="861" class="xl">1.9ms</text>
<path d="M1292.3,839V845" stroke="#c8c8c8" stroke-width="2"/>
<text x="1292.3" y="861" class="xl">2.0ms</text>
<path d="M1352.1,839V845" stroke="#c8c8c8" stroke-width="2"/>
<text x="1352.1" y="861" class="xl">2.1ms</text>
<path d="M1411.9,839V845" stroke="#c8c8c8" stroke-width="2"/>
<text x="1411.9" y="861" class="xl">2.2ms</text>
<path d="M1471.6,839V845" stroke="#c8c8c8" stroke-width="2"/>
<text x="1471.6" y="861" class="xl">2.3ms</text>
<path d="M1531.4,839V845" stroke="#c8c8c8" stroke-width="2"/>
<text x="1531.4" y="861" class="xl">2.4ms</text>
<path d="M1591.2,839V845" stroke="#c8c8c8" stroke-width="2"/>
<text x="1591.2" y="861" class="xl">2.5ms</text>
<path d="M1650.9,839V845" stroke="#c8c8c8" stroke-width="2"/>
<text x="1650.9" y="861" class="xl">2.6ms</text>
<path d="M1710.7,839V845" stroke="#c8c8c8" stroke-width="2"/>
<text x="1710.7" y="861" class="xl">2.7ms</text>
<path d="M1770.5,839V845" stroke="#c8c8c8" stroke-width="2"/>
<text x="1770.5" y="861" class="xl">2.8ms</text>
<path d="M1830.2,839V845" stroke="#c8c8c8" stroke-width="2"/>
<text x="1830.2" y="861" class="xl">2.9ms</text>
<path d="M1890.0,839V845" stroke="#c8c8c8" stroke-width="2"/>
<text x="1890.0" y="861" class="xl">3.0ms</text>
<path d="M97.00,654.00 L98.00,652.08 L99.00,650.15 L100.00,648.23 L101.00,646.31 L102.00,644.39 L103.00,642.46 L104.00,640.55 L105.00,638.63 L106.00,636.71 L107.00,634.80 L108.00,632.88 L109.00,630.97 L110.00,629.07 L111.00,627.16 L112.00,625.26 L113.00,623.36 L114.00,621.47 L115.00,619.58 L116.00,617.69 L117.00,615.81 L118.00,613.93 L119.00,612.05 L120.00,610.18 L121.00,608.32 L122.00,606.46 L123.00,604.60 L124.00,602.75 L125.00,600.91 L126.00,599.07 L127.00,597.24 L128.00,595.41 L129.00,593.59 L130.00,591.78 L131.00,589.97 L132.00,588.17 L133.00,586.38 L134.00,584.60 L135.00,582.82 L136.00,581.05 L137.00,579.29 L138.00,577.54 L139.00,575.80 L140.00,574.06 L141.00,572.34 L142.00,570.62 L143.00,568.91 L144.00,567.21 L145.00,565.52 L146.00,563.85 L147.00,562.18 L148.00,560.52 L149.00,558.87 L150.00,557.23 L151.00,555.60 L152.00,553.99 L153.00,552.38 L154.00,550.79 L155.00,549.20 L156.00,547.63 L157.00,546.07 L158.00,544.52 L159.00,542.99 L160.00,541.47 L161.00,539.96 L162.00,538.46 L163.00,536.97 L164.00,535.50 L165.00,534.04 L166.00,532.59 L167.00,531.16 L168.00,529.74 L169.00,528.34 L170.00,526.94 L171.00,525.57 L172.00,524.20 L173.00,522.85 L174.00,521.52 L175.00,520.20 L176.00,518.89 L177.00,517.60 L178.00,516.33 L179.00,515.07 L180.00,513.83 L181.00,512.60 L182.00,511.38 L183.00,510.19 L184.00,509.00 L185.00,507.84 L186.00,506.69 L187.00,505.56 L188.00,504.44 L189.00,503.34 L190.00,502.25 L191.00,501.19 L192.00,500.14 L193.00,499.10 L194.00,498.09 L195.00,497.09 L196.00,496.11 L197.00,495.14 L198.00,494.20 L199.00,493.27 L200.00,492.36 L201.00,491.47 L202.00,490.59 L203.00,489.73 L204.00,488.89 L205.00,488.07 L206.00,487.27 L207.00,486.49 L208.00,485.72 L209.00,484.98 L210.00,484.25 L211.00,483.54 L212.00,482.85 L213.00,482.18 L214.00,481.52 L215.00,480.89 L216.00,480.28 L217.00,479.68 L218.00,479.11 L219.00,478.55 L220.00,478.01 L221.00,477.49 L222.00,477.00 L223.00,476.52 L224.00,476.06 L225.00,475.62 L226.00,475.20 L227.00,474.80 L228.00,474.42 L229.00,474.06 L230.00,473.72 L231.00,473.40 L232.00,473.10 L233.00,472.82 L234.00,472.56 L235.00,472.32 L236.00,472.10 L237.00,471.90 L238.00,471.72 L239.00,471.56 L240.00,471.42 L241.00,471.30 L242.00,471.20 L243.00,471.12 L244.00,471.06 L245.00,471.02 L246.00,471.00 L247.00,471.00 L248.00,471.03 L249.00,471.07 L250.00,471.13 L251.00,471.21 L252.00,471.32 L253.00,471.44 L254.00,471.58 L255.00,471.74 L256.00,471.93 L257.00,472.13 L258.00,472.36 L259.00,472.60 L260.00,472.86 L261.00,473.15 L262.00,473.45 L263.00,473.77 L264.00,474.12 L265.00,474.48 L266.00,474.86 L267.00,475.27 L268.00,475.69 L269.00,476.13 L270.00,476.60 L271.00,477.08 L272.00,477.58 L273.00,478.10 L274.00,478.64 L275.00,479.20 L276.00,479.78 L277.00,480.38 L278.00,481.00 L279.00,481.63 L280.00,482.29 L281.00,482.96 L282.00,483.66 L283.00,484.37 L284.00,485.10 L285.00,485.85 L286.00,486.62 L287.00,487.40 L288.00,488.21 L289.00,489.03 L290.00,489.88 L291.00,490.74 L292.00,491.61 L293.00,492.51 L294.00,493.42 L295.00,494.35 L296.00,495.30 L297.00,496.27 L298.00,497.26 L299.00,498.26 L300.00,499.28 L301.00,500.31 L302.00,501.36 L303.00,502.43 L304.00,503.52 L305.00,504.62 L306.00,505.74 L307.00,506.88 L308.00,508.03 L309.00,509.20 L310.00,510.38 L311.00,511.58 L312.00,512.80 L313.00,514.03 L314.00,515.28 L315.00,516.54 L316.00,517.82 L317.00,519.11 L318.00,520.42 L319.00,521.74 L320.00,523.08 L321.00,524.43 L322.00,525.80 L323.00,527.18 L324.00,528.57 L325.00,529.98 L326.00,531.40 L327.00,532.83 L328.00,534.28 L329.00,535.74 L330.00,537.22 L331.00,538.71 L332.00,540.21 L333.00,541.72 L334.00,543.24 L335.00,544.78 L336.00,546.33 L337.00,547.89 L338.00,549.47 L339.00,551.05 L340.00,552.65 L341.00,554.25 L342.00,555.87 L343.00,557.50 L344.00,559.14 L345.00,560.79 L346.00,562.45 L347.00,564.12 L348.00,565.81 L349.00,567.50 L350.00,569.20 L351.00,570.91 L352.00,572.62 L353.00,574.35 L354.00,576.09 L355.00,577.83 L356.00,579.59 L357.00,581.35 L358.00,583.12 L359.00,584.90 L360.00,586.68 L361.00,588.47 L362.00,590.27 L363.00,592.08 L364.00,593.89 L365.00,595.71 L366.00,597.54 L367.00,599.37 L368.00,601.21 L369.00,603.06 L370.00,604.91 L371.00,606.77 L372.00,608.63 L373.00,610.49 L374.00,612.36 L375.00,614.24 L376.00,616.12 L377.00,618.00 L378.00,619.89 L379.00,621.78 L380.00,623.68 L381.00,625.58 L382.00,627.48 L383.00,629.39 L384.00,631.29 L385.00,633.20 L386.00,635.12 L387.00,637.03 L388.00,638.95 L389.00,640.86 L390.00,642.78 L391.00,644.71 L392.00,646.63 L393.00,648.55 L394.00,650.47 L395.00,652.40 L396.00,654.32 L397.00,656.24 L398.00,658.17 L399.00,660.09 L400.00,662.01 L401.00,663.94 L402.00,665.86 L403.00,667.77 L404.00,669.69 L405.00,671.61 L406.00,673.52 L407.00,675.43 L408.00,677.34 L409.00,679.25 L410.00,681.15 L411.00,683.05 L412.00,684.95 L413.00,686.85 L414.00,688.74 L415.00,690.62 L416.00,692.51 L417.00,694.39 L418.00,696.26 L419.00,698.13 L420.00,699.99 L421.00,701.85 L422.00,703.71 L423.00,705.56 L424.00,707.40 L425.00,709.24 L426.00,711.07 L427.00,712.89 L428.00,714.71 L429.00,716.52 L430.00,718.33 L431.00,720.12 L432.00,721.91 L433.00,723.70 L434.00,725.47 L435.00,727.24 L436.00,729.00 L437.00,730.75 L438.00,732.49 L439.00,734.23 L440.00,735.95 L441.00,737.67 L442.00,739.37 L443.00,741.07 L444.00,742.76 L445.00,744.43 L446.00,746.10 L447.00,747.76 L448.00,749.41 L449.00,751.04 L450.00,752.67 L451.00,754.28 L452.00,755.89 L453.00,757.48 L454.00,759.06 L455.00,760.63 L456.00,762.19 L457.00,763.73 L458.00,765.27 L459.00,766.79 L460.00,768.30 L461.00,769.79 L462.00,771.27 L463.00,772.75 L464.00,774.20 L465.00,775.65 L466.00,777.08 L467.00,778.49 L468.00,779.90 L469.00,781.29 L470.00,782.66 L471.00,784.02 L472.00,785.37 L473.00,786.70 L474.00,788.02 L475.00,789.32 L476.00,790.61 L477.00,791.88 L478.00,793.14 L479.00,794.38 L480.00,795.61 L481.00,796.82 L482.00,798.01 L483.00,799.19 L484.00,800.35 L485.00,801.50 L486.00,802.63 L487.00,803.75 L488.00,804.84 L489.00,805.92 L490.00,806.99 L491.00,808.04 L492.00,809.07 L493.00,810.08 L494.00,811.07 L495.00,812.05 L496.00,813.01 L497.00,813.96 L498.00,814.88 L499.00,815.79 L500.00,816.68 L501.00,817.55 L502.00,818.41 L503.00,819.24 L504.00,820.06 L505.00,820.86 L506.00,821.64 L507.00,822.40 L508.00,823.15 L509.00,823.87 L510.00,824.58 L511.00,825.26 L512.00,825.93 L513.00,826.58 L514.00,827.21 L515.00,827.82 L516.00,828.42 L517.00,828.99 L518.00,829.54 L519.00,830.08 L520.00,830.59 L521.00,831.09 L522.00,831.56 L523.00,832.02 L524.00,832.45 L525.00,832.87 L526.00,833.27 L527.00,833.64 L528.00,834.00 L529.00,834.34 L530.00,834.65 L531.00,834.95 L532.00,835.23 L533.00,835.48 L534.00,835.72 L535.00,835.94 L536.00,836.14 L537.00,836.31 L538.00,836.47 L539.00,836.61 L540.00,836.72 L541.00,836.82 L542.00,836.89 L543.00,836.95 L544.00,836.98 L545.00,837.00 L546.00,836.99 L547.00,836.97 L548.00,836.92 L549.00,836.86 L550.00,836.77 L551.00,836.67 L552.00,836.54 L553.00,836.39 L554.00,836.23 L555.00,836.04 L556.00,835.83 L557.00,835.61 L558.00,835.36 L559.00,835.09 L560.00,834.80 L561.00,834.50 L562.00,834.17 L563.00,833.82 L564.00,833.46 L565.00,833.07 L566.00,832.66 L567.00,832.24 L568.00,831.79 L569.00,831.33 L570.00,830.84 L571.00,830.34 L572.00,829.81 L573.00,829.27 L574.00,828.70 L575.00,828.12 L576.00,827.52 L577.00,826.90 L578.00,826.26 L579.00,825.60 L580.00,824.92 L581.00,824.23 L582.00,823.51 L583.00,822.78 L584.00,822.02 L585.00,821.25 L586.00,820.46 L587.00,819.65 L588.00,818.83 L589.00,817.98 L590.00,817.12 L591.00,816.24 L592.00,815.34 L593.00,814.42 L594.00,813.49 L595.00,812.54 L596.00,811.57 L597.00,810.58 L598.00,809.57 L599.00,808.55 L600.00,807.51 L601.00,806.46 L602.00,805.39 L603.00,804.30 L604.00,803.19 L605.00,802.07 L606.00,800.93 L607.00,799.78 L608.00,798.60 L609.00,797.42 L610.00,796.21 L611.00,795.00 L612.00,793.76 L613.00,792.51 L614.00,791.25 L615.00,789.97 L616.00,788.67 L617.00,787.36 L618.00,786.04 L619.00,784.70 L620.00,783.34 L621.00,781.98 L622.00,780.59 L623.00,779.20 L624.00,777.79 L625.00,776.36 L626.00,774.93 L627.00,773.48 L628.00,772.01 L629.00,770.53 L630.00,769.05 L631.00,767.54 L632.00,766.03 L633.00,764.50 L634.00,762.96 L635.00,761.41 L636.00,759.85 L637.00,758.27 L638.00,756.68 L639.00,755.09 L640.00,753.48 L641.00,751.86 L642.00,750.22 L643.00,748.58 L644.00,746.93 L645.00,745.27 L646.00,743.60 L647.00,741.91 L648.00,740.22 L649.00,738.52 L650.00,736.81 L651.00,735.09 L652.00,733.36 L653.00,731.62 L654.00,729.88 L655.00,728.12 L656.00,726.36 L657.00,724.59 L658.00,722.81 L659.00,721.02 L660.00,719.23 L661.00,717.43 L662.00,715.62 L663.00,713.80 L664.00,711.98 L665.00,710.15 L666.00,708.32 L667.00,706.48 L668.00,704.63 L669.00,702.78 L670.00,700.92 L671.00,699.06 L672.00,697.20 L673.00,695.32 L674.00,693.45 L675.00,691.57 L676.00,689.68 L677.00,687.79 L678.00,685.90 L679.00,684.00 L680.00,682.10 L681.00,680.20 L682.00,678.30 L683.00,676.39 L684.00,674.48 L685.00,672.57 L686.00,670.65 L687.00,668.73 L688.00,666.82 L689.00,664.90 L690.00,662.97 L691.00,661.05 L692.00,659.13 L693.00,657.21 L694.00,655.28 L695.00,653.36 L696.00,651.43 L697.00,649.51 L698.00,647.59 L699.00,645.67 L700.00,643.74 L701.00,641.82 L702.00,639.91 L703.00,637.99 L704.00,636.07 L705.00,634.16 L706.00,632.25 L707.00,630.34 L708.00,628.43 L709.00,626.53 L710.00,624.63 L711.00,622.73 L712.00,620.84 L713.00,618.95 L714.00,617.06 L715.00,615.18 L716.00,613.30 L717.00,611.43 L718.00,609.56 L719.00,607.70 L720.00,605.84 L721.00,603.98 L722.00,602.14 L723.00,600.29 L724.00,598.46 L725.00,596.63 L726.00,594.80 L727.00,592.99 L728.00,591.18 L729.00,589.37 L730.00,587.58 L731.00,585.79 L732.00,584.01 L733.00,582.23 L734.00,580.47 L735.00,578.71 L736.00,576.96 L737.00,575.22 L738.00,573.49 L739.00,571.76 L740.00,570.05 L741.00,568.34 L742.00,566.65 L743.00,564.96 L744.00,563.29 L745.00,561.62 L746.00,559.97 L747.00,558.32 L748.00,556.69 L749.00,555.06 L750.00,553.45 L751.00,551.85 L752.00,550.26 L753.00,548.68 L754.00,547.11 L755.00,545.56 L756.00,544.01 L757.00,542.48 L758.00,540.96 L759.00,539.45 L760.00,537.96 L761.00,536.48 L762.00,535.01 L763.00,533.56 L764.00,532.11 L765.00,530.69 L766.00,529.27 L767.00,527.87 L768.00,526.48 L769.00,525.11 L770.00,523.75 L771.00,522.41 L772.00,521.08 L773.00,519.76 L774.00,518.46 L775.00,517.18 L776.00,515.91 L777.00,514.65 L778.00,513.41 L779.00,512.19 L780.00,510.98 L781.00,509.79 L782.00,508.61 L783.00,507.45 L784.00,506.31 L785.00,505.18 L786.00,504.07 L787.00,502.97 L788.00,501.90 L789.00,500.84 L790.00,499.79 L791.00,498.76 L792.00,497.75 L793.00,496.76 L794.00,495.79 L795.00,494.83 L796.00,493.89 L797.00,492.96 L798.00,492.06 L799.00,491.17 L800.00,490.30 L801.00,489.45 L802.00,488.62 L803.00,487.80 L804.00,487.01 L805.00,486.23 L806.00,485.47 L807.00,484.73 L808.00,484.01 L809.00,483.31 L810.00,482.62 L811.00,481.96 L812.00,481.31 L813.00,480.68 L814.00,480.08 L815.00,479.49 L816.00,478.92 L817.00,478.37 L818.00,477.84 L819.00,477.33 L820.00,476.83 L821.00,476.36 L822.00,475.91 L823.00,475.48 L824.00,475.06 L825.00,474.67 L826.00,474.30 L827.00,473.94 L828.00,473.61 L829.00,473.30 L830.00,473.00 L831.00,472.73 L832.00,472.47 L833.00,472.24 L834.00,472.03 L835.00,471.83 L836.00,471.66 L837.00,471.51 L838.00,471.37 L839.00,471.26 L840.00,471.17 L841.00,471.10 L842.00,471.04 L843.00,471.01 L844.00,471.00 L845.00,471.01 L846.00,471.04 L847.00,471.09 L848.00,471.16 L849.00,471.24 L850.00,471.35 L851.00,471.48 L852.00,471.63 L853.00,471.80 L854.00,471.99 L855.00,472.20 L856.00,472.43 L857.00,472.68 L858.00,472.96 L859.00,473.25 L860.00,473.56 L861.00,473.89 L862.00,474.24 L863.00,474.61 L864.00,475.00 L865.00,475.41 L866.00,475.84 L867.00,476.29 L868.00,476.75 L869.00,477.24 L870.00,477.75 L871.00,478.28 L872.00,478.82 L873.00,479.39 L874.00,479.98 L875.00,480.58 L876.00,481.21 L877.00,481.85 L878.00,482.51 L879.00,483.19 L880.00,483.89 L881.00,484.61 L882.00,485.35 L883.00,486.10 L884.00,486.88 L885.00,487.67 L886.00,488.48 L887.00,489.31 L888.00,490.16 L889.00,491.03 L890.00,491.91 L891.00,492.81 L892.00,493.73 L893.00,494.67 L894.00,495.62 L895.00,496.60 L896.00,497.59 L897.00,498.59 L898.00,499.62 L899.00,500.66 L900.00,501.72 L901.00,502.79 L902.00,503.89 L903.00,504.99 L904.00,506.12 L905.00,507.26 L906.00,508.42 L907.00,509.59 L908.00,510.78 L909.00,511.99 L910.00,513.21 L911.00,514.45 L912.00,515.70 L913.00,516.97 L914.00,518.25 L915.00,519.55 L916.00,520.86 L917.00,522.19 L918.00,523.53 L919.00,524.88 L920.00,526.25 L921.00,527.64 L922.00,529.04 L923.00,530.45 L924.00,531.88 L925.00,533.31 L926.00,534.77 L927.00,536.23 L928.00,537.71 L929.00,539.20 L930.00,540.71 L931.00,542.23 L932.00,543.76 L933.00,545.30 L934.00,546.85 L935.00,548.42 L936.00,549.99 L937.00,551.58 L938.00,553.18 L939.00,554.79 L940.00,556.42 L941.00,558.05 L942.00,559.69 L943.00,561.35 L944.00,563.01 L945.00,564.68 L946.00,566.37 L947.00,568.06 L948.00,569.76 L949.00,571.48 L950.00,573.20 L951.00,574.93 L952.00,576.67 L953.00,578.42 L954.00,580.17 L955.00,581.94 L956.00,583.71 L957.00,585.49 L958.00,587.28 L959.00,589.07 L960.00,590.87 L961.00,592.68 L962.00,594.50 L963.00,596.32 L964.00,598.15 L965.00,599.99 L966.00,601.83 L967.00,603.67 L968.00,605.53 L969.00,607.39 L970.00,609.25 L971.00,611.12 L972.00,612.99 L973.00,614.87 L974.00,616.75 L975.00,618.63 L976.00,620.52 L977.00,622.42 L978.00,624.31 L979.00,626.21 L980.00,628.12 L981.00,630.02 L982.00,631.93 L983.00,633.84 L984.00,635.75 L985.00,637.67 L986.00,639.59 L987.00,641.50 L988.00,643.42 L989.00,645.35 L990.00,647.27 L991.00,649.19 L992.00,651.11 L993.00,653.04 L994.00,654.96 L995.00,656.89 L996.00,658.81 L997.00,660.73 L998.00,662.65 L999.00,664.58 L1000.00,666.50 L1001.00,668.41 L1002.00,670.33 L1003.00,672.25 L1004.00,674.16 L1005.00,676.07 L1006.00,677.98 L1007.00,679.88 L1008.00,681.79 L1009.00,683.69 L1010.00,685.58 L1011.00,687.48 L1012.00,689.37 L1013.00,691.25 L1014.00,693.13 L1015.00,695.01 L1016.00,696.88 L1017.00,698.75 L1018.00,700.61 L1019.00,702.47 L1020.00,704.33 L1021.00,706.17 L1022.00,708.01 L1023.00,709.85 L1024.00,711.68 L1025.00,713.50 L1026.00,715.32 L1027.00,717.13 L1028.00,718.93 L1029.00,720.72 L1030.00,722.51 L1031.00,724.29 L1032.00,726.06 L1033.00,727.83 L1034.00,729.58 L1035.00,731.33 L1036.00,733.07 L1037.00,734.80 L1038.00,736.52 L1039.00,738.24 L1040.00,739.94 L1041.00,741.63 L1042.00,743.32 L1043.00,744.99 L1044.00,746.65 L1045.00,748.31 L1046.00,749.95 L1047.00,751.58 L1048.00,753.21 L1049.00,754.82 L1050.00,756.42 L1051.00,758.01 L1052.00,759.58 L1053.00,761.15 L1054.00,762.70 L1055.00,764.24 L1056.00,765.77 L1057.00,767.29 L1058.00,768.80 L1059.00,770.29 L1060.00,771.77 L1061.00,773.23 L1062.00,774.69 L1063.00,776.12 L1064.00,777.55 L1065.00,778.96 L1066.00,780.36 L1067.00,781.75 L1068.00,783.12 L1069.00,784.47 L1070.00,785.81 L1071.00,787.14 L1072.00,788.45 L1073.00,789.75 L1074.00,791.03 L1075.00,792.30 L1076.00,793.55 L1077.00,794.79 L1078.00,796.01 L1079.00,797.22 L1080.00,798.41 L1081.00,799.58 L1082.00,800.74 L1083.00,801.88 L1084.00,803.01 L1085.00,804.11 L1086.00,805.21 L1087.00,806.28 L1088.00,807.34 L1089.00,808.38 L1090.00,809.41 L1091.00,810.41 L1092.00,811.40 L1093.00,812.38 L1094.00,813.33 L1095.00,814.27 L1096.00,815.19 L1097.00,816.09 L1098.00,816.97 L1099.00,817.84 L1100.00,818.69 L1101.00,819.52 L1102.00,820.33 L1103.00,821.12 L1104.00,821.90 L1105.00,822.65 L1106.00,823.39 L1107.00,824.11 L1108.00,824.81 L1109.00,825.49 L1110.00,826.15 L1111.00,826.79 L1112.00,827.42 L1113.00,828.02 L1114.00,828.61 L1115.00,829.18 L1116.00,829.72 L1117.00,830.25 L1118.00,830.76 L1119.00,831.25 L1120.00,831.71 L1121.00,832.16 L1122.00,832.59 L1123.00,833.00 L1124.00,833.39 L1125.00,833.76 L1126.00,834.11 L1127.00,834.44 L1128.00,834.75 L1129.00,835.04 L1130.00,835.32 L1131.00,835.57 L1132.00,835.80 L1133.00,836.01 L1134.00,836.20 L1135.00,836.37 L1136.00,836.52 L1137.00,836.65 L1138.00,836.76 L1139.00,836.84 L1140.00,836.91 L1141.00,836.96 L1142.00,836.99 L1143.00,837.00 L1144.00,836.99 L1145.00,836.96 L1146.00,836.90 L1147.00,836.83 L1148.00,836.74 L1149.00,836.63 L1150.00,836.49 L1151.00,836.34 L1152.00,836.17 L1153.00,835.97 L1154.00,835.76 L1155.00,835.53 L1156.00,835.27 L1157.00,835.00 L1158.00,834.70 L1159.00,834.39 L1160.00,834.06 L1161.00,833.70 L1162.00,833.33 L1163.00,832.94 L1164.00,832.52 L1165.00,832.09 L1166.00,831.64 L1167.00,831.17 L1168.00,830.67 L1169.00,830.16 L1170.00,829.63 L1171.00,829.08 L1172.00,828.51 L1173.00,827.92 L1174.00,827.32 L1175.00,826.69 L1176.00,826.04 L1177.00,825.38 L1178.00,824.69 L1179.00,823.99 L1180.00,823.27 L1181.00,822.53 L1182.00,821.77 L1183.00,820.99 L1184.00,820.20 L1185.00,819.38 L1186.00,818.55 L1187.00,817.70 L1188.00,816.83 L1189.00,815.94 L1190.00,815.04 L1191.00,814.11 L1192.00,813.17 L1193.00,812.21 L1194.00,811.24 L1195.00,810.25 L1196.00,809.24 L1197.00,808.21 L1198.00,807.16 L1199.00,806.10 L1200.00,805.03 L1201.00,803.93 L1202.00,802.82 L1203.00,801.69 L1204.00,800.55 L1205.00,799.39 L1206.00,798.21 L1207.00,797.02 L1208.00,795.81 L1209.00,794.59 L1210.00,793.35 L1211.00,792.09 L1212.00,790.82 L1213.00,789.54 L1214.00,788.24 L1215.00,786.92 L1216.00,785.59 L1217.00,784.25 L1218.00,782.89 L1219.00,781.52 L1220.00,780.13 L1221.00,778.73 L1222.00,777.31 L1223.00,775.89 L1224.00,774.44 L1225.00,772.99 L1226.00,771.52 L1227.00,770.04 L1228.00,768.55 L1229.00,767.04 L1230.00,765.52 L1231.00,763.99 L1232.00,762.44 L1233.00,760.89 L1234.00,759.32 L1235.00,757.74 L1236.00,756.15 L1237.00,754.55 L1238.00,752.94 L1239.00,751.31 L1240.00,749.68 L1241.00,748.03 L1242.00,746.38 L1243.00,744.71 L1244.00,743.04 L1245.00,741.35 L1246.00,739.66 L1247.00,737.95 L1248.00,736.24 L1249.00,734.51 L1250.00,732.78 L1251.00,731.04 L1252.00,729.29 L1253.00,727.53 L1254.00,725.77 L1255.00,723.99 L1256.00,722.21 L1257.00,720.42 L1258.00,718.63 L1259.00,716.82 L1260.00,715.01 L1261.00,713.20 L1262.00,711.37 L1263.00,709.54 L1264.00,707.71 L1265.00,705.86 L1266.00,704.02 L1267.00,702.16 L1268.00,700.30 L1269.00,698.44 L1270.00,696.57 L1271.00,694.70 L1272.00,692.82 L1273.00,690.94 L1274.00,689.05 L1275.00,687.16 L1276.00,685.27 L1277.00,683.37 L1278.00,681.47 L1279.00,679.57 L1280.00,677.66 L1281.00,675.75 L1282.00,673.84 L1283.00,671.93 L1284.00,670.01 L1285.00,668.09 L1286.00,666.18 L1287.00,664.26 L1288.00,662.33 L1289.00,660.41 L1290.00,658.49 L1291.00,656.57 L1292.00,654.64 L1293.00,652.72 L1294.00,650.79 L1295.00,648.87 L1296.00,646.95 L1297.00,645.03 L1298.00,643.10 L1299.00,641.18 L1300.00,639.27 L1301.00,637.35 L1302.00,635.43 L1303.00,633.52 L1304.00,631.61 L1305.00,629.70 L1306.00,627.80 L1307.00,625.90 L1308.00,624.00 L1309.00,622.10 L1310.00,620.21 L1311.00,618.32 L1312.00,616.43 L1313.00,614.55 L1314.00,612.68 L1315.00,610.80 L1316.00,608.94 L1317.00,607.08 L1318.00,605.22 L1319.00,603.37 L1320.00,601.52 L1321.00,599.68 L1322.00,597.85 L1323.00,596.02 L1324.00,594.20 L1325.00,592.38 L1326.00,590.57 L1327.00,588.77 L1328.00,586.98 L1329.00,585.19 L1330.00,583.41 L1331.00,581.64 L1332.00,579.88 L1333.00,578.12 L1334.00,576.38 L1335.00,574.64 L1336.00,572.91 L1337.00,571.19 L1338.00,569.48 L1339.00,567.78 L1340.00,566.09 L1341.00,564.40 L1342.00,562.73 L1343.00,561.07 L1344.00,559.42 L1345.00,557.78 L1346.00,556.14 L1347.00,554.52 L1348.00,552.91 L1349.00,551.32 L1350.00,549.73 L1351.00,548.15 L1352.00,546.59 L1353.00,545.04 L1354.00,543.50 L1355.00,541.97 L1356.00,540.46 L1357.00,538.95 L1358.00,537.47 L1359.00,535.99 L1360.00,534.52 L1361.00,533.07 L1362.00,531.64 L1363.00,530.21 L1364.00,528.80 L1365.00,527.41 L1366.00,526.02 L1367.00,524.66 L1368.00,523.30 L1369.00,521.96 L1370.00,520.64 L1371.00,519.33 L1372.00,518.03 L1373.00,516.75 L1374.00,515.49 L1375.00,514.24 L1376.00,513.00 L1377.00,511.79 L1378.00,510.58 L1379.00,509.40 L1380.00,508.22 L1381.00,507.07 L1382.00,505.93 L1383.00,504.81 L1384.00,503.70 L1385.00,502.61 L1386.00,501.54 L1387.00,500.49 L1388.00,499.45 L1389.00,498.43 L1390.00,497.42 L1391.00,496.43 L1392.00,495.46 L1393.00,494.51 L1394.00,493.58 L1395.00,492.66 L1396.00,491.76 L1397.00,490.88 L1398.00,490.02 L1399.00,489.17 L1400.00,488.35 L1401.00,487.54 L1402.00,486.75 L1403.00,485.98 L1404.00,485.22 L1405.00,484.49 L1406.00,483.77 L1407.00,483.08 L1408.00,482.40 L1409.00,481.74 L1410.00,481.10 L1411.00,480.48 L1412.00,479.88 L1413.00,479.30 L1414.00,478.73 L1415.00,478.19 L1416.00,477.66 L1417.00,477.16 L1418.00,476.67 L1419.00,476.21 L1420.00,475.76 L1421.00,475.34 L1422.00,474.93 L1423.00,474.54 L1424.00,474.18 L1425.00,473.83 L1426.00,473.50 L1427.00,473.20 L1428.00,472.91 L1429.00,472.64 L1430.00,472.39 L1431.00,472.17 L1432.00,471.96 L1433.00,471.77 L1434.00,471.61 L1435.00,471.46 L1436.00,471.33 L1437.00,471.23 L1438.00,471.14 L1439.00,471.08 L1440.00,471.03 L1441.00,471.01 L1442.00,471.00 L1443.00,471.02 L1444.00,471.05 L1445.00,471.11 L1446.00,471.18 L1447.00,471.28 L1448.00,471.39 L1449.00,471.53 L1450.00,471.69 L1451.00,471.86 L1452.00,472.06 L1453.00,472.28 L1454.00,472.52 L1455.00,472.77 L1456.00,473.05 L1457.00,473.35 L1458.00,473.66 L1459.00,474.00 L1460.00,474.36 L1461.00,474.73 L1462.00,475.13 L1463.00,475.55 L1464.00,475.98 L1465.00,476.44 L1466.00,476.91 L1467.00,477.41 L1468.00,477.92 L1469.00,478.46 L1470.00,479.01 L1471.00,479.58 L1472.00,480.18 L1473.00,480.79 L1474.00,481.42 L1475.00,482.07 L1476.00,482.74 L1477.00,483.42 L1478.00,484.13 L1479.00,484.85 L1480.00,485.60 L1481.00,486.36 L1482.00,487.14 L1483.00,487.94 L1484.00,488.76 L1485.00,489.59 L1486.00,490.45 L1487.00,491.32 L1488.00,492.21 L1489.00,493.12 L1490.00,494.04 L1491.00,494.99 L1492.00,495.95 L1493.00,496.93 L1494.00,497.92 L1495.00,498.93 L1496.00,499.96 L1497.00,501.01 L1498.00,502.08 L1499.00,503.16 L1500.00,504.25 L1501.00,505.37 L1502.00,506.50 L1503.00,507.65 L1504.00,508.81 L1505.00,509.99 L1506.00,511.18 L1507.00,512.39 L1508.00,513.62 L1509.00,514.86 L1510.00,516.12 L1511.00,517.39 L1512.00,518.68 L1513.00,519.98 L1514.00,521.30 L1515.00,522.63 L1516.00,523.98 L1517.00,525.34 L1518.00,526.71 L1519.00,528.10 L1520.00,529.51 L1521.00,530.92 L1522.00,532.35 L1523.00,533.80 L1524.00,535.25 L1525.00,536.73 L1526.00,538.21 L1527.00,539.70 L1528.00,541.21 L1529.00,542.73 L1530.00,544.27 L1531.00,545.81 L1532.00,547.37 L1533.00,548.94 L1534.00,550.52 L1535.00,552.11 L1536.00,553.72 L1537.00,555.33 L1538.00,556.96 L1539.00,558.59 L1540.00,560.24 L1541.00,561.90 L1542.00,563.57 L1543.00,565.24 L1544.00,566.93 L1545.00,568.63 L1546.00,570.33 L1547.00,572.05 L1548.00,573.77 L1549.00,575.51 L1550.00,577.25 L1551.00,579.00 L1552.00,580.76 L1553.00,582.53 L1554.00,584.30 L1555.00,586.09 L1556.00,587.88 L1557.00,589.67 L1558.00,591.48 L1559.00,593.29 L1560.00,595.11 L1561.00,596.93 L1562.00,598.76 L1563.00,600.60 L1564.00,602.44 L1565.00,604.29 L1566.00,606.15 L1567.00,608.01 L1568.00,609.87 L1569.00,611.74 L1570.00,613.61 L1571.00,615.49 L1572.00,617.38 L1573.00,619.26 L1574.00,621.15 L1575.00,623.05 L1576.00,624.95 L1577.00,626.85 L1578.00,628.75 L1579.00,630.66 L1580.00,632.57 L1581.00,634.48 L1582.00,636.39 L1583.00,638.31 L1584.00,640.23 L1585.00,642.14 L1586.00,644.06 L1587.00,645.99 L1588.00,647.91 L1589.00,649.83 L1590.00,651.76 L1591.00,653.68 L1592.00,655.60 L1593.00,657.53 L1594.00,659.45 L1595.00,661.37 L1596.00,663.29 L1597.00,665.22 L1598.00,667.14 L1599.00,669.05 L1600.00,670.97 L1601.00,672.88 L1602.00,674.80 L1603.00,676.71 L1604.00,678.61 L1605.00,680.52 L1606.00,682.42 L1607.00,684.32 L1608.00,686.22 L1609.00,688.11 L1610.00,690.00 L1611.00,691.88 L1612.00,693.76 L1613.00,695.64 L1614.00,697.51 L1615.00,699.37 L1616.00,701.23 L1617.00,703.09 L1618.00,704.94 L1619.00,706.79 L1620.00,708.63 L1621.00,710.46 L1622.00,712.29 L1623.00,714.11 L1624.00,715.92 L1625.00,717.73 L1626.00,719.53 L1627.00,721.32 L1628.00,723.10 L1629.00,724.88 L1630.00,726.65 L1631.00,728.41 L1632.00,730.17 L1633.00,731.91 L1634.00,733.65 L1635.00,735.38 L1636.00,737.09 L1637.00,738.80 L1638.00,740.50 L1639.00,742.19 L1640.00,743.88 L1641.00,745.55 L1642.00,747.21 L1643.00,748.86 L1644.00,750.50 L1645.00,752.13 L1646.00,753.75 L1647.00,755.35 L1648.00,756.95 L1649.00,758.53 L1650.00,760.11 L1651.00,761.67 L1652.00,763.22 L1653.00,764.76 L1654.00,766.28 L1655.00,767.79 L1656.00,769.29 L1657.00,770.78 L1658.00,772.26 L1659.00,773.72 L1660.00,775.17 L1661.00,776.60 L1662.00,778.02 L1663.00,779.43 L1664.00,780.82 L1665.00,782.20 L1666.00,783.57 L1667.00,784.92 L1668.00,786.26 L1669.00,787.58 L1670.00,788.89 L1671.00,790.18 L1672.00,791.46 L1673.00,792.72 L1674.00,793.97 L1675.00,795.20 L1676.00,796.42 L1677.00,797.62 L1678.00,798.80 L1679.00,799.97 L1680.00,801.12 L1681.00,802.26 L1682.00,803.38 L1683.00,804.48 L1684.00,805.57 L1685.00,806.64 L1686.00,807.69 L1687.00,808.72 L1688.00,809.74 L1689.00,810.74 L1690.00,811.73 L1691.00,812.70 L1692.00,813.65 L1693.00,814.58 L1694.00,815.49 L1695.00,816.39 L1696.00,817.26 L1697.00,818.12 L1698.00,818.97 L1699.00,819.79 L1700.00,820.60 L1701.00,821.38 L1702.00,822.15 L1703.00,822.90 L1704.00,823.63 L1705.00,824.34 L1706.00,825.04 L1707.00,825.71 L1708.00,826.37 L1709.00,827.00 L1710.00,827.62 L1711.00,828.22 L1712.00,828.80 L1713.00,829.36 L1714.00,829.90 L1715.00,830.42 L1716.00,830.92 L1717.00,831.40 L1718.00,831.87 L1719.00,832.31 L1720.00,832.73 L1721.00,833.14 L1722.00,833.52 L1723.00,833.88 L1724.00,834.23 L1725.00,834.55 L1726.00,834.85 L1727.00,835.14 L1728.00,835.40 L1729.00,835.64 L1730.00,835.87 L1731.00,836.07 L1732.00,836.26 L1733.00,836.42 L1734.00,836.56 L1735.00,836.68 L1736.00,836.79 L1737.00,836.87 L1738.00,836.93 L1739.00,836.97 L1740.00,837.00 L1741.00,837.00 L1742.00,836.98 L1743.00,836.94 L1744.00,836.88 L1745.00,836.80 L1746.00,836.70 L1747.00,836.58 L1748.00,836.44 L1749.00,836.28 L1750.00,836.10 L1751.00,835.90 L1752.00,835.68 L1753.00,835.44 L1754.00,835.18 L1755.00,834.90 L1756.00,834.60 L1757.00,834.28 L1758.00,833.94 L1759.00,833.58 L1760.00,833.20 L1761.00,832.80 L1762.00,832.38 L1763.00,831.94 L1764.00,831.48 L1765.00,831.00 L1766.00,830.51 L1767.00,829.99 L1768.00,829.45 L1769.00,828.89 L1770.00,828.32 L1771.00,827.72 L1772.00,827.11 L1773.00,826.48 L1774.00,825.82 L1775.00,825.15 L1776.00,824.46 L1777.00,823.75 L1778.00,823.02 L1779.00,822.28 L1780.00,821.51 L1781.00,820.73 L1782.00,819.93 L1783.00,819.11 L1784.00,818.27 L1785.00,817.41 L1786.00,816.53 L1787.00,815.64 L1788.00,814.73 L1789.00,813.80 L1790.00,812.86 L1791.00,811.89 L1792.00,810.91 L1793.00,809.91 L1794.00,808.90 L1795.00,807.86 L1796.00,806.81 L1797.00,805.75 L1798.00,804.66 L1799.00,803.56 L1800.00,802.44 L1801.00,801.31 L1802.00,800.16 L1803.00,799.00 L1804.00,797.81 L1805.00,796.62 L1806.00,795.40 L1807.00,794.17 L1808.00,792.93 L1809.00,791.67 L1810.00,790.40 L1811.00,789.11 L1812.00,787.80 L1813.00,786.48 L1814.00,785.15 L1815.00,783.80 L1816.00,782.43 L1817.00,781.06 L1818.00,779.66 L1819.00,778.26 L1820.00,776.84 L1821.00,775.41 L1822.00,773.96 L1823.00,772.50 L1824.00,771.03 L1825.00,769.54 L1826.00,768.04 L1827.00,766.53 L1828.00,765.01 L1829.00,763.48 L1830.00,761.93 L1831.00,760.37 L1832.00,758.80 L1833.00,757.21 L1834.00,755.62 L1835.00,754.01 L1836.00,752.40 L1837.00,750.77 L1838.00,749.13 L1839.00,747.48 L1840.00,745.82 L1841.00,744.15 L1842.00,742.48 L1843.00,740.79 L1844.00,739.09 L1845.00,737.38 L1846.00,735.66 L1847.00,733.94 L1848.00,732.20 L1849.00,730.46 L1850.00,728.71 L1851.00,726.95 L1852.00,725.18 L1853.00,723.40 L1854.00,721.62 L1855.00,719.83 L1856.00,718.03 L1857.00,716.22 L1858.00,714.41 L1859.00,712.59 L1860.00,710.76 L1861.00,708.93 L1862.00,707.09 L1863.00,705.25 L1864.00,703.40 L1865.00,701.54 L1866.00,699.68 L1867.00,697.82 L1868.00,695.95 L1869.00,694.07 L1870.00,692.19 L1871.00,690.31 L1872.00,688.42 L1873.00,686.53 L1874.00,684.64 L1875.00,682.74 L1876.00,680.84 L1877.00,678.93 L1878.00,677.03 L1879.00,675.12 L1880.00,673.20 L1881.00,671.29 L1882.00,669.37 L1883.00,667.45 L1884.00,665.54 L1885.00,663.61 L1886.00,661.69 L1887.00,659.77 L1888.00,657.85 L1889.00,655.92 L1890.00,654.00" fill="none" stroke="#00f000" stroke-width="1.5"/>
<text class="tl" fill="#00f000" stroke="#00f000" stroke-width="0.35" transform="translate(40,683) rotate(-90)" textLength="56.5" lengthAdjust="spacingAndGlyphs">V(out)</text>
<!-- status -->
<g style="font-size:11.3px;fill:#000"><text x="4.6" y="884" textLength="163" lengthAdjust="spacing">Mouse Position: Time=1.1227ms</text><text x="174.5" y="884" textLength="50.5" lengthAdjust="spacing">-27.957µA</text></g>
<text x="1867.5" y="884" style="font-size:11px;fill:#505050" textLength="19.5" lengthAdjust="spacingAndGlyphs">CAP</text>
<path d="M1889,871V887" stroke="#d4d4d4" stroke-width="1"/>
<text x="1893.5" y="884" style="font-size:11px;fill:#505050" textLength="22.5" lengthAdjust="spacingAndGlyphs">OVR</text>
</svg>
</body></html>
